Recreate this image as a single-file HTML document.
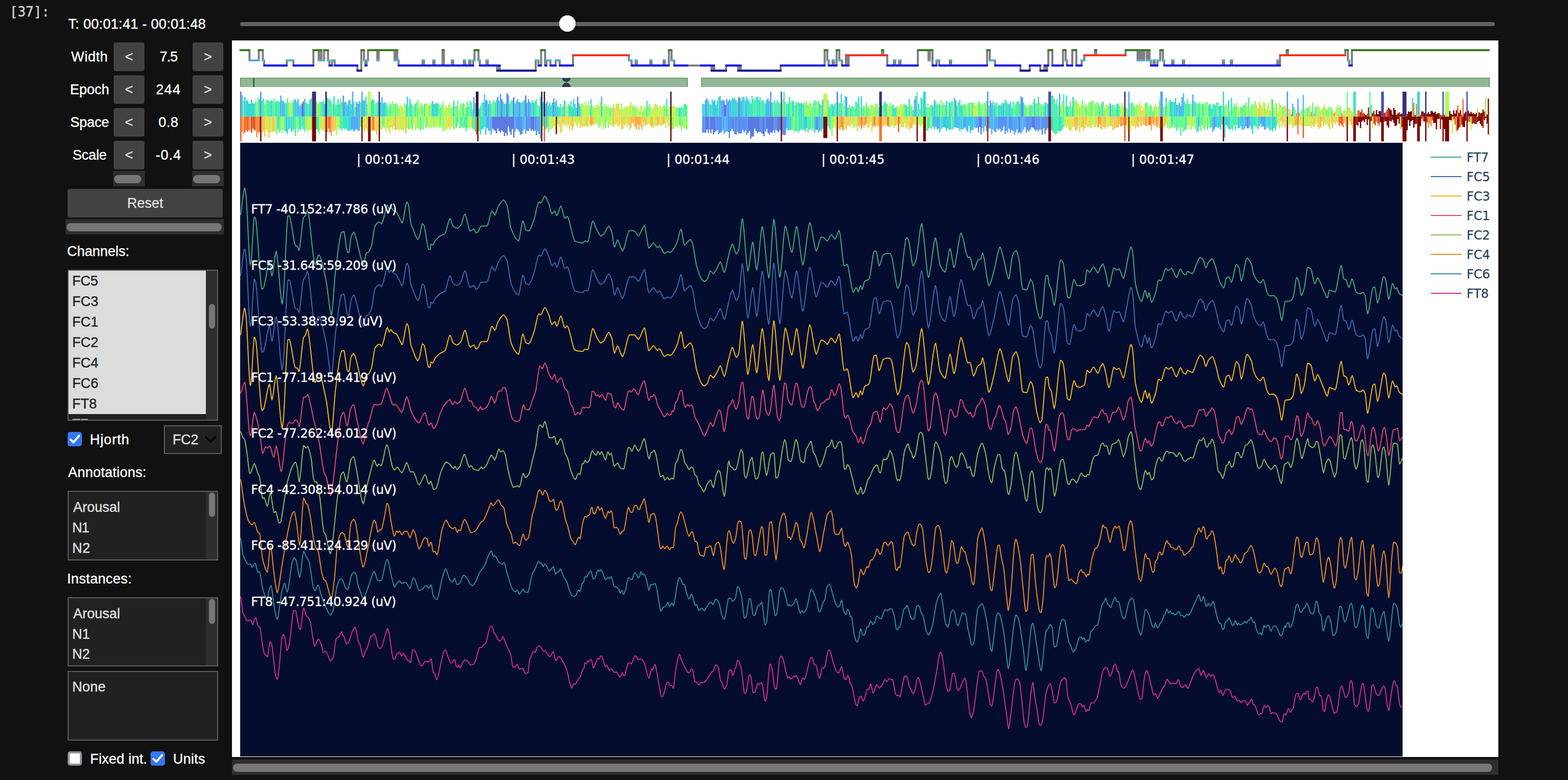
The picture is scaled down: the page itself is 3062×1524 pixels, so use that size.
<!DOCTYPE html>
<html lang="en"><head><meta charset="utf-8"><title>EEG viewer</title>
<style>
html,body{margin:0;padding:0;background:#111111;}
body{-webkit-text-stroke:0.4px currentColor;width:3062px;height:1524px;position:relative;overflow:hidden;font-family:"Liberation Sans",sans-serif;color:#fff;}
.a{position:absolute;}
.t{position:absolute;margin-top:0px;font-size:27px;line-height:26px;white-space:nowrap;color:#fff;}
.c{text-align:center;}
.btn{position:absolute;background:#424242;border-radius:4px;color:#e0e0e0;font-size:27px;line-height:26px;text-align:center;}
.trk{position:absolute;background:#2e2e2e;}
.thm{position:absolute;background:#767676;border-radius:8px;}
.lb{position:absolute;box-sizing:border-box;border:2px solid #5e5e5e;background:#212121;}
.li{position:absolute;margin-top:-0.4px;left:7px;font-size:27px;line-height:26px;color:#e0e0e0;white-space:nowrap;}
.cb{position:absolute;width:28px;height:28px;border-radius:5px;background:#3478f6;}
svg text.pt{font-family:"DejaVu Sans","Liberation Sans",sans-serif;font-size:24px;fill:#fff;stroke:#fff;stroke-width:0.35px;}
svg text.pl{font-family:"DejaVu Sans","Liberation Sans",sans-serif;font-size:24px;letter-spacing:-0.36px;fill:#fff;stroke:#fff;stroke-width:0.35px;}
svg text.lg{font-family:"DejaVu Sans","Liberation Sans",sans-serif;font-size:24px;fill:#2a3f5f;stroke:#2a3f5f;stroke-width:0.3px;}
</style></head><body>
<div class="t" id="prompt" style="font-size:26px;left:19px;top:9.7px;font-family:'DejaVu Sans Mono','Liberation Mono',monospace;color:#d4d4d4;letter-spacing:-0.1px">[37]:</div>
<div class="t" id="tlabel" style="left:133.3px;top:33.8px;letter-spacing:0.28px"><span id="tl">T: 00:01:41 - 00:01:48</span></div>

<!-- top slider -->
<div class="a" style="left:469px;top:43px;width:2450px;height:8px;border-radius:3px;background:#616161"></div>
<div class="a" style="left:1092px;top:30px;width:32px;height:32px;border-radius:16px;background:#fff;box-shadow:inset 0 0 0 2px #ececec"></div>

<!-- control rows -->
<div class="t c" style="left:132px;width:86px;top:97.8px"><span id="lw" style="letter-spacing:0.55px">Width</span></div>
<div class="btn" style="left:222px;top:83px;width:60px;height:56px"><span class="a" style="left:0;right:0;top:15px">&lt;</span></div>
<div class="t c" style="left:282px;width:94px;top:97.8px"><span id="v1" style="letter-spacing:-1.0px">7.5</span></div>
<div class="btn" style="left:376px;top:83px;width:60px;height:56px"><span class="a" style="left:0;right:0;top:15px">&gt;</span></div>

<div class="t c" style="left:132px;width:86px;top:161.8px"><span id="le">Epoch</span></div>
<div class="btn" style="left:222px;top:147px;width:60px;height:56px"><span class="a" style="left:0;right:0;top:15px">&lt;</span></div>
<div class="t c" style="left:282px;width:94px;top:161.8px"><span id="v2" style="letter-spacing:1.25px">244</span></div>
<div class="btn" style="left:376px;top:147px;width:60px;height:56px"><span class="a" style="left:0;right:0;top:15px">&gt;</span></div>

<div class="t c" style="left:132px;width:86px;top:225.8px"><span id="lsp" style="letter-spacing:-0.17px">Space</span></div>
<div class="btn" style="left:222px;top:211px;width:60px;height:56px"><span class="a" style="left:0;right:0;top:15px">&lt;</span></div>
<div class="t c" style="left:282px;width:94px;top:225.8px"><span id="v3" style="letter-spacing:0.55px">0.8</span></div>
<div class="btn" style="left:376px;top:211px;width:60px;height:56px"><span class="a" style="left:0;right:0;top:15px">&gt;</span></div>

<div class="t c" style="left:132px;width:86px;top:289.8px"><span id="lsc" style="letter-spacing:-0.23px">Scale</span></div>
<div class="btn" style="left:222px;top:275px;width:60px;height:56px"><span class="a" style="left:0;right:0;top:15px">&lt;</span></div>
<div class="t c" style="left:282px;width:94px;top:289.8px"><span id="v4" style="letter-spacing:0.9px">-0.4</span></div>
<div class="btn" style="left:376px;top:275px;width:60px;height:56px"><span class="a" style="left:0;right:0;top:15px">&gt;</span></div>

<div class="trk" style="left:221px;top:334px;width:62px;height:30px"></div>
<div class="thm" style="left:223px;top:342px;width:53px;height:16px"></div>
<div class="trk" style="left:375px;top:334px;width:62px;height:30px"></div>
<div class="thm" style="left:377px;top:342px;width:53px;height:16px"></div>

<div class="btn" style="left:132px;top:369px;width:303px;height:56px"><span class="a" style="left:0;right:0;top:15px" id="rst">Reset</span></div>
<div class="trk" style="left:128px;top:428px;width:309px;height:30px"></div>
<div class="thm" style="left:130px;top:436px;width:303px;height:16px"></div>

<div class="t" style="left:131px;top:477.5px"><span id="lch">Channels:</span></div>
<div class="lb" style="left:132px;top:527px;width:294px;height:295px;overflow:hidden">
  <div class="a" style="left:0;top:0;width:268px;height:280px;background:#dcdcdc"></div>
  <div class="a" style="left:268px;top:0;width:22px;height:291px;background:#2e2e2e"></div>
  <div class="thm" style="left:274px;top:64.7px;width:12px;height:48px;border-radius:6px"></div>
  <div class="li" style="top:7.2px;color:#212121"><span id="i5" style="letter-spacing:-0.3px">FC5</span></div>
  <div class="li" style="top:47.2px;color:#212121">FC3</div>
  <div class="li" style="top:87.2px;color:#212121">FC1</div>
  <div class="li" style="top:127.2px;color:#212121">FC2</div>
  <div class="li" style="top:167.2px;color:#212121">FC4</div>
  <div class="li" style="top:207.2px;color:#212121">FC6</div>
  <div class="li" style="top:247.2px;color:#212121"><span id="i8">FT8</span></div>
  <div class="li" style="top:287.2px">T7</div>
</div>

<div class="cb" style="left:132px;top:844px"><svg class="a" style="left:0;top:0" width="28" height="28" viewBox="0 0 28 28"><path d="M5.6 14.8 L11.4 20.2 L22.5 7.4" fill="none" stroke="#fff" stroke-width="3.9" stroke-linecap="round" stroke-linejoin="round"/></svg></div>
<div class="t" style="left:175.5px;top:846px"><span id="lhj" style="letter-spacing:0.92px">Hjorth</span></div>
<div class="lb" style="left:320px;top:831px;width:113px;height:56px"></div>
<div class="t" style="left:337px;top:846px;color:#e0e0e0"><span id="sel" style="letter-spacing:-0.3px">FC2</span></div>
<svg class="a" style="left:398px;top:848px" width="28" height="22" viewBox="0 0 28 22"><path d="M3.3 5 L13.3 15.2 L23.3 5" fill="none" stroke="#000" stroke-width="3.3" stroke-linecap="butt" stroke-linejoin="miter"/></svg>

<div class="t" style="left:133px;top:909.7px"><span id="lan" style="letter-spacing:0.25px">Annotations:</span></div>
<div class="lb" style="left:132px;top:959px;width:294px;height:136px;overflow:hidden">
  <div class="a" style="left:268px;top:0;width:22px;height:132px;background:#2e2e2e"></div>
  <div class="thm" style="left:274px;top:1.3px;width:12px;height:48px;border-radius:6px"></div>
  <div class="li" style="top:16.9px"><span id="ar1" style="padding-left:2px">Arousal</span></div>
  <div class="li" style="top:56.9px"><span id="n1" style="letter-spacing:-1.0px">N1</span></div>
  <div class="li" style="top:96.9px"><span id="n2" style="letter-spacing:0.4px">N2</span></div>
</div>

<div class="t" style="left:131px;top:1118px"><span id="lin" style="letter-spacing:0.34px">Instances:</span></div>
<div class="lb" style="left:132px;top:1167px;width:294px;height:135px;overflow:hidden">
  <div class="a" style="left:268px;top:0;width:22px;height:131px;background:#2e2e2e"></div>
  <div class="thm" style="left:274px;top:0.8px;width:12px;height:49px;border-radius:6px"></div>
  <div class="li" style="top:17.3px;padding-left:2px">Arousal</div>
  <div class="li" style="top:57.3px">N1</div>
  <div class="li" style="top:96.6px">N2</div>
</div>
<div class="lb" style="left:132px;top:1311px;width:294px;height:136px;overflow:hidden">
  <div class="li" style="top:16.8px"><span id="lnone" style="letter-spacing:0.2px">None</span></div>
</div>

<div class="a" style="left:132px;top:1468px;width:28px;height:28px;box-sizing:border-box;border:4px solid #8e8e9c;border-radius:5px;background:#fff"></div>
<div class="t" style="left:176px;top:1470.2px"><span id="lfx" style="letter-spacing:0.2px">Fixed int.</span></div>
<div class="cb" style="left:294px;top:1468px"><svg class="a" style="left:0;top:0" width="28" height="28" viewBox="0 0 28 28"><path d="M5.6 14.8 L11.4 20.2 L22.5 7.4" fill="none" stroke="#fff" stroke-width="3.9" stroke-linecap="round" stroke-linejoin="round"/></svg></div>
<div class="t" style="left:338px;top:1470.2px"><span id="lun" style="letter-spacing:0.25px">Units</span></div>

<!-- plot panel -->
<div class="a" style="left:453px;top:79px;width:2473px;height:1400px;background:#fff"></div>
<div class="trk" style="left:453px;top:1484px;width:2473px;height:30px"></div>
<div class="thm" style="left:455px;top:1492px;width:2459px;height:16px"></div>

<svg class="a" style="left:0;top:0" width="3062" height="1524" viewBox="0 0 3062 1524">
<!-- hypnogram -->
<path d="M469.0 98H487.2V118H505.4V98H513.2V118H515.8V128H560.0V118H573.0V128H612.0V98H622.4V118H625.0V98H627.6V118H632.8V98H640.6V118H643.2V128H648.4V118H653.6V128H697.8V138H705.6V98H710.8V118H713.4V128H716.0V118H718.6V98H736.8V118H739.4V98H770.6V118H773.2V98H775.8V118H778.4V128H825.2V118H827.8V128H846.0V118H848.6V128H864.2V98H866.8V128H882.4V118H885.0V128H905.8V118H908.4V128H916.2V118H918.8V128H924.0V118H926.6V98H934.4V118H937.0V128H950.0V118H952.6V128H970.8V138H973.4V128H976.0V138H1046.2V118H1051.4V128H1056.6V98H1064.4V128H1067.0V118H1074.8V128H1085.2V118H1093.0V128H1119.0V108H1228.2V118H1233.4V128H1241.2V118H1243.8V128H1269.8V118H1272.4V128H1295.8V118H1298.4V128H1306.2V98H1311.4V118H1316.6V128H1389.4V138H1392.0V128H1394.6V138H1418.0V128H1441.4V138H1444.0V128H1446.6V138H1524.6V128H1610.4V98H1615.6V118H1618.2V128H1626.0V118H1628.6V128H1633.8V98H1639.0V118H1644.2V128H1652.0V108H1654.6V128H1657.2V108H1722.2V98H1724.8V108H1732.6V128H1745.6V118H1748.2V128H1756.0V118H1758.6V128H1792.4V98H1813.2V118H1815.8V98H1821.0V128H1828.8V118H1834.0V128H1854.8V118H1857.4V128H1927.6V98H1932.8V118H1943.2V128H1992.6V138H2010.8V128H2031.6V138H2039.4V128H2042.0V138H2044.6V128H2047.2V98H2055.0V128H2075.8V98H2081.0V118H2083.6V128H2094.0V98H2101.8V128H2112.2V118H2117.4V108H2138.2V98H2140.8V108H2198.0V98H2221.4V118H2224.0V98H2226.6V118H2229.2V98H2231.8V118H2234.4V98H2239.6V118H2242.2V98H2244.8V118H2247.4V128H2252.6V118H2255.2V128H2260.4V118H2265.6V98H2270.8V118H2273.4V128H2289.0V118H2291.6V128H2309.8V118H2312.4V128H2387.8V118H2390.4V128H2403.4V118H2406.0V128H2494.4V118H2497.0V128H2499.6V108H2512.6V98H2515.2V108H2627.0V98H2632.2V118H2634.8V128H2640.0V98H2907.8" fill="none" stroke="#808080" stroke-width="4" stroke-linejoin="miter"/>
<path d="M469.3 98H486.9M505.7 98H512.9M612.3 98H622.1M625.3 98H627.3M633.1 98H640.3M705.9 98H710.5M718.9 98H736.5M739.7 98H770.3M773.5 98H775.5M864.5 98H866.5M926.9 98H934.1M1056.9 98H1064.1M1306.5 98H1311.1M1610.7 98H1615.3M1634.1 98H1638.7M1722.5 98H1724.5M1792.7 98H1812.9M1816.1 98H1820.7M1927.9 98H1932.5M2047.5 98H2054.7M2076.1 98H2080.7M2094.3 98H2101.5M2138.5 98H2140.5M2198.3 98H2221.1M2224.3 98H2226.3M2229.5 98H2231.5M2234.7 98H2239.3M2242.5 98H2244.5M2265.9 98H2270.5M2512.9 98H2514.9M2627.3 98H2631.9M2640.3 98H2907.5" fill="none" stroke="#3a7d1e" stroke-width="4" stroke-linecap="round"/>
<path d="M1119.3 108H1227.9M1652.3 108H1654.3M1657.5 108H1721.9M1725.1 108H1732.3M2117.7 108H2137.9M2141.1 108H2197.7M2499.9 108H2512.3M2515.5 108H2626.7" fill="none" stroke="#ee3322" stroke-width="4" stroke-linecap="round"/>
<path d="M487.5 118H505.1M513.5 118H515.5M560.3 118H572.7M622.7 118H624.7M627.9 118H632.5M640.9 118H642.9M648.7 118H653.3M711.1 118H713.1M716.3 118H718.3M737.1 118H739.1M770.9 118H772.9M776.1 118H778.1M825.5 118H827.5M846.3 118H848.3M882.7 118H884.7M906.1 118H908.1M916.5 118H918.5M924.3 118H926.3M934.7 118H936.7M950.3 118H952.3M1046.5 118H1051.1M1067.3 118H1074.5M1085.5 118H1092.7M1228.5 118H1233.1M1241.5 118H1243.5M1270.1 118H1272.1M1296.1 118H1298.1M1311.7 118H1316.3M1615.9 118H1617.9M1626.3 118H1628.3M1639.3 118H1643.9M1745.9 118H1747.9M1756.3 118H1758.3M1813.5 118H1815.5M1829.1 118H1833.7M1855.1 118H1857.1M1933.1 118H1942.9M2081.3 118H2083.3M2112.5 118H2117.1M2221.7 118H2223.7M2226.9 118H2228.9M2232.1 118H2234.1M2239.9 118H2241.9M2245.1 118H2247.1M2252.9 118H2254.9M2260.7 118H2265.3M2271.1 118H2273.1M2289.3 118H2291.3M2310.1 118H2312.1M2388.1 118H2390.1M2403.7 118H2405.7M2494.7 118H2496.7M2632.5 118H2634.5" fill="none" stroke="#55b0d8" stroke-width="4" stroke-linecap="round"/>
<path d="M516.1 128H559.7M573.3 128H611.7M643.5 128H648.1M653.9 128H697.5M713.7 128H715.7M778.7 128H824.9M828.1 128H845.7M848.9 128H863.9M867.1 128H882.1M885.3 128H905.5M908.7 128H915.9M919.1 128H923.7M937.3 128H949.7M952.9 128H970.5M973.7 128H975.7M1051.7 128H1056.3M1064.7 128H1066.7M1075.1 128H1084.9M1093.3 128H1118.7M1233.7 128H1240.9M1244.1 128H1269.5M1272.7 128H1295.5M1298.7 128H1305.9M1316.9 128H1342.3M1368.9 128H1389.1M1392.3 128H1394.3M1418.3 128H1441.1M1444.3 128H1446.3M1524.9 128H1610.1M1618.5 128H1625.7M1628.9 128H1633.5M1644.5 128H1651.7M1654.9 128H1656.9M1732.9 128H1745.3M1748.5 128H1755.7M1758.9 128H1792.1M1821.3 128H1828.5M1834.3 128H1854.5M1857.7 128H1927.3M1943.5 128H1992.3M2011.1 128H2031.3M2039.7 128H2041.7M2044.9 128H2046.9M2055.3 128H2075.5M2083.9 128H2093.7M2102.1 128H2111.9M2247.7 128H2252.3M2255.5 128H2260.1M2273.7 128H2288.7M2291.9 128H2309.5M2312.7 128H2387.5M2390.7 128H2403.1M2406.3 128H2494.1M2497.3 128H2499.3M2635.1 128H2639.7" fill="none" stroke="#0000f0" stroke-width="4" stroke-linecap="round"/>
<path d="M698.1 138H705.3M971.1 138H973.1M976.3 138H1045.9M1389.7 138H1391.7M1394.9 138H1417.7M1441.7 138H1443.7M1446.9 138H1524.3M1992.9 138H2010.5M2031.9 138H2039.1M2042.3 138H2044.3" fill="none" stroke="#00008b" stroke-width="4" stroke-linecap="round"/>
<!-- band -->
<rect x="469" y="152" width="874" height="18" fill="#93b796"/>
<rect x="1369.5" y="152" width="1539.5" height="18" fill="#93b796"/>
<path d="M469.5 170V152.5H1342.5V170M1370 170V152.5H2908.5V170" fill="none" stroke="#3a7a32" stroke-width="1"/>
<rect x="494.2" y="152" width="2.8" height="18" fill="#2f6d28"/>
<clipPath id="bc"><rect x="1090" y="153" width="32" height="17"/></clipPath>
<g clip-path="url(#bc)"><circle cx="1106" cy="152" r="8.2" fill="#1a3a57"/><circle cx="1106" cy="170" r="8.2" fill="#1a3a57"/><rect x="1105" y="152" width="2" height="18" fill="#7a3e1c"/></g>
<!-- bars -->
<path fill="#5b7be1" d="M469.0 227.7v-48.6h2.6v48.6zM588.6 227.7v-25.9h2.6v25.9zM591.2 227.7v-30.0h2.6v30.0zM960.4 227.7v23.7h2.6v-23.7zM963.0 227.7v25.9h2.6v-25.9zM965.6 227.7v28.1h2.6v-28.1zM968.2 227.7v33.0h2.6v-33.0zM970.8 227.7v23.4h2.6v-23.4zM973.4 227.7v28.4h2.6v-28.4zM976.0 227.7v31.2h2.6v-31.2zM978.6 227.7v-33.9h2.6v33.9zM978.6 227.7v27.2h2.6v-27.2zM981.2 227.7v29.9h2.6v-29.9zM983.8 227.7v38.4h2.6v-38.4zM986.4 227.7v31.8h2.6v-31.8zM989.0 227.7v-45.8h2.6v45.8zM989.0 227.7v37.1h2.6v-37.1zM991.6 227.7v19.3h2.6v-19.3zM994.2 227.7v30.0h2.6v-30.0zM996.8 227.7v35.7h2.6v-35.7zM999.4 227.7v24.3h2.6v-24.3zM1002.0 227.7v-37.4h2.6v37.4zM1002.0 227.7v41.4h2.6v-41.4zM1025.4 227.7v-41.2h2.6v41.2zM1028.0 227.7v27.5h2.6v-27.5zM1035.8 227.7v27.5h2.6v-27.5zM1038.4 227.7v25.0h2.6v-25.0zM1041.0 227.7v28.2h2.6v-28.2zM1126.8 227.7v-39.0h2.6v39.0zM1376.4 227.7v32.0h2.6v-32.0zM1379.0 227.7v25.5h2.6v-25.5zM1381.6 227.7v31.7h2.6v-31.7zM1386.8 227.7v32.7h2.6v-32.7zM1389.4 227.7v25.0h2.6v-25.0zM1392.0 227.7v34.7h2.6v-34.7zM1394.6 227.7v30.8h2.6v-30.8zM1412.8 227.7v-31.2h2.6v31.2zM1415.4 227.7v-23.2h2.6v23.2zM1431.0 227.7v29.1h2.6v-29.1zM1436.2 227.7v35.0h2.6v-35.0zM1441.4 227.7v-37.9h2.6v37.9zM1441.4 227.7v33.4h2.6v-33.4zM1459.6 227.7v32.4h2.6v-32.4zM1462.2 227.7v28.5h2.6v-28.5zM1464.8 227.7v43.5h2.6v-43.5zM1467.4 227.7v39.2h2.6v-39.2zM1470.0 227.7v38.7h2.6v-38.7zM1472.6 227.7v23.5h2.6v-23.5zM1475.2 227.7v28.2h2.6v-28.2zM1477.8 227.7v32.7h2.6v-32.7zM1480.4 227.7v29.7h2.6v-29.7zM1488.2 227.7v33.8h2.6v-33.8zM1490.8 227.7v38.6h2.6v-38.6zM1496.0 227.7v24.1h2.6v-24.1zM1498.6 227.7v32.4h2.6v-32.4zM1501.2 227.7v35.2h2.6v-35.2zM1503.8 227.7v31.1h2.6v-31.1zM1506.4 227.7v31.8h2.6v-31.8zM1509.0 227.7v27.4h2.6v-27.4zM1516.8 227.7v28.4h2.6v-28.4zM1519.4 227.7v30.7h2.6v-30.7zM1522.0 227.7v26.8h2.6v-26.8zM1594.8 227.7v26.0h2.6v-26.0zM1633.8 227.7v-48.6h2.6v48.6zM1912.0 227.7v20.6h2.6v-20.6zM1914.6 227.7v34.7h2.6v-34.7zM1990.0 227.7v30.6h2.6v-30.6zM1995.2 227.7v-37.2h2.6v37.2zM2005.6 227.7v26.2h2.6v-26.2zM2016.0 227.7v22.0h2.6v-22.0zM2018.6 227.7v25.0h2.6v-25.0zM2023.8 227.7v25.6h2.6v-25.6zM2034.2 227.7v35.3h2.6v-35.3zM2434.6 227.7v23.1h2.6v-23.1z"/>
<path fill="#e55c28" d="M469.0 227.7v48.6h2.6v-48.6zM476.8 227.7v31.2h2.6v-31.2zM482.0 227.7v29.5h2.6v-29.5zM492.4 227.7v23.4h2.6v-23.4zM505.4 227.7v31.0h2.6v-31.0zM929.2 227.7v35.0h2.6v-35.0zM1061.8 227.7v48.6h2.6v-48.6zM1732.6 227.7v18.3h2.6v-18.3zM1753.4 227.7v30.0h2.6v-30.0zM2195.4 227.7v48.6h2.6v-48.6zM2244.8 227.7v17.1h2.6v-17.1zM2543.8 227.7v42.0h2.6v-42.0zM2616.6 227.7v13.6h2.6v-13.6zM2619.2 227.7v17.6h2.6v-17.6zM2653.0 227.7v-11.6h2.6v11.6zM2692.0 227.7v17.9h2.6v-17.9zM2705.0 227.7v-9.3h2.6v9.3zM2777.8 227.7v9.2h2.6v-9.2zM2840.2 227.7v15.5h2.6v-15.5zM2866.2 227.7v9.5h2.6v-9.5zM2868.8 227.7v11.1h2.6v-11.1z"/>
<path fill="#37d7d6" d="M471.6 227.7v-41.6h2.6v41.6zM482.0 227.7v-31.5h2.6v31.5zM484.6 227.7v-25.8h2.6v25.8zM487.2 227.7v-25.1h2.6v25.1zM489.8 227.7v-33.5h2.6v33.5zM492.4 227.7v-26.2h2.6v26.2zM495.0 227.7v-25.1h2.6v25.1zM505.4 227.7v-34.3h2.6v34.3zM528.8 227.7v-32.0h2.6v32.0zM541.8 227.7v25.2h2.6v-25.2zM554.8 227.7v-26.8h2.6v26.8zM567.8 227.7v30.1h2.6v-30.1zM573.0 227.7v-33.1h2.6v33.1zM578.2 227.7v-28.2h2.6v28.2zM583.4 227.7v-21.9h2.6v21.9zM651.0 227.7v-39.8h2.6v39.8zM674.4 227.7v-28.7h2.6v28.7zM679.6 227.7v28.3h2.6v-28.3zM682.2 227.7v-32.4h2.6v32.4zM682.2 227.7v27.3h2.6v-27.3zM684.8 227.7v-24.2h2.6v24.2zM736.8 227.7v-29.1h2.6v29.1zM742.0 227.7v-27.7h2.6v27.7zM747.2 227.7v-26.1h2.6v26.1zM749.8 227.7v-27.7h2.6v27.7zM794.0 227.7v-39.0h2.6v39.0zM799.2 227.7v-34.2h2.6v34.2zM809.6 227.7v-24.9h2.6v24.9zM885.0 227.7v-31.5h2.6v31.5zM926.6 227.7v-26.4h2.6v26.4zM934.4 227.7v-15.5h2.6v15.5zM942.2 227.7v-27.4h2.6v27.4zM942.2 227.7v24.2h2.6v-24.2zM944.8 227.7v-42.6h2.6v42.6zM947.4 227.7v35.3h2.6v-35.3zM950.0 227.7v-31.5h2.6v31.5zM955.2 227.7v-31.8h2.6v31.8zM981.2 227.7v-28.7h2.6v28.7zM983.8 227.7v-24.6h2.6v24.6zM986.4 227.7v-25.5h2.6v25.5zM1004.6 227.7v-25.6h2.6v25.6zM1017.6 227.7v-27.5h2.6v27.5zM1035.8 227.7v-26.9h2.6v26.9zM1054.0 227.7v-38.4h2.6v38.4zM1054.0 227.7v43.3h2.6v-43.3zM1059.2 227.7v-28.0h2.6v28.0zM1067.0 227.7v21.8h2.6v-21.8zM1082.6 227.7v-28.0h2.6v28.0zM1085.2 227.7v-32.3h2.6v32.3zM1111.2 227.7v-21.3h2.6v21.3zM1119.0 227.7v-34.8h2.6v34.8zM1129.4 227.7v-26.3h2.6v26.3zM1152.8 227.7v-34.3h2.6v34.3zM1381.6 227.7v-32.3h2.6v32.3zM1386.8 227.7v-23.7h2.6v23.7zM1397.2 227.7v-22.4h2.6v22.4zM1399.8 227.7v-31.2h2.6v31.2zM1428.4 227.7v-35.6h2.6v35.6zM1431.0 227.7v-34.5h2.6v34.5zM1433.6 227.7v-36.4h2.6v36.4zM1459.6 227.7v-33.6h2.6v33.6zM1477.8 227.7v-38.6h2.6v38.6zM1493.4 227.7v-24.7h2.6v24.7zM1506.4 227.7v-27.2h2.6v27.2zM1540.2 227.7v26.7h2.6v-26.7zM1542.8 227.7v26.3h2.6v-26.3zM1548.0 227.7v-29.8h2.6v29.8zM1563.6 227.7v24.6h2.6v-24.6zM1568.8 227.7v25.0h2.6v-25.0zM1571.4 227.7v29.3h2.6v-29.3zM1589.6 227.7v31.7h2.6v-31.7zM1602.6 227.7v28.5h2.6v-28.5zM1605.2 227.7v23.5h2.6v-23.5zM1626.0 227.7v-21.5h2.6v21.5zM1641.6 227.7v-44.0h2.6v44.0zM1649.4 227.7v-40.1h2.6v40.1zM1675.4 227.7v-38.4h2.6v38.4zM1680.6 227.7v-40.1h2.6v40.1zM1774.2 227.7v-34.3h2.6v34.3zM1792.4 227.7v-25.2h2.6v25.2zM1797.6 227.7v-37.0h2.6v37.0zM1802.8 227.7v-48.6h2.6v48.6zM1805.4 227.7v-48.6h2.6v48.6zM1834.0 227.7v30.9h2.6v-30.9zM1839.2 227.7v22.0h2.6v-22.0zM1847.0 227.7v-30.7h2.6v30.7zM1847.0 227.7v27.8h2.6v-27.8zM1849.6 227.7v22.7h2.6v-22.7zM1852.2 227.7v-28.8h2.6v28.8zM1852.2 227.7v25.7h2.6v-25.7zM1854.8 227.7v25.7h2.6v-25.7zM1862.6 227.7v-37.0h2.6v37.0zM1873.0 227.7v28.4h2.6v-28.4zM1878.2 227.7v25.7h2.6v-25.7zM1899.0 227.7v26.9h2.6v-26.9zM1948.4 227.7v-21.4h2.6v21.4zM1953.6 227.7v-22.0h2.6v22.0zM1956.2 227.7v-27.5h2.6v27.5zM1964.0 227.7v-30.3h2.6v30.3zM1969.2 227.7v-24.0h2.6v24.0zM1971.8 227.7v-29.1h2.6v29.1zM1997.8 227.7v-26.8h2.6v26.8zM2039.4 227.7v-27.3h2.6v27.3zM2044.6 227.7v-24.7h2.6v24.7zM2052.4 227.7v27.0h2.6v-27.0zM2094.0 227.7v-38.4h2.6v38.4zM2276.0 227.7v-36.6h2.6v36.6zM2283.8 227.7v-32.6h2.6v32.6zM2286.4 227.7v-29.0h2.6v29.0zM2291.6 227.7v-27.6h2.6v27.6zM2294.2 227.7v-36.1h2.6v36.1zM2341.0 227.7v19.8h2.6v-19.8zM2372.2 227.7v-21.8h2.6v21.8zM2377.4 227.7v22.9h2.6v-22.9zM2380.0 227.7v-20.2h2.6v20.2zM2380.0 227.7v21.4h2.6v-21.4zM2382.6 227.7v-21.6h2.6v21.6zM2382.6 227.7v26.0h2.6v-26.0zM2387.8 227.7v-48.6h2.6v48.6zM2390.4 227.7v40.8h2.6v-40.8zM2393.0 227.7v16.5h2.6v-16.5zM2395.6 227.7v19.2h2.6v-19.2zM2398.2 227.7v-31.6h2.6v31.6zM2416.4 227.7v23.4h2.6v-23.4zM2419.0 227.7v22.6h2.6v-22.6zM2426.8 227.7v26.3h2.6v-26.3zM2442.4 227.7v24.8h2.6v-24.8zM2458.0 227.7v19.7h2.6v-19.7zM2471.0 227.7v24.2h2.6v-24.2zM2478.8 227.7v27.4h2.6v-27.4zM2484.0 227.7v-32.8h2.6v32.8zM2484.0 227.7v29.0h2.6v-29.0zM2486.6 227.7v22.9h2.6v-22.9zM2489.2 227.7v26.9h2.6v-26.9zM2767.4 227.7v-48.6h2.6v48.6zM2770.0 227.7v-48.6h2.6v48.6z"/>
<path fill="#f98e3c" d="M471.6 227.7v29.9h2.6v-29.9zM500.2 227.7v40.9h2.6v-40.9zM502.8 227.7v31.4h2.6v-31.4zM638.0 227.7v30.5h2.6v-30.5zM729.0 227.7v27.8h2.6v-27.8zM1152.8 227.7v17.9h2.6v-17.9zM1641.6 227.7v20.7h2.6v-20.7zM1644.2 227.7v26.2h2.6v-26.2zM1688.4 227.7v17.2h2.6v-17.2zM2143.4 227.7v21.2h2.6v-21.2zM2187.6 227.7v19.7h2.6v-19.7zM2192.8 227.7v17.0h2.6v-17.0zM2198.0 227.7v16.6h2.6v-16.6zM2237.0 227.7v18.0h2.6v-18.0zM2257.8 227.7v21.1h2.6v-21.1zM2520.4 227.7v-5.2h2.6v5.2zM2530.8 227.7v-6.8h2.6v6.8zM2536.0 227.7v-7.9h2.6v7.9zM2559.4 227.7v-9.5h2.6v9.5zM2564.6 227.7v-5.4h2.6v5.4zM2603.6 227.7v-6.8h2.6v6.8zM2619.2 227.7v-7.0h2.6v7.0zM2621.8 227.7v20.7h2.6v-20.7zM2764.8 227.7v-24.8h2.6v24.8zM2788.2 227.7v21.9h2.6v-21.9zM2790.8 227.7v12.8h2.6v-12.8zM2793.4 227.7v18.4h2.6v-18.4zM2842.8 227.7v29.2h2.6v-29.2z"/>
<path fill="#6bfa86" d="M474.2 227.7v-31.1h2.6v31.1zM502.8 227.7v-37.2h2.6v37.2zM515.8 227.7v-23.8h2.6v23.8zM518.4 227.7v-31.3h2.6v31.3zM534.0 227.7v-35.4h2.6v35.4zM539.2 227.7v34.9h2.6v-34.9zM562.6 227.7v-27.1h2.6v27.1zM580.8 227.7v30.0h2.6v-30.0zM648.4 227.7v-24.5h2.6v24.5zM703.0 227.7v19.9h2.6v-19.9zM716.0 227.7v-22.8h2.6v22.8zM731.6 227.7v-24.9h2.6v24.9zM755.0 227.7v-22.6h2.6v22.6zM757.6 227.7v-15.2h2.6v15.2zM762.8 227.7v-23.6h2.6v23.6zM796.6 227.7v-20.4h2.6v20.4zM801.8 227.7v22.4h2.6v-22.4zM804.4 227.7v-22.0h2.6v22.0zM804.4 227.7v26.0h2.6v-26.0zM812.2 227.7v-27.6h2.6v27.6zM814.8 227.7v-32.8h2.6v32.8zM814.8 227.7v23.6h2.6v-23.6zM825.2 227.7v25.4h2.6v-25.4zM830.4 227.7v22.8h2.6v-22.8zM833.0 227.7v20.4h2.6v-20.4zM840.8 227.7v-26.0h2.6v26.0zM856.4 227.7v-22.4h2.6v22.4zM859.0 227.7v-18.9h2.6v18.9zM859.0 227.7v19.5h2.6v-19.5zM861.6 227.7v-23.9h2.6v23.9zM882.4 227.7v-18.2h2.6v18.2zM885.0 227.7v25.9h2.6v-25.9zM890.2 227.7v-20.5h2.6v20.5zM892.8 227.7v-31.3h2.6v31.3zM903.2 227.7v22.2h2.6v-22.2zM916.2 227.7v-31.6h2.6v31.6zM939.6 227.7v-28.3h2.6v28.3zM960.4 227.7v-26.7h2.6v26.7zM963.0 227.7v-32.1h2.6v32.1zM1048.8 227.7v-22.7h2.6v22.7zM1069.6 227.7v31.1h2.6v-31.1zM1095.6 227.7v-18.9h2.6v18.9zM1181.4 227.7v22.7h2.6v-22.7zM1189.2 227.7v-18.0h2.6v18.0zM1191.8 227.7v-16.1h2.6v16.1zM1254.2 227.7v-10.9h2.6v10.9zM1267.2 227.7v-24.3h2.6v24.3zM1295.8 227.7v-22.9h2.6v22.9zM1319.2 227.7v-16.5h2.6v16.5zM1332.2 227.7v-18.3h2.6v18.3zM1332.2 227.7v19.7h2.6v-19.7zM1340.0 227.7v-21.8h2.6v21.8zM1340.0 227.7v25.0h2.6v-25.0zM1509.0 227.7v-28.1h2.6v28.1zM1532.4 227.7v-28.8h2.6v28.8zM1542.8 227.7v-28.1h2.6v28.1zM1550.6 227.7v-22.8h2.6v22.8zM1550.6 227.7v30.4h2.6v-30.4zM1555.8 227.7v-26.8h2.6v26.8zM1555.8 227.7v28.4h2.6v-28.4zM1584.4 227.7v-18.3h2.6v18.3zM1584.4 227.7v28.2h2.6v-28.2zM1587.0 227.7v-27.3h2.6v27.3zM1592.2 227.7v-30.4h2.6v30.4zM1615.6 227.7v18.0h2.6v-18.0zM1620.8 227.7v26.8h2.6v-26.8zM1631.2 227.7v-27.1h2.6v27.1zM1644.2 227.7v-25.9h2.6v25.9zM1657.2 227.7v-23.4h2.6v23.4zM1665.0 227.7v-19.3h2.6v19.3zM1667.6 227.7v-16.1h2.6v16.1zM1683.2 227.7v-17.6h2.6v17.6zM1691.0 227.7v-27.5h2.6v27.5zM1693.6 227.7v-18.9h2.6v18.9zM1696.2 227.7v-15.7h2.6v15.7zM1706.6 227.7v-18.9h2.6v18.9zM1714.4 227.7v-18.0h2.6v18.0zM1740.4 227.7v-20.6h2.6v20.6zM1763.8 227.7v-25.0h2.6v25.0zM1771.6 227.7v-20.0h2.6v20.0zM1789.8 227.7v-48.6h2.6v48.6zM1795.0 227.7v-15.1h2.6v15.1zM1815.8 227.7v-22.6h2.6v22.6zM1818.4 227.7v24.8h2.6v-24.8zM1831.4 227.7v-25.8h2.6v25.8zM1841.8 227.7v-28.2h2.6v28.2zM1857.4 227.7v24.5h2.6v-24.5zM1880.8 227.7v-25.4h2.6v25.4zM1883.4 227.7v-23.6h2.6v23.6zM1886.0 227.7v-20.6h2.6v20.6zM1899.0 227.7v-26.9h2.6v26.9zM1909.4 227.7v-30.7h2.6v30.7zM1914.6 227.7v-21.8h2.6v21.8zM1922.4 227.7v-27.1h2.6v27.1zM1925.0 227.7v-31.0h2.6v31.0zM1945.8 227.7v-27.0h2.6v27.0zM1979.6 227.7v-22.1h2.6v22.1zM2000.4 227.7v-23.2h2.6v23.2zM2003.0 227.7v-19.6h2.6v19.6zM2008.2 227.7v-21.5h2.6v21.5zM2023.8 227.7v-25.5h2.6v25.5zM2065.4 227.7v-21.1h2.6v21.1zM2075.8 227.7v20.9h2.6v-20.9zM2086.2 227.7v-19.4h2.6v19.4zM2091.4 227.7v-17.8h2.6v17.8zM2096.6 227.7v-29.7h2.6v29.7zM2112.2 227.7v-32.9h2.6v32.9zM2127.8 227.7v-27.3h2.6v27.3zM2130.4 227.7v-30.8h2.6v30.8zM2138.2 227.7v-25.7h2.6v25.7zM2143.4 227.7v-26.5h2.6v26.5zM2164.2 227.7v-21.1h2.6v21.1zM2169.4 227.7v-22.1h2.6v22.1zM2174.6 227.7v-23.3h2.6v23.3zM2177.2 227.7v-17.9h2.6v17.9zM2185.0 227.7v-22.0h2.6v22.0zM2200.6 227.7v-15.3h2.6v15.3zM2211.0 227.7v-26.6h2.6v26.6zM2247.4 227.7v-21.1h2.6v21.1zM2250.0 227.7v-11.2h2.6v11.2zM2252.6 227.7v-19.6h2.6v19.6zM2263.0 227.7v-31.7h2.6v31.7zM2270.8 227.7v-19.7h2.6v19.7zM2291.6 227.7v22.7h2.6v-22.7zM2294.2 227.7v20.7h2.6v-20.7zM2299.4 227.7v24.1h2.6v-24.1zM2302.0 227.7v20.1h2.6v-20.1zM2307.2 227.7v21.5h2.6v-21.5zM2309.8 227.7v29.0h2.6v-29.0zM2312.4 227.7v27.6h2.6v-27.6zM2322.8 227.7v-24.2h2.6v24.2zM2335.8 227.7v-25.6h2.6v25.6zM2338.4 227.7v-24.9h2.6v24.9zM2343.6 227.7v28.3h2.6v-28.3zM2346.2 227.7v16.4h2.6v-16.4zM2348.8 227.7v23.6h2.6v-23.6zM2354.0 227.7v-28.1h2.6v28.1zM2377.4 227.7v-28.0h2.6v28.0zM2385.2 227.7v-20.7h2.6v20.7zM2390.4 227.7v-20.8h2.6v20.8zM2406.0 227.7v-17.9h2.6v17.9zM2408.6 227.7v-26.3h2.6v26.3zM2424.2 227.7v-18.9h2.6v18.9zM2426.8 227.7v-23.2h2.6v23.2zM2429.4 227.7v-22.2h2.6v22.2zM2432.0 227.7v-27.6h2.6v27.6zM2442.4 227.7v-21.9h2.6v21.9zM2468.4 227.7v-26.4h2.6v26.4zM2478.8 227.7v-13.0h2.6v13.0zM2504.8 227.7v-18.4h2.6v18.4zM2525.6 227.7v-18.4h2.6v18.4zM2554.2 227.7v-17.8h2.6v17.8zM2562.0 227.7v-27.5h2.6v27.5zM2569.8 227.7v-18.3h2.6v18.3zM2582.8 227.7v-18.2h2.6v18.2zM2593.2 227.7v-18.7h2.6v18.7zM2598.4 227.7v-18.6h2.6v18.6zM2616.6 227.7v-19.9h2.6v19.9zM2629.6 227.7v-48.6h2.6v48.6zM2673.8 227.7v-48.6h2.6v48.6z"/>
<path fill="#fdaa47" d="M474.2 227.7v34.3h2.6v-34.3zM487.2 227.7v26.9h2.6v-26.9zM645.8 227.7v37.6h2.6v-37.6zM770.6 227.7v26.1h2.6v-26.1zM1155.4 227.7v16.1h2.6v-16.1zM1238.6 227.7v19.9h2.6v-19.9zM1241.2 227.7v24.9h2.6v-24.9zM1243.8 227.7v15.2h2.6v-15.2zM1246.4 227.7v26.2h2.6v-26.2zM1249.0 227.7v16.7h2.6v-16.7zM1282.8 227.7v18.1h2.6v-18.1zM1639.0 227.7v27.0h2.6v-27.0zM1675.4 227.7v19.2h2.6v-19.2zM1683.2 227.7v18.3h2.6v-18.3zM1691.0 227.7v13.7h2.6v-13.7zM1704.0 227.7v20.3h2.6v-20.3zM1735.2 227.7v20.8h2.6v-20.8zM1748.2 227.7v17.9h2.6v-17.9zM1756.0 227.7v15.1h2.6v-15.1zM2101.8 227.7v25.9h2.6v-25.9zM2146.0 227.7v15.1h2.6v-15.1zM2148.6 227.7v23.7h2.6v-23.7zM2190.2 227.7v18.2h2.6v-18.2zM2247.4 227.7v27.2h2.6v-27.2zM2250.0 227.7v14.0h2.6v-14.0zM2252.6 227.7v18.6h2.6v-18.6zM2273.4 227.7v18.6h2.6v-18.6zM2528.2 227.7v17.2h2.6v-17.2zM2530.8 227.7v17.3h2.6v-17.3zM2577.6 227.7v21.2h2.6v-21.2zM2624.4 227.7v11.4h2.6v-11.4z"/>
<path fill="#44c1eb" d="M476.8 227.7v-38.5h2.6v38.5zM549.6 227.7v-31.5h2.6v31.5zM557.4 227.7v29.9h2.6v-29.9zM562.6 227.7v24.5h2.6v-24.5zM575.6 227.7v-33.9h2.6v33.9zM586.0 227.7v-22.0h2.6v22.0zM593.8 227.7v-34.7h2.6v34.7zM604.2 227.7v-33.1h2.6v33.1zM638.0 227.7v-36.5h2.6v36.5zM677.0 227.7v-22.3h2.6v22.3zM679.6 227.7v-31.1h2.6v31.1zM697.8 227.7v-25.0h2.6v25.0zM700.4 227.7v-30.1h2.6v30.1zM700.4 227.7v27.8h2.6v-27.8zM708.2 227.7v-31.9h2.6v31.9zM710.8 227.7v-31.6h2.6v31.6zM744.6 227.7v-38.4h2.6v38.4zM843.4 227.7v-30.6h2.6v30.6zM851.2 227.7v-26.3h2.6v26.3zM955.2 227.7v28.6h2.6v-28.6zM1009.8 227.7v-33.7h2.6v33.7zM1015.0 227.7v-27.8h2.6v27.8zM1020.2 227.7v28.7h2.6v-28.7zM1022.8 227.7v24.6h2.6v-24.6zM1028.0 227.7v-26.6h2.6v26.6zM1041.0 227.7v-26.7h2.6v26.7zM1064.4 227.7v-25.1h2.6v25.1zM1077.4 227.7v-27.5h2.6v27.5zM1087.8 227.7v-20.7h2.6v20.7zM1100.8 227.7v-31.9h2.6v31.9zM1173.6 227.7v-39.2h2.6v39.2zM1371.2 227.7v-25.2h2.6v25.2zM1392.0 227.7v-29.9h2.6v29.9zM1405.0 227.7v-39.8h2.6v39.8zM1415.4 227.7v30.2h2.6v-30.2zM1425.8 227.7v-30.8h2.6v30.8zM1436.2 227.7v-31.8h2.6v31.8zM1444.0 227.7v-36.3h2.6v36.3zM1446.6 227.7v-30.7h2.6v30.7zM1449.2 227.7v-38.5h2.6v38.5zM1454.4 227.7v-30.9h2.6v30.9zM1457.0 227.7v-39.4h2.6v39.4zM1496.0 227.7v-32.9h2.6v32.9zM1498.6 227.7v-35.4h2.6v35.4zM1501.2 227.7v-29.7h2.6v29.7zM1537.6 227.7v27.5h2.6v-27.5zM1563.6 227.7v-26.8h2.6v26.8zM1574.0 227.7v22.6h2.6v-22.6zM1597.4 227.7v31.5h2.6v-31.5zM1600.0 227.7v27.6h2.6v-27.6zM1605.2 227.7v-33.1h2.6v33.1zM1784.6 227.7v-33.4h2.6v33.4zM1821.0 227.7v19.9h2.6v-19.9zM1823.6 227.7v-32.9h2.6v32.9zM1823.6 227.7v24.5h2.6v-24.5zM1826.2 227.7v20.1h2.6v-20.1zM1841.8 227.7v20.5h2.6v-20.5zM1844.4 227.7v22.6h2.6v-22.6zM1862.6 227.7v20.6h2.6v-20.6zM1865.2 227.7v21.4h2.6v-21.4zM1870.4 227.7v22.7h2.6v-22.7zM1875.6 227.7v24.6h2.6v-24.6zM1886.0 227.7v27.4h2.6v-27.4zM1888.6 227.7v29.7h2.6v-29.7zM1891.2 227.7v18.4h2.6v-18.4zM1893.8 227.7v32.4h2.6v-32.4zM1896.4 227.7v26.4h2.6v-26.4zM1901.6 227.7v20.9h2.6v-20.9zM1919.8 227.7v30.1h2.6v-30.1zM1932.8 227.7v23.9h2.6v-23.9zM1935.4 227.7v-26.4h2.6v26.4zM1935.4 227.7v35.1h2.6v-35.1zM1938.0 227.7v25.3h2.6v-25.3zM1940.6 227.7v-21.5h2.6v21.5zM1958.8 227.7v-26.0h2.6v26.0zM1966.6 227.7v31.6h2.6v-31.6zM1995.2 227.7v29.8h2.6v-29.8zM2018.6 227.7v-35.3h2.6v35.3zM2151.2 227.7v-28.2h2.6v28.2zM2302.0 227.7v-27.8h2.6v27.8zM2304.6 227.7v-21.0h2.6v21.0zM2309.8 227.7v-45.3h2.6v45.3zM2338.4 227.7v28.6h2.6v-28.6zM2367.0 227.7v30.2h2.6v-30.2zM2374.8 227.7v19.7h2.6v-19.7zM2398.2 227.7v24.3h2.6v-24.3zM2421.6 227.7v18.7h2.6v-18.7zM2429.4 227.7v23.3h2.6v-23.3zM2439.8 227.7v18.4h2.6v-18.4zM2476.2 227.7v21.9h2.6v-21.9zM2543.8 227.7v-42.0h2.6v42.0z"/>
<path fill="#3ce6be" d="M479.4 227.7v-31.1h2.6v31.1zM513.2 227.7v-34.7h2.6v34.7zM526.2 227.7v-29.9h2.6v29.9zM536.6 227.7v-28.2h2.6v28.2zM539.2 227.7v-31.4h2.6v31.4zM557.4 227.7v-25.9h2.6v25.9zM560.0 227.7v34.2h2.6v-34.2zM565.2 227.7v23.6h2.6v-23.6zM570.4 227.7v28.2h2.6v-28.2zM583.4 227.7v24.5h2.6v-24.5zM586.0 227.7v26.4h2.6v-26.4zM591.2 227.7v25.0h2.6v-25.0zM596.4 227.7v-27.3h2.6v27.3zM606.8 227.7v-36.2h2.6v36.2zM617.2 227.7v24.6h2.6v-24.6zM619.8 227.7v30.1h2.6v-30.1zM627.6 227.7v-28.8h2.6v28.8zM630.2 227.7v-31.0h2.6v31.0zM643.2 227.7v-32.6h2.6v32.6zM658.8 227.7v-34.4h2.6v34.4zM661.4 227.7v-24.2h2.6v24.2zM669.2 227.7v22.5h2.6v-22.5zM671.8 227.7v25.2h2.6v-25.2zM674.4 227.7v23.7h2.6v-23.7zM677.0 227.7v26.9h2.6v-26.9zM692.6 227.7v-18.6h2.6v18.6zM713.4 227.7v-39.2h2.6v39.2zM723.8 227.7v-31.2h2.6v31.2zM726.4 227.7v-34.3h2.6v34.3zM752.4 227.7v-26.7h2.6v26.7zM801.8 227.7v-25.2h2.6v25.2zM827.8 227.7v-24.9h2.6v24.9zM846.0 227.7v-24.3h2.6v24.3zM848.6 227.7v-25.7h2.6v25.7zM853.8 227.7v-25.9h2.6v25.9zM890.2 227.7v21.9h2.6v-21.9zM900.6 227.7v20.1h2.6v-20.1zM903.2 227.7v-26.2h2.6v26.2zM918.8 227.7v-28.2h2.6v28.2zM926.6 227.7v29.8h2.6v-29.8zM937.0 227.7v-21.2h2.6v21.2zM937.0 227.7v35.4h2.6v-35.4zM939.6 227.7v25.2h2.6v-25.2zM944.8 227.7v20.8h2.6v-20.8zM965.6 227.7v-27.8h2.6v27.8zM968.2 227.7v-32.9h2.6v32.9zM973.4 227.7v-30.6h2.6v30.6zM994.2 227.7v-25.7h2.6v25.7zM999.4 227.7v-31.6h2.6v31.6zM1020.2 227.7v-29.7h2.6v29.7zM1038.4 227.7v-31.4h2.6v31.4zM1043.6 227.7v-30.8h2.6v30.8zM1064.4 227.7v25.1h2.6v-25.1zM1069.6 227.7v-22.1h2.6v22.1zM1072.2 227.7v-27.3h2.6v27.3zM1074.8 227.7v-22.2h2.6v22.2zM1090.4 227.7v-17.8h2.6v17.8zM1093.0 227.7v-25.0h2.6v25.0zM1098.2 227.7v-19.8h2.6v19.8zM1113.8 227.7v-29.9h2.6v29.9zM1116.4 227.7v-17.9h2.6v17.9zM1121.6 227.7v-25.5h2.6v25.5zM1124.2 227.7v-17.4h2.6v17.4zM1132.0 227.7v-20.7h2.6v20.7zM1262.0 227.7v-30.7h2.6v30.7zM1324.4 227.7v-17.9h2.6v17.9zM1327.0 227.7v-16.8h2.6v16.8zM1337.4 227.7v-25.2h2.6v25.2zM1373.8 227.7v-24.2h2.6v24.2zM1384.2 227.7v-26.1h2.6v26.1zM1389.4 227.7v-33.7h2.6v33.7zM1402.4 227.7v-38.7h2.6v38.7zM1438.8 227.7v-28.3h2.6v28.3zM1451.8 227.7v-38.7h2.6v38.7zM1462.2 227.7v-30.2h2.6v30.2zM1464.8 227.7v-25.7h2.6v25.7zM1467.4 227.7v-40.5h2.6v40.5zM1472.6 227.7v-31.9h2.6v31.9zM1480.4 227.7v-32.1h2.6v32.1zM1483.0 227.7v-38.3h2.6v38.3zM1488.2 227.7v-32.3h2.6v32.3zM1514.2 227.7v-26.4h2.6v26.4zM1519.4 227.7v-27.9h2.6v27.9zM1529.8 227.7v-47.8h2.6v47.8zM1537.6 227.7v-25.0h2.6v25.0zM1540.2 227.7v-37.9h2.6v37.9zM1553.2 227.7v-29.0h2.6v29.0zM1553.2 227.7v28.3h2.6v-28.3zM1558.4 227.7v-27.7h2.6v27.7zM1561.0 227.7v-25.3h2.6v25.3zM1561.0 227.7v27.3h2.6v-27.3zM1600.0 227.7v-24.7h2.6v24.7zM1618.2 227.7v23.9h2.6v-23.9zM1623.4 227.7v-25.5h2.6v25.5zM1628.6 227.7v-23.9h2.6v23.9zM1659.8 227.7v-16.8h2.6v16.8zM1670.2 227.7v-29.9h2.6v29.9zM1727.4 227.7v-29.1h2.6v29.1zM1730.0 227.7v-24.5h2.6v24.5zM1743.0 227.7v-23.8h2.6v23.8zM1745.6 227.7v-16.3h2.6v16.3zM1748.2 227.7v-17.6h2.6v17.6zM1769.0 227.7v-21.7h2.6v21.7zM1810.6 227.7v28.1h2.6v-28.1zM1813.2 227.7v22.2h2.6v-22.2zM1818.4 227.7v-22.4h2.6v22.4zM1821.0 227.7v-19.9h2.6v19.9zM1828.8 227.7v-23.3h2.6v23.3zM1834.0 227.7v-23.8h2.6v23.8zM1836.6 227.7v24.6h2.6v-24.6zM1854.8 227.7v-26.8h2.6v26.8zM1860.0 227.7v24.6h2.6v-24.6zM1867.8 227.7v-20.9h2.6v20.9zM1873.0 227.7v-32.4h2.6v32.4zM1875.6 227.7v-22.1h2.6v22.1zM1878.2 227.7v-22.2h2.6v22.2zM1891.2 227.7v-26.7h2.6v26.7zM1938.0 227.7v-29.8h2.6v29.8zM1943.2 227.7v-27.0h2.6v27.0zM1951.0 227.7v-22.4h2.6v22.4zM1966.6 227.7v-24.6h2.6v24.6zM1974.4 227.7v-16.8h2.6v16.8zM1990.0 227.7v-25.3h2.6v25.3zM2010.8 227.7v-22.8h2.6v22.8zM2026.4 227.7v-38.8h2.6v38.8zM2055.0 227.7v30.2h2.6v-30.2zM2057.6 227.7v-34.3h2.6v34.3zM2065.4 227.7v28.4h2.6v-28.4zM2068.0 227.7v29.6h2.6v-29.6zM2070.6 227.7v28.6h2.6v-28.6zM2081.0 227.7v-41.5h2.6v41.5zM2083.6 227.7v-20.8h2.6v20.8zM2146.0 227.7v-20.2h2.6v20.2zM2179.8 227.7v-24.2h2.6v24.2zM2182.4 227.7v-26.1h2.6v26.1zM2286.4 227.7v21.4h2.6v-21.4zM2289.0 227.7v-28.7h2.6v28.7zM2299.4 227.7v-24.0h2.6v24.0zM2315.0 227.7v25.2h2.6v-25.2zM2320.2 227.7v-24.6h2.6v24.6zM2333.2 227.7v-27.9h2.6v27.9zM2341.0 227.7v-26.7h2.6v26.7zM2359.2 227.7v-22.3h2.6v22.3zM2361.8 227.7v-24.7h2.6v24.7zM2364.4 227.7v-15.2h2.6v15.2zM2369.6 227.7v-24.3h2.6v24.3zM2385.2 227.7v15.9h2.6v-15.9zM2400.8 227.7v25.8h2.6v-25.8zM2403.4 227.7v-36.7h2.6v36.7zM2408.6 227.7v17.0h2.6v-17.0zM2445.0 227.7v33.6h2.6v-33.6zM2447.6 227.7v17.2h2.6v-17.2zM2450.2 227.7v19.4h2.6v-19.4zM2455.4 227.7v24.9h2.6v-24.9zM2473.6 227.7v19.4h2.6v-19.4zM2642.6 227.7v-48.6h2.6v48.6zM2645.2 227.7v-48.6h2.6v48.6zM2676.4 227.7v-22.7h2.6v22.7zM2757.0 227.7v-36.3h2.6v36.3z"/>
<path fill="#f37330" d="M479.4 227.7v26.8h2.6v-26.8zM484.6 227.7v26.9h2.6v-26.9zM497.6 227.7v27.8h2.6v-27.8zM640.6 227.7v23.9h2.6v-23.9zM643.2 227.7v31.3h2.6v-31.3zM726.4 227.7v26.4h2.6v-26.4zM1680.6 227.7v23.8h2.6v-23.8zM1706.6 227.7v17.9h2.6v-17.9zM1717.0 227.7v48.6h2.6v-48.6zM1719.6 227.7v48.6h2.6v-48.6zM2242.2 227.7v16.1h2.6v-16.1zM2533.4 227.7v35.0h2.6v-35.0zM2614.0 227.7v18.3h2.6v-18.3zM2650.4 227.7v-12.4h2.6v12.4zM2686.8 227.7v9.9h2.6v-9.9zM2759.6 227.7v-26.6h2.6v26.6zM2845.4 227.7v-21.7h2.6v21.7zM2850.6 227.7v20.4h2.6v-20.4zM2855.8 227.7v-34.2h2.6v34.2z"/>
<path fill="#d54923" d="M489.8 227.7v31.7h2.6v-31.7zM495.0 227.7v26.2h2.6v-26.2zM2658.2 227.7v-13.9h2.6v13.9zM2660.8 227.7v-6.9h2.6v6.9zM2668.6 227.7v-5.1h2.6v5.1zM2681.6 227.7v13.8h2.6v-13.8zM2684.2 227.7v17.1h2.6v-17.1zM2689.4 227.7v13.3h2.6v-13.3zM2707.6 227.7v-13.2h2.6v13.2zM2772.6 227.7v-3.2h2.6v3.2zM2775.2 227.7v4.4h2.6v-4.4zM2785.6 227.7v11.6h2.6v-11.6zM2796.0 227.7v7.6h2.6v-7.6zM2811.6 227.7v-3.8h2.6v3.8zM2814.2 227.7v-3.1h2.6v3.1zM2837.6 227.7v5.9h2.6v-5.9zM2853.2 227.7v-3.3h2.6v3.3z"/>
<path fill="#4cf2a4" d="M497.6 227.7v-29.2h2.6v29.2zM510.6 227.7v-31.5h2.6v31.5zM521.0 227.7v-32.8h2.6v32.8zM523.6 227.7v-31.2h2.6v31.2zM531.4 227.7v-30.5h2.6v30.5zM541.8 227.7v-29.7h2.6v29.7zM544.4 227.7v-29.2h2.6v29.2zM544.4 227.7v30.8h2.6v-30.8zM554.8 227.7v28.0h2.6v-28.0zM560.0 227.7v-35.2h2.6v35.2zM570.4 227.7v-27.2h2.6v27.2zM573.0 227.7v24.9h2.6v-24.9zM575.6 227.7v38.2h2.6v-38.2zM588.6 227.7v19.4h2.6v-19.4zM593.8 227.7v29.2h2.6v-29.2zM599.0 227.7v-24.4h2.6v24.4zM601.6 227.7v-24.4h2.6v24.4zM625.0 227.7v-28.7h2.6v28.7zM640.6 227.7v-34.6h2.6v34.6zM645.8 227.7v-30.3h2.6v30.3zM653.6 227.7v-22.3h2.6v22.3zM656.2 227.7v-23.6h2.6v23.6zM664.0 227.7v-34.7h2.6v34.7zM664.0 227.7v23.2h2.6v-23.2zM666.6 227.7v-28.0h2.6v28.0zM666.6 227.7v28.0h2.6v-28.0zM690.0 227.7v-29.1h2.6v29.1zM703.0 227.7v-27.8h2.6v27.8zM729.0 227.7v-31.9h2.6v31.9zM734.2 227.7v-26.6h2.6v26.6zM747.2 227.7v19.6h2.6v-19.6zM760.2 227.7v-26.2h2.6v26.2zM770.6 227.7v-25.3h2.6v25.3zM791.4 227.7v-24.4h2.6v24.4zM796.6 227.7v24.7h2.6v-24.7zM820.0 227.7v27.0h2.6v-27.0zM822.6 227.7v-23.1h2.6v23.1zM892.8 227.7v12.1h2.6v-12.1zM898.0 227.7v23.4h2.6v-23.4zM905.8 227.7v21.2h2.6v-21.2zM908.4 227.7v-17.0h2.6v17.0zM908.4 227.7v28.8h2.6v-28.8zM911.0 227.7v-29.4h2.6v29.4zM911.0 227.7v22.9h2.6v-22.9zM913.6 227.7v-19.6h2.6v19.6zM921.4 227.7v-14.6h2.6v14.6zM921.4 227.7v23.5h2.6v-23.5zM924.0 227.7v24.5h2.6v-24.5zM934.4 227.7v28.5h2.6v-28.5zM957.8 227.7v-24.4h2.6v24.4zM996.8 227.7v-31.5h2.6v31.5zM1046.2 227.7v-34.1h2.6v34.1zM1051.4 227.7v-20.1h2.6v20.1zM1059.2 227.7v18.5h2.6v-18.5zM1108.6 227.7v-24.1h2.6v24.1zM1301.0 227.7v-34.7h2.6v34.7zM1327.0 227.7v19.1h2.6v-19.1zM1329.6 227.7v-18.5h2.6v18.5zM1334.8 227.7v-24.4h2.6v24.4zM1470.0 227.7v-34.5h2.6v34.5zM1475.2 227.7v-38.2h2.6v38.2zM1485.6 227.7v-29.4h2.6v29.4zM1490.8 227.7v-29.1h2.6v29.1zM1511.6 227.7v-32.7h2.6v32.7zM1516.8 227.7v-31.8h2.6v31.8zM1522.0 227.7v-26.2h2.6v26.2zM1535.0 227.7v-25.3h2.6v25.3zM1545.4 227.7v-31.9h2.6v31.9zM1545.4 227.7v25.7h2.6v-25.7zM1558.4 227.7v31.5h2.6v-31.5zM1566.2 227.7v-24.5h2.6v24.5zM1566.2 227.7v27.8h2.6v-27.8zM1568.8 227.7v-26.9h2.6v26.9zM1576.6 227.7v31.4h2.6v-31.4zM1579.2 227.7v26.0h2.6v-26.0zM1581.8 227.7v24.1h2.6v-24.1zM1587.0 227.7v23.4h2.6v-23.4zM1589.6 227.7v-32.0h2.6v32.0zM1597.4 227.7v-30.9h2.6v30.9zM1602.6 227.7v-22.9h2.6v22.9zM1615.6 227.7v-33.0h2.6v33.0zM1618.2 227.7v-19.1h2.6v19.1zM1620.8 227.7v-23.2h2.6v23.2zM1636.4 227.7v-26.9h2.6v26.9zM1639.0 227.7v-25.9h2.6v25.9zM1654.6 227.7v-17.8h2.6v17.8zM1662.4 227.7v-21.0h2.6v21.0zM1672.8 227.7v-26.8h2.6v26.8zM1685.8 227.7v-21.7h2.6v21.7zM1724.8 227.7v-27.0h2.6v27.0zM1766.4 227.7v-23.5h2.6v23.5zM1779.4 227.7v-20.4h2.6v20.4zM1782.0 227.7v-12.7h2.6v12.7zM1800.2 227.7v-34.5h2.6v34.5zM1808.0 227.7v-18.4h2.6v18.4zM1813.2 227.7v-17.9h2.6v17.9zM1826.2 227.7v-29.2h2.6v29.2zM1839.2 227.7v-21.9h2.6v21.9zM1844.4 227.7v-22.4h2.6v22.4zM1857.4 227.7v-30.5h2.6v30.5zM1870.4 227.7v-28.4h2.6v28.4zM1896.4 227.7v-27.8h2.6v27.8zM1912.0 227.7v-27.1h2.6v27.1zM1930.2 227.7v-21.6h2.6v21.6zM1961.4 227.7v-33.3h2.6v33.3zM1977.0 227.7v-29.6h2.6v29.6zM1982.2 227.7v-25.7h2.6v25.7zM1984.8 227.7v-30.1h2.6v30.1zM1987.4 227.7v-30.4h2.6v30.4zM2013.4 227.7v-22.4h2.6v22.4zM2021.2 227.7v-26.3h2.6v26.3zM2031.6 227.7v-23.1h2.6v23.1zM2036.8 227.7v-21.1h2.6v21.1zM2042.0 227.7v-27.7h2.6v27.7zM2052.4 227.7v-41.1h2.6v41.1zM2055.0 227.7v-40.5h2.6v40.5zM2057.6 227.7v33.6h2.6v-33.6zM2060.2 227.7v-24.5h2.6v24.5zM2060.2 227.7v34.9h2.6v-34.9zM2062.8 227.7v-34.3h2.6v34.3zM2062.8 227.7v33.3h2.6v-33.3zM2073.2 227.7v25.8h2.6v-25.8zM2075.8 227.7v-43.1h2.6v43.1zM2088.8 227.7v-30.5h2.6v30.5zM2120.0 227.7v-18.4h2.6v18.4zM2172.0 227.7v-22.5h2.6v22.5zM2208.4 227.7v-26.6h2.6v26.6zM2213.6 227.7v-21.1h2.6v21.1zM2237.0 227.7v-27.6h2.6v27.6zM2244.8 227.7v-23.3h2.6v23.3zM2289.0 227.7v16.6h2.6v-16.6zM2296.8 227.7v28.4h2.6v-28.4zM2304.6 227.7v37.1h2.6v-37.1zM2312.4 227.7v-29.5h2.6v29.5zM2315.0 227.7v-25.3h2.6v25.3zM2317.6 227.7v-33.9h2.6v33.9zM2330.6 227.7v-30.4h2.6v30.4zM2335.8 227.7v31.6h2.6v-31.6zM2346.2 227.7v-26.2h2.6v26.2zM2348.8 227.7v-24.0h2.6v24.0zM2356.6 227.7v25.8h2.6v-25.8zM2361.8 227.7v22.0h2.6v-22.0zM2364.4 227.7v21.5h2.6v-21.5zM2367.0 227.7v-25.1h2.6v25.1zM2374.8 227.7v-27.7h2.6v27.7zM2403.4 227.7v23.8h2.6v-23.8zM2406.0 227.7v26.7h2.6v-26.7zM2411.2 227.7v-20.3h2.6v20.3zM2411.2 227.7v26.6h2.6v-26.6zM2413.8 227.7v16.6h2.6v-16.6zM2421.6 227.7v-18.7h2.6v18.7zM2437.2 227.7v-37.3h2.6v37.3zM2452.8 227.7v21.7h2.6v-21.7zM2481.4 227.7v25.7h2.6v-25.7zM2491.8 227.7v18.9h2.6v-18.9zM2551.6 227.7v-17.3h2.6v17.3zM2567.2 227.7v-18.8h2.6v18.8z"/>
<path fill="#8dfc6c" d="M500.2 227.7v-29.0h2.6v29.0zM547.0 227.7v27.1h2.6v-27.1zM552.2 227.7v26.2h2.6v-26.2zM578.2 227.7v22.3h2.6v-22.3zM596.4 227.7v24.8h2.6v-24.8zM606.8 227.7v25.7h2.6v-25.7zM617.2 227.7v-28.7h2.6v28.7zM619.8 227.7v-25.0h2.6v25.0zM622.4 227.7v-28.4h2.6v28.4zM622.4 227.7v34.5h2.6v-34.5zM661.4 227.7v26.3h2.6v-26.3zM744.6 227.7v24.7h2.6v-24.7zM749.8 227.7v22.1h2.6v-22.1zM765.4 227.7v-29.5h2.6v29.5zM768.0 227.7v-24.8h2.6v24.8zM773.2 227.7v-25.9h2.6v25.9zM775.8 227.7v-22.0h2.6v22.0zM778.4 227.7v-16.6h2.6v16.6zM807.0 227.7v-21.4h2.6v21.4zM817.4 227.7v-16.6h2.6v16.6zM817.4 227.7v24.6h2.6v-24.6zM825.2 227.7v-19.9h2.6v19.9zM835.6 227.7v-24.0h2.6v24.0zM838.2 227.7v-23.9h2.6v23.9zM846.0 227.7v23.2h2.6v-23.2zM856.4 227.7v22.6h2.6v-22.6zM864.2 227.7v-29.5h2.6v29.5zM864.2 227.7v28.5h2.6v-28.5zM874.6 227.7v-23.0h2.6v23.0zM879.8 227.7v-17.9h2.6v17.9zM887.6 227.7v-20.7h2.6v20.7zM887.6 227.7v21.9h2.6v-21.9zM895.4 227.7v-10.7h2.6v10.7zM898.0 227.7v-25.8h2.6v25.8zM900.6 227.7v-23.1h2.6v23.1zM1087.8 227.7v15.1h2.6v-15.1zM1103.4 227.7v-29.2h2.6v29.2zM1134.6 227.7v-24.8h2.6v24.8zM1150.2 227.7v-17.1h2.6v17.1zM1155.4 227.7v-21.4h2.6v21.4zM1163.2 227.7v13.3h2.6v-13.3zM1168.4 227.7v21.7h2.6v-21.7zM1171.0 227.7v-27.6h2.6v27.6zM1171.0 227.7v20.5h2.6v-20.5zM1176.2 227.7v-19.6h2.6v19.6zM1181.4 227.7v-21.4h2.6v21.4zM1184.0 227.7v-20.7h2.6v20.7zM1186.6 227.7v22.4h2.6v-22.4zM1197.0 227.7v-23.4h2.6v23.4zM1212.6 227.7v-26.3h2.6v26.3zM1233.4 227.7v-22.3h2.6v22.3zM1236.0 227.7v-18.7h2.6v18.7zM1238.6 227.7v-22.0h2.6v22.0zM1241.2 227.7v-16.0h2.6v16.0zM1256.8 227.7v-20.9h2.6v20.9zM1264.6 227.7v-21.5h2.6v21.5zM1298.4 227.7v-20.2h2.6v20.2zM1301.0 227.7v11.3h2.6v-11.3zM1311.4 227.7v24.8h2.6v-24.8zM1314.0 227.7v24.0h2.6v-24.0zM1321.8 227.7v-19.1h2.6v19.1zM1324.4 227.7v17.3h2.6v-17.3zM1329.6 227.7v28.1h2.6v-28.1zM1527.2 227.7v-34.0h2.6v34.0zM1548.0 227.7v27.3h2.6v-27.3zM1571.4 227.7v-27.5h2.6v27.5zM1574.0 227.7v-30.6h2.6v30.6zM1576.6 227.7v-22.4h2.6v22.4zM1579.2 227.7v-25.6h2.6v25.6zM1581.8 227.7v-27.2h2.6v27.2zM1594.8 227.7v-29.0h2.6v29.0zM1623.4 227.7v38.3h2.6v-38.3zM1646.8 227.7v-20.2h2.6v20.2zM1665.0 227.7v21.6h2.6v-21.6zM1688.4 227.7v-19.3h2.6v19.3zM1698.8 227.7v-22.9h2.6v22.9zM1709.2 227.7v-26.0h2.6v26.0zM1711.8 227.7v-24.6h2.6v24.6zM1722.2 227.7v-21.5h2.6v21.5zM1735.2 227.7v-20.4h2.6v20.4zM1737.8 227.7v-26.9h2.6v26.9zM1750.8 227.7v-19.8h2.6v19.8zM1776.8 227.7v-23.2h2.6v23.2zM1808.0 227.7v27.0h2.6v-27.0zM1810.6 227.7v-25.8h2.6v25.8zM1815.8 227.7v21.6h2.6v-21.6zM1836.6 227.7v-32.5h2.6v32.5zM1860.0 227.7v-28.4h2.6v28.4zM1888.6 227.7v-25.5h2.6v25.5zM1893.8 227.7v-26.8h2.6v26.8zM1919.8 227.7v-25.8h2.6v25.8zM2005.6 227.7v-19.4h2.6v19.4zM2016.0 227.7v-28.8h2.6v28.8zM2029.0 227.7v-27.0h2.6v27.0zM2034.2 227.7v-24.9h2.6v24.9zM2073.2 227.7v-30.7h2.6v30.7zM2107.0 227.7v-20.1h2.6v20.1zM2117.4 227.7v-25.5h2.6v25.5zM2125.2 227.7v-27.9h2.6v27.9zM2133.0 227.7v-30.8h2.6v30.8zM2140.8 227.7v-28.9h2.6v28.9zM2148.6 227.7v-23.8h2.6v23.8zM2153.8 227.7v-29.5h2.6v29.5zM2156.4 227.7v-17.0h2.6v17.0zM2192.8 227.7v-19.8h2.6v19.8zM2198.0 227.7v-16.8h2.6v16.8zM2205.8 227.7v-26.0h2.6v26.0zM2218.8 227.7v-23.9h2.6v23.9zM2239.6 227.7v-25.9h2.6v25.9zM2273.4 227.7v-20.0h2.6v20.0zM2278.6 227.7v-23.7h2.6v23.7zM2278.6 227.7v22.3h2.6v-22.3zM2281.2 227.7v-29.4h2.6v29.4zM2283.8 227.7v23.3h2.6v-23.3zM2317.6 227.7v18.3h2.6v-18.3zM2325.4 227.7v-24.7h2.6v24.7zM2330.6 227.7v17.5h2.6v-17.5zM2333.2 227.7v24.9h2.6v-24.9zM2343.6 227.7v-24.5h2.6v24.5zM2351.4 227.7v-25.9h2.6v25.9zM2351.4 227.7v26.8h2.6v-26.8zM2356.6 227.7v-28.7h2.6v28.7zM2359.2 227.7v20.4h2.6v-20.4zM2393.0 227.7v-24.0h2.6v24.0zM2400.8 227.7v-10.8h2.6v10.8zM2413.8 227.7v-26.7h2.6v26.7zM2445.0 227.7v-24.4h2.6v24.4zM2450.2 227.7v-30.4h2.6v30.4zM2452.8 227.7v-21.8h2.6v21.8zM2486.6 227.7v-17.1h2.6v17.1zM2491.8 227.7v-25.3h2.6v25.3zM2502.2 227.7v-19.2h2.6v19.2zM2528.2 227.7v-13.6h2.6v13.6zM2546.4 227.7v-12.2h2.6v12.2zM2588.0 227.7v-13.9h2.6v13.9zM2590.6 227.7v-13.9h2.6v13.9zM2601.0 227.7v-11.6h2.6v11.6zM2614.0 227.7v-17.3h2.6v17.3zM2900.0 227.7v-37.5h2.6v37.5z"/>
<path fill="#5893f4" d="M508.0 227.7v-48.6h2.6v48.6zM669.2 227.7v-41.0h2.6v41.0zM695.2 227.7v-28.8h2.6v28.8zM947.4 227.7v-32.4h2.6v32.4zM970.8 227.7v-38.8h2.6v38.8zM1007.2 227.7v23.8h2.6v-23.8zM1009.8 227.7v25.6h2.6v-25.6zM1012.4 227.7v-27.9h2.6v27.9zM1012.4 227.7v29.3h2.6v-29.3zM1015.0 227.7v35.9h2.6v-35.9zM1017.6 227.7v34.5h2.6v-34.5zM1030.6 227.7v-34.0h2.6v34.0zM1030.6 227.7v28.5h2.6v-28.5zM1033.2 227.7v23.0h2.6v-23.0zM1043.6 227.7v27.3h2.6v-27.3zM1046.2 227.7v36.3h2.6v-36.3zM1080.0 227.7v-35.5h2.6v35.5zM1371.2 227.7v31.7h2.6v-31.7zM1373.8 227.7v31.0h2.6v-31.0zM1384.2 227.7v25.4h2.6v-25.4zM1397.2 227.7v28.3h2.6v-28.3zM1399.8 227.7v26.0h2.6v-26.0zM1402.4 227.7v34.2h2.6v-34.2zM1405.0 227.7v32.1h2.6v-32.1zM1407.6 227.7v30.6h2.6v-30.6zM1420.6 227.7v-29.9h2.6v29.9zM1420.6 227.7v30.4h2.6v-30.4zM1423.2 227.7v42.2h2.6v-42.2zM1425.8 227.7v28.1h2.6v-28.1zM1428.4 227.7v23.8h2.6v-23.8zM1433.6 227.7v34.2h2.6v-34.2zM1438.8 227.7v29.1h2.6v-29.1zM1444.0 227.7v33.0h2.6v-33.0zM1446.6 227.7v32.5h2.6v-32.5zM1449.2 227.7v26.4h2.6v-26.4zM1451.8 227.7v31.1h2.6v-31.1zM1454.4 227.7v27.4h2.6v-27.4zM1457.0 227.7v35.7h2.6v-35.7zM1483.0 227.7v29.8h2.6v-29.8zM1485.6 227.7v32.3h2.6v-32.3zM1493.4 227.7v29.2h2.6v-29.2zM1503.8 227.7v-48.6h2.6v48.6zM1511.6 227.7v32.3h2.6v-32.3zM1514.2 227.7v26.1h2.6v-26.1zM1527.2 227.7v35.0h2.6v-35.0zM1529.8 227.7v36.5h2.6v-36.5zM1532.4 227.7v35.6h2.6v-35.6zM1592.2 227.7v25.8h2.6v-25.8zM1865.2 227.7v-31.6h2.6v31.6zM1909.4 227.7v30.7h2.6v-30.7zM1927.6 227.7v-48.6h2.6v48.6zM1930.2 227.7v23.4h2.6v-23.4zM1932.8 227.7v-31.5h2.6v31.5zM1948.4 227.7v26.3h2.6v-26.3zM1951.0 227.7v23.8h2.6v-23.8zM1953.6 227.7v30.0h2.6v-30.0zM1956.2 227.7v26.7h2.6v-26.7zM1958.8 227.7v19.0h2.6v-19.0zM1961.4 227.7v34.1h2.6v-34.1zM1964.0 227.7v28.1h2.6v-28.1zM1969.2 227.7v23.7h2.6v-23.7zM1971.8 227.7v31.2h2.6v-31.2zM1974.4 227.7v26.2h2.6v-26.2zM1987.4 227.7v32.2h2.6v-32.2zM2003.0 227.7v31.3h2.6v-31.3zM2008.2 227.7v29.3h2.6v-29.3zM2010.8 227.7v25.6h2.6v-25.6zM2013.4 227.7v21.4h2.6v-21.4zM2021.2 227.7v28.7h2.6v-28.7zM2026.4 227.7v29.3h2.6v-29.3zM2029.0 227.7v25.4h2.6v-25.4zM2036.8 227.7v22.6h2.6v-22.6zM2039.4 227.7v34.6h2.6v-34.6zM2042.0 227.7v26.9h2.6v-26.9zM2044.6 227.7v23.0h2.6v-23.0zM2369.6 227.7v25.5h2.6v-25.5zM2437.2 227.7v22.7h2.6v-22.7zM2512.6 227.7v-48.6h2.6v48.6z"/>
<path fill="#7a0402" d="M508.0 227.7v48.6h2.6v-48.6zM609.4 227.7v48.6h2.6v-48.6zM612.0 227.7v48.6h2.6v-48.6zM614.6 227.7v48.6h2.6v-48.6zM635.4 227.7v48.6h2.6v-48.6zM705.6 227.7v48.6h2.6v-48.6zM718.6 227.7v48.6h2.6v-48.6zM721.2 227.7v48.6h2.6v-48.6zM739.4 227.7v48.6h2.6v-48.6zM931.8 227.7v48.6h2.6v-48.6zM1056.6 227.7v48.6h2.6v-48.6zM1085.2 227.7v34.0h2.6v-34.0zM1308.8 227.7v48.6h2.6v-48.6zM1524.6 227.7v48.6h2.6v-48.6zM1607.8 227.7v42.0h2.6v-42.0zM1610.4 227.7v42.0h2.6v-42.0zM1613.0 227.7v42.0h2.6v-42.0zM1633.8 227.7v48.6h2.6v-48.6zM1789.8 227.7v48.6h2.6v-48.6zM1802.8 227.7v48.6h2.6v-48.6zM1805.4 227.7v48.6h2.6v-48.6zM2047.2 227.7v48.6h2.6v-48.6zM2049.8 227.7v48.6h2.6v-48.6zM2203.2 227.7v48.6h2.6v-48.6zM2265.6 227.7v48.6h2.6v-48.6zM2268.2 227.7v48.6h2.6v-48.6zM2387.8 227.7v48.6h2.6v-48.6zM2512.6 227.7v48.6h2.6v-48.6zM2629.6 227.7v48.6h2.6v-48.6zM2642.6 227.7v48.6h2.6v-48.6zM2645.2 227.7v48.6h2.6v-48.6zM2653.0 227.7v10.5h2.6v-10.5zM2655.6 227.7v22.5h2.6v-22.5zM2658.2 227.7v9.8h2.6v-9.8zM2660.8 227.7v7.6h2.6v-7.6zM2663.4 227.7v11.0h2.6v-11.0zM2666.0 227.7v-2.8h2.6v2.8zM2666.0 227.7v5.0h2.6v-5.0zM2668.6 227.7v16.9h2.6v-16.9zM2671.2 227.7v5.5h2.6v-5.5zM2673.8 227.7v48.6h2.6v-48.6zM2679.0 227.7v-6.4h2.6v6.4zM2686.8 227.7v-12.6h2.6v12.6zM2689.4 227.7v-4.4h2.6v4.4zM2692.0 227.7v-10.5h2.6v10.5zM2694.6 227.7v-10.7h2.6v10.7zM2694.6 227.7v11.2h2.6v-11.2zM2697.2 227.7v48.6h2.6v-48.6zM2699.8 227.7v48.6h2.6v-48.6zM2705.0 227.7v9.1h2.6v-9.1zM2707.6 227.7v17.6h2.6v-17.6zM2710.2 227.7v21.8h2.6v-21.8zM2712.8 227.7v-14.9h2.6v14.9zM2715.4 227.7v-11.9h2.6v11.9zM2718.0 227.7v-3.7h2.6v3.7zM2718.0 227.7v6.4h2.6v-6.4zM2720.6 227.7v-16.9h2.6v16.9zM2720.6 227.7v12.0h2.6v-12.0zM2723.2 227.7v-13.0h2.6v13.0zM2723.2 227.7v18.6h2.6v-18.6zM2725.8 227.7v-3.6h2.6v3.6zM2725.8 227.7v17.6h2.6v-17.6zM2728.4 227.7v4.9h2.6v-4.9zM2731.0 227.7v13.8h2.6v-13.8zM2733.6 227.7v-4.6h2.6v4.6zM2736.2 227.7v-6.0h2.6v6.0zM2738.8 227.7v48.6h2.6v-48.6zM2741.4 227.7v48.6h2.6v-48.6zM2744.0 227.7v48.6h2.6v-48.6zM2746.6 227.7v26.9h2.6v-26.9zM2749.2 227.7v-10.0h2.6v10.0zM2749.2 227.7v6.8h2.6v-6.8zM2751.8 227.7v-9.3h2.6v9.3zM2751.8 227.7v18.2h2.6v-18.2zM2754.4 227.7v-10.4h2.6v10.4zM2754.4 227.7v9.3h2.6v-9.3zM2757.0 227.7v7.1h2.6v-7.1zM2759.6 227.7v21.8h2.6v-21.8zM2762.2 227.7v14.9h2.6v-14.9zM2767.4 227.7v48.6h2.6v-48.6zM2770.0 227.7v48.6h2.6v-48.6zM2772.6 227.7v18.6h2.6v-18.6zM2775.2 227.7v-10.2h2.6v10.2zM2780.4 227.7v-7.0h2.6v7.0zM2783.0 227.7v48.6h2.6v-48.6zM2785.6 227.7v-5.4h2.6v5.4zM2788.2 227.7v-8.4h2.6v8.4zM2790.8 227.7v-4.6h2.6v4.6zM2793.4 227.7v-10.9h2.6v10.9zM2796.0 227.7v-10.1h2.6v10.1zM2798.6 227.7v-7.5h2.6v7.5zM2798.6 227.7v12.7h2.6v-12.7zM2801.2 227.7v-9.8h2.6v9.8zM2801.2 227.7v12.4h2.6v-12.4zM2803.8 227.7v-4.4h2.6v4.4zM2803.8 227.7v25.0h2.6v-25.0zM2806.4 227.7v-6.3h2.6v6.3zM2806.4 227.7v4.9h2.6v-4.9zM2809.0 227.7v4.4h2.6v-4.4zM2814.2 227.7v6.0h2.6v-6.0zM2816.8 227.7v48.6h2.6v-48.6zM2819.4 227.7v24.6h2.6v-24.6zM2822.0 227.7v48.6h2.6v-48.6zM2824.6 227.7v48.6h2.6v-48.6zM2827.2 227.7v48.6h2.6v-48.6zM2829.8 227.7v-10.9h2.6v10.9zM2829.8 227.7v6.6h2.6v-6.6zM2832.4 227.7v-5.2h2.6v5.2zM2832.4 227.7v7.6h2.6v-7.6zM2835.0 227.7v-3.7h2.6v3.7zM2837.6 227.7v-12.3h2.6v12.3zM2840.2 227.7v-5.6h2.6v5.6zM2842.8 227.7v-12.4h2.6v12.4zM2845.4 227.7v26.4h2.6v-26.4zM2848.0 227.7v-7.5h2.6v7.5zM2855.8 227.7v20.0h2.6v-20.0zM2858.4 227.7v-5.9h2.6v5.9zM2858.4 227.7v20.8h2.6v-20.8zM2861.0 227.7v-9.2h2.6v9.2zM2863.6 227.7v48.6h2.6v-48.6zM2866.2 227.7v-11.1h2.6v11.1zM2868.8 227.7v-5.9h2.6v5.9zM2871.4 227.7v-9.2h2.6v9.2zM2874.0 227.7v-5.9h2.6v5.9zM2876.6 227.7v-6.7h2.6v6.7zM2879.2 227.7v-4.6h2.6v4.6zM2879.2 227.7v14.2h2.6v-14.2zM2881.8 227.7v-7.5h2.6v7.5zM2884.4 227.7v10.2h2.6v-10.2zM2887.0 227.7v-8.3h2.6v8.3zM2887.0 227.7v8.5h2.6v-8.5zM2889.6 227.7v14.2h2.6v-14.2zM2892.2 227.7v-7.0h2.6v7.0zM2892.2 227.7v18.3h2.6v-18.3zM2894.8 227.7v-13.8h2.6v13.8zM2897.4 227.7v6.7h2.6v-6.7zM2902.6 227.7v-3.9h2.6v3.9zM2902.6 227.7v13.8h2.6v-13.8z"/>
<path fill="#f8c04e" d="M510.6 227.7v31.5h2.6v-31.5zM513.2 227.7v29.1h2.6v-29.1zM515.8 227.7v39.8h2.6v-39.8zM531.4 227.7v29.6h2.6v-29.6zM534.0 227.7v29.4h2.6v-29.4zM632.8 227.7v30.1h2.6v-30.1zM648.4 227.7v28.3h2.6v-28.3zM653.6 227.7v26.2h2.6v-26.2zM734.2 227.7v35.7h2.6v-35.7zM791.4 227.7v33.7h2.6v-33.7zM1116.4 227.7v26.8h2.6v-26.8zM1145.0 227.7v19.2h2.6v-19.2zM1158.0 227.7v16.4h2.6v-16.4zM1197.0 227.7v20.9h2.6v-20.9zM1217.8 227.7v17.9h2.6v-17.9zM1230.8 227.7v22.3h2.6v-22.3zM1233.4 227.7v13.5h2.6v-13.5zM1236.0 227.7v12.7h2.6v-12.7zM1251.6 227.7v25.1h2.6v-25.1zM1256.8 227.7v11.6h2.6v-11.6zM1259.4 227.7v17.7h2.6v-17.7zM1269.8 227.7v19.4h2.6v-19.4zM1272.4 227.7v19.3h2.6v-19.3zM1285.4 227.7v15.7h2.6v-15.7zM1293.2 227.7v15.7h2.6v-15.7zM1295.8 227.7v14.0h2.6v-14.0zM1636.4 227.7v22.7h2.6v-22.7zM1646.8 227.7v27.3h2.6v-27.3zM1657.2 227.7v19.5h2.6v-19.5zM1678.0 227.7v17.5h2.6v-17.5zM1685.8 227.7v22.7h2.6v-22.7zM1711.8 227.7v18.5h2.6v-18.5zM1714.4 227.7v19.6h2.6v-19.6zM1722.2 227.7v18.7h2.6v-18.7zM1730.0 227.7v17.4h2.6v-17.4zM1776.8 227.7v22.6h2.6v-22.6zM1779.4 227.7v23.4h2.6v-23.4zM1782.0 227.7v15.6h2.6v-15.6zM2096.6 227.7v19.6h2.6v-19.6zM2099.2 227.7v28.0h2.6v-28.0zM2112.2 227.7v20.6h2.6v-20.6zM2114.8 227.7v27.6h2.6v-27.6zM2120.0 227.7v17.9h2.6v-17.9zM2153.8 227.7v19.7h2.6v-19.7zM2156.4 227.7v23.9h2.6v-23.9zM2174.6 227.7v24.1h2.6v-24.1zM2179.8 227.7v21.4h2.6v-21.4zM2182.4 227.7v21.7h2.6v-21.7zM2185.0 227.7v15.3h2.6v-15.3zM2218.8 227.7v18.8h2.6v-18.8zM2221.4 227.7v21.6h2.6v-21.6zM2226.6 227.7v19.6h2.6v-19.6zM2231.8 227.7v14.8h2.6v-14.8zM2234.4 227.7v16.0h2.6v-16.0zM2255.2 227.7v13.7h2.6v-13.7zM2260.4 227.7v18.9h2.6v-18.9zM2263.0 227.7v23.4h2.6v-23.4zM2458.0 227.7v-27.6h2.6v27.6zM2499.6 227.7v9.4h2.6v-9.4zM2504.8 227.7v12.9h2.6v-12.9zM2564.6 227.7v20.8h2.6v-20.8zM2580.2 227.7v9.2h2.6v-9.2zM2601.0 227.7v21.3h2.6v-21.3zM2606.2 227.7v-9.7h2.6v9.7zM2627.0 227.7v20.7h2.6v-20.7zM2637.4 227.7v16.6h2.6v-16.6zM2640.0 227.7v22.0h2.6v-22.0zM2647.8 227.7v-5.7h2.6v5.7z"/>
<path fill="#c6f24f" d="M518.4 227.7v25.4h2.6v-25.4zM536.6 227.7v30.0h2.6v-30.0zM565.2 227.7v-26.1h2.6v26.1zM625.0 227.7v23.4h2.6v-23.4zM627.6 227.7v27.4h2.6v-27.4zM656.2 227.7v36.9h2.6v-36.9zM708.2 227.7v24.9h2.6v-24.9zM713.4 227.7v22.7h2.6v-22.7zM736.8 227.7v28.7h2.6v-28.7zM752.4 227.7v30.0h2.6v-30.0zM760.2 227.7v33.7h2.6v-33.7zM762.8 227.7v20.3h2.6v-20.3zM765.4 227.7v24.5h2.6v-24.5zM778.4 227.7v28.1h2.6v-28.1zM781.0 227.7v-22.5h2.6v22.5zM781.0 227.7v25.1h2.6v-25.1zM783.6 227.7v25.4h2.6v-25.4zM786.2 227.7v-16.7h2.6v16.7zM786.2 227.7v30.3h2.6v-30.3zM807.0 227.7v14.9h2.6v-14.9zM812.2 227.7v23.0h2.6v-23.0zM827.8 227.7v12.4h2.6v-12.4zM833.0 227.7v-25.9h2.6v25.9zM835.6 227.7v21.4h2.6v-21.4zM851.2 227.7v21.9h2.6v-21.9zM866.8 227.7v-14.6h2.6v14.6zM869.4 227.7v-22.8h2.6v22.8zM872.0 227.7v24.7h2.6v-24.7zM877.2 227.7v-26.5h2.6v26.5zM895.4 227.7v22.5h2.6v-22.5zM913.6 227.7v21.7h2.6v-21.7zM1074.8 227.7v24.8h2.6v-24.8zM1080.0 227.7v18.7h2.6v-18.7zM1111.2 227.7v26.5h2.6v-26.5zM1121.6 227.7v11.3h2.6v-11.3zM1126.8 227.7v20.6h2.6v-20.6zM1129.4 227.7v13.1h2.6v-13.1zM1139.8 227.7v-20.6h2.6v20.6zM1145.0 227.7v-22.8h2.6v22.8zM1165.8 227.7v-23.3h2.6v23.3zM1168.4 227.7v-19.6h2.6v19.6zM1173.6 227.7v10.5h2.6v-10.5zM1184.0 227.7v10.7h2.6v-10.7zM1204.8 227.7v-25.5h2.6v25.5zM1223.0 227.7v-19.9h2.6v19.9zM1249.0 227.7v-21.2h2.6v21.2zM1259.4 227.7v-16.4h2.6v16.4zM1262.0 227.7v16.3h2.6v-16.3zM1264.6 227.7v14.5h2.6v-14.5zM1272.4 227.7v-14.9h2.6v14.9zM1275.0 227.7v-16.9h2.6v16.9zM1275.0 227.7v23.2h2.6v-23.2zM1285.4 227.7v-15.1h2.6v15.1zM1293.2 227.7v-19.9h2.6v19.9zM1306.2 227.7v-19.7h2.6v19.7zM1306.2 227.7v18.6h2.6v-18.6zM1311.4 227.7v-20.5h2.6v20.5zM1321.8 227.7v21.9h2.6v-21.9zM1607.8 227.7v-45.0h2.6v45.0zM1610.4 227.7v-45.0h2.6v45.0zM1613.0 227.7v-45.0h2.6v45.0zM1628.6 227.7v18.4h2.6v-18.4zM1667.6 227.7v21.5h2.6v-21.5zM1704.0 227.7v-23.2h2.6v23.2zM1732.6 227.7v-26.3h2.6v26.3zM1737.8 227.7v20.1h2.6v-20.1zM1740.4 227.7v18.4h2.6v-18.4zM1753.4 227.7v-15.4h2.6v15.4zM1758.6 227.7v-25.2h2.6v25.2zM1761.2 227.7v-21.1h2.6v21.1zM1784.6 227.7v16.9h2.6v-16.9zM1787.2 227.7v16.2h2.6v-16.2zM2081.0 227.7v21.9h2.6v-21.9zM2088.8 227.7v28.7h2.6v-28.7zM2114.8 227.7v-21.1h2.6v21.1zM2133.0 227.7v15.6h2.6v-15.6zM2161.6 227.7v21.2h2.6v-21.2zM2187.6 227.7v-18.9h2.6v18.9zM2205.8 227.7v29.9h2.6v-29.9zM2224.0 227.7v-28.4h2.6v28.4zM2234.4 227.7v-25.6h2.6v25.6zM2255.2 227.7v-23.7h2.6v23.7zM2257.8 227.7v-19.2h2.6v19.2zM2281.2 227.7v24.7h2.6v-24.7zM2325.4 227.7v25.4h2.6v-25.4zM2328.0 227.7v19.5h2.6v-19.5zM2419.0 227.7v-16.8h2.6v16.8zM2463.2 227.7v-20.0h2.6v20.0zM2465.8 227.7v-28.9h2.6v28.9zM2497.0 227.7v-27.1h2.6v27.1zM2497.0 227.7v23.9h2.6v-23.9zM2499.6 227.7v-23.2h2.6v23.2zM2515.2 227.7v-14.8h2.6v14.8zM2515.2 227.7v15.8h2.6v-15.8zM2517.8 227.7v-14.8h2.6v14.8zM2517.8 227.7v16.9h2.6v-16.9zM2536.0 227.7v15.7h2.6v-15.7zM2538.6 227.7v17.3h2.6v-17.3zM2541.2 227.7v18.7h2.6v-18.7zM2549.0 227.7v18.7h2.6v-18.7zM2551.6 227.7v19.4h2.6v-19.4zM2559.4 227.7v22.0h2.6v-22.0zM2569.8 227.7v14.0h2.6v-14.0zM2580.2 227.7v-15.4h2.6v15.4zM2595.8 227.7v25.2h2.6v-25.2zM2603.6 227.7v11.6h2.6v-11.6zM2621.8 227.7v-10.8h2.6v10.8zM2624.4 227.7v-13.2h2.6v13.2zM2640.0 227.7v-7.6h2.6v7.6zM2679.0 227.7v24.1h2.6v-24.1zM2733.6 227.7v25.2h2.6v-25.2zM2835.0 227.7v34.6h2.6v-34.6zM2871.4 227.7v25.6h2.6v-25.6z"/>
<path fill="#dce64d" d="M521.0 227.7v30.1h2.6v-30.1zM599.0 227.7v29.1h2.6v-29.1zM601.6 227.7v26.1h2.6v-26.1zM742.0 227.7v25.3h2.6v-25.3zM755.0 227.7v22.5h2.6v-22.5zM757.6 227.7v26.5h2.6v-26.5zM775.8 227.7v24.8h2.6v-24.8zM783.6 227.7v-20.5h2.6v20.5zM788.8 227.7v24.5h2.6v-24.5zM809.6 227.7v27.1h2.6v-27.1zM838.2 227.7v24.0h2.6v-24.0zM869.4 227.7v25.8h2.6v-25.8zM877.2 227.7v25.5h2.6v-25.5zM879.8 227.7v20.0h2.6v-20.0zM916.2 227.7v25.7h2.6v-25.7zM1090.4 227.7v20.4h2.6v-20.4zM1093.0 227.7v31.5h2.6v-31.5zM1103.4 227.7v19.4h2.6v-19.4zM1106.0 227.7v17.4h2.6v-17.4zM1119.0 227.7v20.4h2.6v-20.4zM1137.2 227.7v19.2h2.6v-19.2zM1139.8 227.7v19.7h2.6v-19.7zM1142.4 227.7v18.9h2.6v-18.9zM1147.6 227.7v20.6h2.6v-20.6zM1150.2 227.7v14.2h2.6v-14.2zM1160.6 227.7v14.0h2.6v-14.0zM1194.4 227.7v18.4h2.6v-18.4zM1199.6 227.7v-16.8h2.6v16.8zM1199.6 227.7v15.8h2.6v-15.8zM1202.2 227.7v14.6h2.6v-14.6zM1207.4 227.7v19.1h2.6v-19.1zM1210.0 227.7v-14.1h2.6v14.1zM1210.0 227.7v15.0h2.6v-15.0zM1217.8 227.7v-18.4h2.6v18.4zM1223.0 227.7v19.2h2.6v-19.2zM1228.2 227.7v-21.9h2.6v21.9zM1230.8 227.7v-28.5h2.6v28.5zM1243.8 227.7v-18.5h2.6v18.5zM1267.2 227.7v15.4h2.6v-15.4zM1277.6 227.7v16.5h2.6v-16.5zM1280.2 227.7v17.3h2.6v-17.3zM1288.0 227.7v-22.2h2.6v22.2zM1288.0 227.7v18.4h2.6v-18.4zM1298.4 227.7v21.4h2.6v-21.4zM1314.0 227.7v-21.4h2.6v21.4zM1649.4 227.7v22.9h2.6v-22.9zM1662.4 227.7v14.6h2.6v-14.6zM1670.2 227.7v18.8h2.6v-18.8zM1696.2 227.7v20.8h2.6v-20.8zM1698.8 227.7v11.8h2.6v-11.8zM1701.4 227.7v30.8h2.6v-30.8zM1743.0 227.7v18.4h2.6v-18.4zM1758.6 227.7v20.0h2.6v-20.0zM1761.2 227.7v20.8h2.6v-20.8zM1763.8 227.7v21.2h2.6v-21.2zM1766.4 227.7v13.1h2.6v-13.1zM1771.6 227.7v18.8h2.6v-18.8zM1901.6 227.7v-26.4h2.6v26.4zM1904.2 227.7v-23.1h2.6v23.1zM2083.6 227.7v18.9h2.6v-18.9zM2091.4 227.7v26.2h2.6v-26.2zM2094.0 227.7v20.9h2.6v-20.9zM2104.4 227.7v17.7h2.6v-17.7zM2122.6 227.7v20.5h2.6v-20.5zM2125.2 227.7v19.9h2.6v-19.9zM2140.8 227.7v18.0h2.6v-18.0zM2151.2 227.7v25.3h2.6v-25.3zM2200.6 227.7v25.9h2.6v-25.9zM2208.4 227.7v18.3h2.6v-18.3zM2211.0 227.7v19.6h2.6v-19.6zM2224.0 227.7v11.9h2.6v-11.9zM2229.2 227.7v-12.5h2.6v12.5zM2231.8 227.7v-17.8h2.6v17.8zM2260.4 227.7v-20.5h2.6v20.5zM2270.8 227.7v24.9h2.6v-24.9zM2276.0 227.7v13.3h2.6v-13.3zM2455.4 227.7v-16.3h2.6v16.3zM2471.0 227.7v-15.2h2.6v15.2zM2473.6 227.7v-21.4h2.6v21.4zM2494.4 227.7v13.3h2.6v-13.3zM2507.4 227.7v21.8h2.6v-21.8zM2510.0 227.7v-18.5h2.6v18.5zM2510.0 227.7v19.7h2.6v-19.7zM2523.0 227.7v22.2h2.6v-22.2zM2525.6 227.7v19.9h2.6v-19.9zM2562.0 227.7v18.5h2.6v-18.5zM2567.2 227.7v16.1h2.6v-16.1zM2585.4 227.7v-23.3h2.6v23.3zM2590.6 227.7v15.2h2.6v-15.2zM2608.8 227.7v-18.4h2.6v18.4zM2627.0 227.7v-11.0h2.6v11.0zM2632.2 227.7v-18.5h2.6v18.5zM2634.8 227.7v-17.0h2.6v17.0zM2884.4 227.7v-16.4h2.6v16.4z"/>
<path fill="#edd450" d="M523.6 227.7v41.6h2.6v-41.6zM526.2 227.7v32.5h2.6v-32.5zM630.2 227.7v26.3h2.6v-26.3zM651.0 227.7v29.5h2.6v-29.5zM710.8 227.7v30.9h2.6v-30.9zM716.0 227.7v29.1h2.6v-29.1zM723.8 227.7v28.9h2.6v-28.9zM731.6 227.7v28.2h2.6v-28.2zM768.0 227.7v19.1h2.6v-19.1zM773.2 227.7v25.8h2.6v-25.8zM874.6 227.7v21.3h2.6v-21.3zM1077.4 227.7v22.8h2.6v-22.8zM1095.6 227.7v31.7h2.6v-31.7zM1098.2 227.7v14.0h2.6v-14.0zM1100.8 227.7v15.9h2.6v-15.9zM1108.6 227.7v17.1h2.6v-17.1zM1113.8 227.7v18.7h2.6v-18.7zM1132.0 227.7v22.7h2.6v-22.7zM1134.6 227.7v19.4h2.6v-19.4zM1194.4 227.7v-18.7h2.6v18.7zM1202.2 227.7v-24.9h2.6v24.9zM1204.8 227.7v18.6h2.6v-18.6zM1207.4 227.7v-25.6h2.6v25.6zM1212.6 227.7v25.5h2.6v-25.5zM1215.2 227.7v23.7h2.6v-23.7zM1225.6 227.7v16.7h2.6v-16.7zM1228.2 227.7v26.0h2.6v-26.0zM1254.2 227.7v20.9h2.6v-20.9zM1277.6 227.7v-25.0h2.6v25.0zM1290.6 227.7v19.1h2.6v-19.1zM1652.0 227.7v25.6h2.6v-25.6zM1654.6 227.7v17.3h2.6v-17.3zM1659.8 227.7v19.1h2.6v-19.1zM1672.8 227.7v28.6h2.6v-28.6zM1693.6 227.7v23.3h2.6v-23.3zM1709.2 227.7v19.8h2.6v-19.8zM1724.8 227.7v18.5h2.6v-18.5zM1727.4 227.7v17.2h2.6v-17.2zM1745.6 227.7v21.4h2.6v-21.4zM1750.8 227.7v14.2h2.6v-14.2zM1769.0 227.7v23.0h2.6v-23.0zM1774.2 227.7v26.7h2.6v-26.7zM2086.2 227.7v26.2h2.6v-26.2zM2107.0 227.7v31.0h2.6v-31.0zM2117.4 227.7v22.3h2.6v-22.3zM2127.8 227.7v23.6h2.6v-23.6zM2138.2 227.7v20.6h2.6v-20.6zM2159.0 227.7v19.9h2.6v-19.9zM2166.8 227.7v19.4h2.6v-19.4zM2169.4 227.7v18.5h2.6v-18.5zM2172.0 227.7v27.2h2.6v-27.2zM2177.2 227.7v22.2h2.6v-22.2zM2213.6 227.7v18.8h2.6v-18.8zM2216.2 227.7v23.6h2.6v-23.6zM2226.6 227.7v-21.8h2.6v21.8zM2229.2 227.7v17.7h2.6v-17.7zM2239.6 227.7v19.1h2.6v-19.1zM2460.6 227.7v-24.0h2.6v24.0zM2476.2 227.7v-26.7h2.6v26.7zM2502.2 227.7v19.8h2.6v-19.8zM2507.4 227.7v-21.7h2.6v21.7zM2556.8 227.7v18.7h2.6v-18.7zM2572.4 227.7v21.0h2.6v-21.0zM2575.0 227.7v-17.5h2.6v17.5zM2575.0 227.7v24.1h2.6v-24.1zM2582.8 227.7v20.6h2.6v-20.6zM2585.4 227.7v13.1h2.6v-13.1zM2593.2 227.7v20.8h2.6v-20.8zM2598.4 227.7v12.5h2.6v-12.5zM2606.2 227.7v15.5h2.6v-15.5zM2608.8 227.7v10.3h2.6v-10.3zM2611.4 227.7v11.7h2.6v-11.7zM2632.2 227.7v15.2h2.6v-15.2zM2634.8 227.7v8.5h2.6v-8.5zM2637.4 227.7v-11.8h2.6v11.8z"/>
<path fill="#affc53" d="M528.8 227.7v29.9h2.6v-29.9zM549.6 227.7v32.9h2.6v-32.9zM567.8 227.7v-30.1h2.6v30.1zM604.2 227.7v25.0h2.6v-25.0zM658.8 227.7v20.2h2.6v-20.2zM718.6 227.7v-48.6h2.6v48.6zM721.2 227.7v-48.6h2.6v48.6zM788.8 227.7v-26.8h2.6v26.8zM794.0 227.7v22.6h2.6v-22.6zM799.2 227.7v24.8h2.6v-24.8zM820.0 227.7v-28.2h2.6v28.2zM822.6 227.7v24.7h2.6v-24.7zM830.4 227.7v-25.6h2.6v25.6zM840.8 227.7v22.2h2.6v-22.2zM843.4 227.7v17.4h2.6v-17.4zM848.6 227.7v21.0h2.6v-21.0zM853.8 227.7v19.7h2.6v-19.7zM861.6 227.7v21.2h2.6v-21.2zM866.8 227.7v27.3h2.6v-27.3zM872.0 227.7v-17.6h2.6v17.6zM882.4 227.7v19.0h2.6v-19.0zM905.8 227.7v-24.7h2.6v24.7zM918.8 227.7v21.1h2.6v-21.1zM1072.2 227.7v25.0h2.6v-25.0zM1082.6 227.7v24.2h2.6v-24.2zM1106.0 227.7v-20.9h2.6v20.9zM1124.2 227.7v16.0h2.6v-16.0zM1137.2 227.7v-26.9h2.6v26.9zM1142.4 227.7v-29.1h2.6v29.1zM1147.6 227.7v-29.5h2.6v29.5zM1158.0 227.7v-17.4h2.6v17.4zM1160.6 227.7v-17.7h2.6v17.7zM1163.2 227.7v-22.7h2.6v22.7zM1165.8 227.7v15.0h2.6v-15.0zM1176.2 227.7v25.0h2.6v-25.0zM1178.8 227.7v-25.8h2.6v25.8zM1178.8 227.7v20.1h2.6v-20.1zM1186.6 227.7v-21.2h2.6v21.2zM1189.2 227.7v16.0h2.6v-16.0zM1191.8 227.7v15.7h2.6v-15.7zM1215.2 227.7v-14.2h2.6v14.2zM1220.4 227.7v-18.3h2.6v18.3zM1220.4 227.7v14.3h2.6v-14.3zM1225.6 227.7v-19.7h2.6v19.7zM1246.4 227.7v-10.9h2.6v10.9zM1251.6 227.7v-21.4h2.6v21.4zM1269.8 227.7v-18.2h2.6v18.2zM1280.2 227.7v-23.1h2.6v23.1zM1282.8 227.7v-22.0h2.6v22.0zM1290.6 227.7v-18.0h2.6v18.0zM1303.6 227.7v-14.7h2.6v14.7zM1303.6 227.7v20.9h2.6v-20.9zM1316.6 227.7v-20.3h2.6v20.3zM1316.6 227.7v18.1h2.6v-18.1zM1319.2 227.7v20.9h2.6v-20.9zM1334.8 227.7v22.7h2.6v-22.7zM1337.4 227.7v24.0h2.6v-24.0zM1626.0 227.7v22.1h2.6v-22.1zM1631.2 227.7v24.0h2.6v-24.0zM1678.0 227.7v-19.4h2.6v19.4zM1701.4 227.7v-23.3h2.6v23.3zM1756.0 227.7v-23.1h2.6v23.1zM1792.4 227.7v15.1h2.6v-15.1zM1795.0 227.7v18.2h2.6v-18.2zM1797.6 227.7v19.0h2.6v-19.0zM1800.2 227.7v16.6h2.6v-16.6zM1849.6 227.7v-20.7h2.6v20.7zM1906.8 227.7v-24.3h2.6v24.3zM1917.2 227.7v-26.1h2.6v26.1zM2070.6 227.7v-21.5h2.6v21.5zM2078.4 227.7v-19.9h2.6v19.9zM2078.4 227.7v18.9h2.6v-18.9zM2099.2 227.7v-33.4h2.6v33.4zM2101.8 227.7v-30.0h2.6v30.0zM2104.4 227.7v-26.0h2.6v26.0zM2109.6 227.7v-21.4h2.6v21.4zM2109.6 227.7v22.1h2.6v-22.1zM2122.6 227.7v-23.2h2.6v23.2zM2130.4 227.7v21.0h2.6v-21.0zM2135.6 227.7v-21.1h2.6v21.1zM2135.6 227.7v20.8h2.6v-20.8zM2159.0 227.7v-23.3h2.6v23.3zM2161.6 227.7v-22.5h2.6v22.5zM2164.2 227.7v18.6h2.6v-18.6zM2190.2 227.7v-26.6h2.6v26.6zM2216.2 227.7v-21.2h2.6v21.2zM2221.4 227.7v-21.6h2.6v21.6zM2242.2 227.7v-21.5h2.6v21.5zM2320.2 227.7v17.3h2.6v-17.3zM2322.8 227.7v25.8h2.6v-25.8zM2354.0 227.7v20.1h2.6v-20.1zM2395.6 227.7v-22.4h2.6v22.4zM2416.4 227.7v-19.7h2.6v19.7zM2434.6 227.7v-20.5h2.6v20.5zM2439.8 227.7v-16.8h2.6v16.8zM2447.6 227.7v-23.5h2.6v23.5zM2481.4 227.7v-34.7h2.6v34.7zM2489.2 227.7v-27.0h2.6v27.0zM2494.4 227.7v-10.8h2.6v10.8zM2520.4 227.7v12.4h2.6v-12.4zM2538.6 227.7v-11.5h2.6v11.5zM2541.2 227.7v-14.4h2.6v14.4zM2546.4 227.7v18.6h2.6v-18.6zM2549.0 227.7v-16.3h2.6v16.3zM2554.2 227.7v18.2h2.6v-18.2zM2556.8 227.7v-22.1h2.6v22.1zM2572.4 227.7v-21.6h2.6v21.6zM2577.6 227.7v-12.0h2.6v12.0zM2588.0 227.7v15.6h2.6v-15.6zM2595.8 227.7v-16.6h2.6v16.6zM2611.4 227.7v-23.2h2.6v23.2zM2822.0 227.7v-48.6h2.6v48.6zM2824.6 227.7v-48.6h2.6v48.6zM2827.2 227.7v-48.6h2.6v48.6z"/>
<path fill="#52aafb" d="M547.0 227.7v-41.0h2.6v41.0zM552.2 227.7v-30.3h2.6v30.3zM580.8 227.7v-33.5h2.6v33.5zM632.8 227.7v-25.1h2.6v25.1zM671.8 227.7v-28.3h2.6v28.3zM684.8 227.7v26.0h2.6v-26.0zM687.4 227.7v-48.6h2.6v48.6zM687.4 227.7v25.5h2.6v-25.5zM690.0 227.7v29.6h2.6v-29.6zM692.6 227.7v25.8h2.6v-25.8zM695.2 227.7v24.9h2.6v-24.9zM697.8 227.7v28.0h2.6v-28.0zM705.6 227.7v-48.6h2.6v48.6zM924.0 227.7v-38.2h2.6v38.2zM950.0 227.7v22.6h2.6v-22.6zM952.6 227.7v-24.4h2.6v24.4zM952.6 227.7v27.5h2.6v-27.5zM957.8 227.7v35.6h2.6v-35.6zM976.0 227.7v-44.5h2.6v44.5zM991.6 227.7v-41.6h2.6v41.6zM1004.6 227.7v30.1h2.6v-30.1zM1007.2 227.7v-30.2h2.6v30.2zM1022.8 227.7v-32.0h2.6v32.0zM1025.4 227.7v34.2h2.6v-34.2zM1033.2 227.7v-28.4h2.6v28.4zM1048.8 227.7v28.5h2.6v-28.5zM1051.4 227.7v34.3h2.6v-34.3zM1067.0 227.7v-29.8h2.6v29.8zM1376.4 227.7v-32.0h2.6v32.0zM1379.0 227.7v-35.6h2.6v35.6zM1394.6 227.7v-32.5h2.6v32.5zM1407.6 227.7v-30.9h2.6v30.9zM1410.2 227.7v-32.5h2.6v32.5zM1410.2 227.7v26.5h2.6v-26.5zM1412.8 227.7v33.3h2.6v-33.3zM1418.0 227.7v-34.8h2.6v34.8zM1418.0 227.7v29.0h2.6v-29.0zM1423.2 227.7v-32.6h2.6v32.6zM1535.0 227.7v23.4h2.6v-23.4zM1652.0 227.7v-38.4h2.6v38.4zM1787.2 227.7v-40.0h2.6v40.0zM1828.8 227.7v25.0h2.6v-25.0zM1831.4 227.7v23.6h2.6v-23.6zM1867.8 227.7v22.2h2.6v-22.2zM1880.8 227.7v23.9h2.6v-23.9zM1883.4 227.7v21.9h2.6v-21.9zM1904.2 227.7v23.2h2.6v-23.2zM1906.8 227.7v21.8h2.6v-21.8zM1917.2 227.7v22.8h2.6v-22.8zM1922.4 227.7v19.1h2.6v-19.1zM1925.0 227.7v28.7h2.6v-28.7zM1940.6 227.7v29.1h2.6v-29.1zM1943.2 227.7v30.7h2.6v-30.7zM1945.8 227.7v23.8h2.6v-23.8zM1977.0 227.7v28.1h2.6v-28.1zM1979.6 227.7v35.5h2.6v-35.5zM1982.2 227.7v30.8h2.6v-30.8zM1984.8 227.7v24.7h2.6v-24.7zM1992.6 227.7v-39.8h2.6v39.8zM1992.6 227.7v33.5h2.6v-33.5zM1997.8 227.7v25.3h2.6v-25.3zM2000.4 227.7v20.9h2.6v-20.9zM2031.6 227.7v25.9h2.6v-25.9zM2068.0 227.7v-44.7h2.6v44.7zM2166.8 227.7v-25.8h2.6v25.8zM2203.2 227.7v-48.6h2.6v48.6zM2265.6 227.7v-48.6h2.6v48.6zM2268.2 227.7v-48.6h2.6v48.6zM2296.8 227.7v-22.9h2.6v22.9zM2307.2 227.7v-37.7h2.6v37.7zM2328.0 227.7v-43.2h2.6v43.2zM2372.2 227.7v20.5h2.6v-20.5zM2424.2 227.7v24.7h2.6v-24.7zM2432.0 227.7v19.3h2.6v-19.3zM2460.6 227.7v15.1h2.6v-15.1zM2463.2 227.7v20.6h2.6v-20.6zM2465.8 227.7v19.3h2.6v-19.3zM2468.4 227.7v25.9h2.6v-25.9zM2523.0 227.7v-25.5h2.6v25.5zM2533.4 227.7v-35.0h2.6v35.0z"/>
<path fill="#3a307c" d="M609.4 227.7v-48.6h2.6v48.6zM612.0 227.7v-48.6h2.6v48.6zM614.6 227.7v-48.6h2.6v48.6zM739.4 227.7v-48.6h2.6v48.6zM1717.0 227.7v-48.6h2.6v48.6zM1719.6 227.7v-48.6h2.6v48.6zM2195.4 227.7v-48.6h2.6v48.6zM2738.8 227.7v-48.6h2.6v48.6zM2741.4 227.7v-48.6h2.6v48.6zM2744.0 227.7v-48.6h2.6v48.6zM2783.0 227.7v-48.6h2.6v48.6z"/>
<path fill="#30123b" d="M635.4 227.7v-48.6h2.6v48.6zM929.2 227.7v-48.6h2.6v48.6zM931.8 227.7v-48.6h2.6v48.6zM1056.6 227.7v-48.6h2.6v48.6zM1061.8 227.7v-48.6h2.6v48.6zM1308.8 227.7v-48.6h2.6v48.6z"/>
<path fill="#424db6" d="M1524.6 227.7v-48.6h2.6v48.6zM2047.2 227.7v-48.6h2.6v48.6zM2049.8 227.7v-48.6h2.6v48.6zM2697.2 227.7v-48.6h2.6v48.6zM2699.8 227.7v-48.6h2.6v48.6zM2816.8 227.7v-48.6h2.6v48.6zM2863.6 227.7v-48.6h2.6v48.6z"/>
<path fill="#b81e02" d="M1927.6 227.7v48.6h2.6v-48.6zM2647.8 227.7v16.2h2.6v-16.2zM2655.6 227.7v-8.8h2.6v8.8zM2663.4 227.7v-6.0h2.6v6.0zM2671.2 227.7v-17.8h2.6v17.8zM2676.4 227.7v8.8h2.6v-8.8zM2681.6 227.7v-11.1h2.6v11.1zM2684.2 227.7v-4.3h2.6v4.3zM2702.4 227.7v-7.2h2.6v7.2zM2710.2 227.7v-17.1h2.6v17.1zM2736.2 227.7v21.0h2.6v-21.0zM2811.6 227.7v24.2h2.6v-24.2zM2819.4 227.7v-3.1h2.6v3.1zM2848.0 227.7v21.7h2.6v-21.7zM2853.2 227.7v15.7h2.6v-15.7zM2874.0 227.7v14.2h2.6v-14.2zM2881.8 227.7v14.9h2.6v-14.9zM2894.8 227.7v22.4h2.6v-22.4zM2897.4 227.7v-9.6h2.6v9.6z"/>
<path fill="#9a1001" d="M2650.4 227.7v17.8h2.6v-17.8zM2702.4 227.7v9.6h2.6v-9.6zM2712.8 227.7v8.2h2.6v-8.2zM2715.4 227.7v9.8h2.6v-9.8zM2728.4 227.7v-5.6h2.6v5.6zM2731.0 227.7v-8.3h2.6v8.3zM2746.6 227.7v-4.8h2.6v4.8zM2762.2 227.7v-3.0h2.6v3.0zM2764.8 227.7v14.0h2.6v-14.0zM2777.8 227.7v-9.6h2.6v9.6zM2780.4 227.7v9.6h2.6v-9.6zM2809.0 227.7v-6.6h2.6v6.6zM2850.6 227.7v-12.5h2.6v12.5zM2861.0 227.7v8.2h2.6v-8.2zM2876.6 227.7v12.6h2.6v-12.6zM2889.6 227.7v-6.5h2.6v6.5zM2900.0 227.7v3.2h2.6v-3.2zM2905.2 227.7v-35.0h2.6v35.0zM2905.2 227.7v35.0h2.6v-35.0z"/>
<!-- signal plot -->
<rect x="469" y="279" width="2270" height="1199" fill="#040d2f"/>
<clipPath id="pc"><rect x="469" y="279" width="2270" height="1199"/></clipPath>
<g clip-path="url(#pc)">
<path d="M470.1 419.3C472.6 402.0 475.1 370.9 477.6 367.5C478.5 368.3 479.4 374.5 480.3 380.3C482.8 402.9 485.3 487.3 487.8 511.3C488.1 514.0 488.5 517.2 488.9 517.6C489.4 517.0 489.9 513.1 490.4 509.8C492.5 492.9 494.6 429.4 496.7 423.7C497.4 423.9 498.2 425.5 499.0 427.1C503.2 443.6 507.3 555.6 511.5 564.7C512.3 564.7 513.0 564.3 513.8 564.0C518.0 558.8 522.1 515.5 526.3 512.0C527.9 513.8 529.4 537.2 531.0 539.0C533.7 535.8 536.5 494.2 539.3 491.0C543.2 497.8 547.1 586.8 551.0 593.6C551.8 592.4 552.7 582.8 553.6 574.9C556.5 543.2 559.3 434.4 562.2 422.4C563.1 421.8 564.0 421.2 564.8 421.2C568.9 425.1 572.9 474.1 577.0 480.1C578.3 480.9 579.6 480.8 580.9 481.7C581.9 482.8 583.0 488.7 584.0 489.2C586.9 484.9 589.7 434.1 592.6 425.5C593.9 423.2 595.2 422.9 596.5 420.8C597.8 418.4 599.1 410.7 600.4 409.9C605.3 417.0 610.3 509.7 615.2 516.8C617.6 515.5 619.9 499.3 622.2 498.1C623.0 498.2 623.8 499.4 624.6 500.4C628.7 508.4 632.9 530.5 637.1 550.3C640.4 568.1 643.8 611.1 647.2 615.4C649.8 609.8 652.4 554.1 655.0 531.2C658.9 500.2 662.8 461.6 666.7 454.4C668.3 453.4 669.8 452.6 671.4 452.5C673.7 455.2 676.1 488.7 678.4 492.6C679.3 493.2 680.3 493.6 681.2 493.7C682.6 491.7 684.0 469.3 685.4 463.7C687.1 458.8 688.9 454.3 690.6 453.6C696.9 457.8 703.3 511.8 709.6 516.0C711.7 514.5 713.8 495.2 715.9 493.7C716.6 493.7 717.4 493.7 718.2 493.7C720.5 492.9 722.9 487.4 725.2 481.7C727.6 474.1 729.9 448.0 732.2 441.9C734.6 437.9 736.9 434.6 739.3 434.1C740.3 434.1 741.3 434.3 742.4 434.6C743.3 435.0 744.2 437.5 745.2 437.7C746.3 437.1 747.5 432.0 748.6 428.6C751.2 420.6 753.8 402.7 756.4 400.9C757.7 401.5 759.0 409.3 760.3 409.9C761.4 409.6 762.4 405.6 763.4 405.2C765.0 405.7 766.6 410.2 768.1 411.5C769.9 412.6 771.8 412.7 773.6 413.8C776.2 416.2 778.8 423.7 781.4 428.6C782.7 431.1 784.0 435.5 785.3 436.0C788.4 433.2 791.5 397.4 794.6 394.6C795.7 395.1 796.7 398.2 797.8 401.3C799.3 407.7 800.9 429.2 802.4 436.4C803.5 440.3 804.5 442.4 805.6 445.0C808.9 453.3 812.3 466.1 815.7 467.6C816.7 467.3 817.8 465.0 818.8 463.0C820.9 457.7 823.0 438.6 825.1 436.9C826.1 437.2 827.1 439.2 828.2 441.1C831.2 448.9 834.2 484.5 837.2 487.6C838.1 487.6 839.0 487.4 839.9 487.1C840.4 486.3 840.9 477.7 841.4 477.0C842.5 477.2 843.5 479.2 844.6 479.3C846.2 478.8 847.9 473.1 849.5 470.9C852.8 466.8 856.0 463.4 859.3 461.1C862.5 459.1 865.8 458.9 869.0 456.4C872.3 452.3 875.5 428.8 878.8 426.8C880.7 427.8 882.7 439.1 884.6 441.6C887.2 444.0 889.8 446.0 892.4 446.3C895.0 445.8 897.6 442.8 900.2 439.7C902.8 435.5 905.4 419.6 908.0 418.2C911.3 420.4 914.5 449.1 917.8 451.4C920.4 451.1 923.0 447.7 925.6 447.5C926.9 448.0 928.2 454.7 929.5 455.3C930.8 455.1 932.1 454.2 933.4 453.3C935.3 451.3 937.3 442.4 939.2 441.6C943.1 441.6 947.0 441.6 950.9 441.6C954.2 439.7 957.4 414.3 960.7 412.4C962.6 412.9 964.6 419.6 966.5 420.2C968.5 419.1 970.4 408.4 972.4 404.6C976.0 398.5 979.7 391.8 983.3 390.9C985.5 391.6 987.7 395.9 989.9 400.7C992.5 408.4 995.1 435.8 997.7 445.5C1000.3 453.4 1002.9 458.8 1005.5 463.1C1007.9 466.3 1010.2 470.3 1012.5 470.9C1015.4 468.3 1018.3 434.5 1021.1 431.9C1023.1 433.0 1025.0 447.3 1027.0 449.4C1028.9 450.5 1030.9 451.2 1032.8 451.4C1036.1 449.9 1039.3 438.4 1042.6 429.9C1045.8 420.5 1049.1 397.1 1052.3 394.8C1053.6 394.9 1054.9 396.6 1056.2 396.8C1058.8 395.8 1061.4 384.0 1064.0 383.1C1066.6 384.1 1069.2 392.5 1071.8 398.7C1073.8 403.8 1075.7 416.2 1077.7 417.4C1079.6 417.1 1081.6 412.7 1083.5 412.4C1084.8 413.0 1086.1 420.7 1087.4 421.3C1090.0 420.1 1092.6 403.9 1095.2 402.6C1097.8 404.2 1100.4 424.4 1103.0 426.0C1104.6 425.8 1106.1 423.1 1107.7 422.9C1112.6 426.1 1117.6 465.4 1122.5 470.9C1125.1 472.3 1127.7 473.0 1130.3 473.6C1132.9 474.1 1135.5 474.7 1138.1 474.8C1139.4 474.5 1140.7 471.1 1142.0 470.9C1144.0 470.9 1145.9 472.0 1147.9 472.0C1151.1 469.3 1154.4 434.5 1157.6 431.9C1160.2 433.0 1162.8 444.5 1165.4 449.4C1168.0 453.9 1170.6 460.3 1173.2 461.1C1175.2 460.8 1177.1 458.9 1179.1 457.2C1182.3 453.8 1185.6 442.6 1188.8 441.6C1190.8 442.4 1192.7 447.9 1194.7 453.3C1196.5 459.4 1198.2 480.6 1200.0 482.6C1202.0 481.6 1203.9 469.8 1205.9 468.9C1209.1 470.3 1212.4 488.9 1215.6 490.4C1220.2 487.7 1224.7 452.9 1229.3 450.2C1232.5 450.3 1235.8 450.7 1239.0 451.4C1241.6 452.5 1244.2 460.5 1246.8 461.1C1250.7 459.8 1254.6 442.2 1258.5 440.8C1261.4 443.7 1264.2 481.6 1267.1 484.5C1270.1 483.9 1273.1 475.4 1276.1 474.8C1278.7 475.4 1281.3 483.1 1283.9 483.7C1285.2 483.5 1286.5 480.8 1287.8 480.6C1291.0 481.6 1294.3 494.4 1297.5 495.4C1299.5 495.2 1301.4 491.8 1303.4 491.5C1305.3 491.6 1307.3 493.0 1309.2 493.1C1311.8 492.5 1314.4 487.6 1317.0 483.7C1319.0 480.4 1320.9 475.8 1322.9 470.9C1325.2 464.4 1327.5 449.0 1329.9 447.5C1332.1 449.5 1334.3 476.6 1336.5 478.7C1340.4 478.0 1344.3 468.8 1348.2 468.1C1349.5 468.6 1350.8 471.8 1352.1 474.8C1354.7 482.7 1357.3 507.0 1359.9 517.7C1363.2 529.2 1366.4 539.8 1369.7 545.0C1371.6 547.3 1373.6 549.7 1375.5 550.0C1377.5 549.7 1379.4 547.3 1381.4 545.0C1383.3 541.9 1385.3 530.4 1387.2 529.4C1389.2 529.7 1391.1 534.1 1393.1 534.4C1395.0 533.9 1397.0 529.6 1398.9 526.6C1401.5 522.4 1404.1 512.8 1406.7 511.8C1409.3 513.2 1411.9 530.7 1414.5 532.1C1417.1 530.1 1419.7 511.4 1422.3 502.1C1424.9 493.0 1427.5 478.4 1430.1 476.7C1432.7 478.0 1435.3 494.9 1437.9 496.2C1439.5 495.7 1441.0 492.3 1442.6 488.4C1444.9 479.3 1447.3 431.3 1449.6 427.2C1453.3 434.0 1456.9 522.5 1460.5 529.4C1463.7 525.6 1466.8 476.6 1469.9 472.8C1472.5 476.4 1475.1 523.8 1477.7 527.4C1481.3 521.8 1485.0 448.4 1488.6 442.8C1492.9 449.5 1497.2 536.3 1501.5 543.0C1504.7 535.3 1508.0 435.6 1511.2 428.0C1515.1 435.5 1519.0 534.2 1522.9 541.8C1526.4 535.2 1530.0 448.3 1533.5 441.6C1537.8 445.0 1542.0 489.7 1546.3 493.1C1549.5 489.7 1552.6 445.8 1555.7 442.4C1559.7 447.4 1563.8 512.6 1567.8 517.7C1572.3 512.1 1576.9 440.5 1581.4 435.0C1585.6 438.7 1589.8 486.7 1593.9 490.4C1597.2 488.5 1600.4 464.9 1603.7 463.1C1605.6 463.2 1607.6 464.1 1609.5 465.0C1611.5 466.2 1613.4 470.5 1615.4 470.9C1618.0 470.0 1620.6 459.2 1623.2 458.4C1625.8 458.9 1628.4 466.4 1631.0 467.0C1633.6 465.8 1636.2 451.3 1638.8 450.2C1642.0 454.8 1645.3 515.0 1648.5 519.6C1650.5 519.4 1652.4 516.7 1654.4 516.5C1658.3 520.1 1662.2 567.5 1666.1 571.1C1668.0 570.5 1670.0 562.4 1671.9 561.7C1673.2 562.3 1674.5 569.7 1675.8 570.3C1677.4 569.5 1678.9 558.7 1680.5 557.8C1681.5 558.4 1682.6 565.1 1683.6 565.6C1685.2 564.6 1686.7 552.4 1688.3 550.0C1691.3 547.2 1694.3 547.7 1697.3 545.0C1700.5 538.8 1703.8 496.4 1707.0 491.5C1708.3 490.9 1709.6 490.4 1710.9 490.4C1712.9 492.3 1714.8 517.7 1716.8 519.6C1719.4 518.2 1722.0 501.0 1724.6 498.2C1727.2 496.5 1729.8 495.2 1732.4 495.0C1734.3 495.1 1736.3 495.2 1738.2 495.4C1739.5 496.1 1740.8 500.4 1742.1 504.0C1745.8 516.5 1749.4 559.3 1753.0 563.3C1754.6 562.6 1756.2 557.4 1757.7 552.8C1761.9 536.3 1766.0 470.1 1770.2 464.2C1771.5 464.5 1772.8 466.7 1774.1 468.9C1777.1 476.7 1780.1 516.2 1783.1 519.6C1785.0 518.8 1787.0 513.2 1788.9 507.9C1792.6 494.7 1796.2 441.7 1799.8 436.9C1804.3 443.9 1808.7 535.2 1813.1 542.2C1817.7 537.1 1822.2 470.2 1826.8 465.0C1829.7 468.5 1832.7 508.7 1835.7 517.7C1839.0 524.5 1842.2 530.4 1845.5 531.3C1848.7 528.3 1852.0 488.7 1855.2 485.7C1857.8 488.1 1860.4 520.3 1863.0 522.7C1867.6 518.2 1872.1 459.8 1876.7 455.3C1881.2 458.5 1885.8 500.0 1890.3 503.2C1891.6 503.2 1892.9 502.1 1894.2 502.1C1896.6 503.7 1898.9 525.7 1901.2 527.4C1904.1 526.2 1907.0 512.0 1909.8 508.7C1911.8 507.0 1913.7 507.1 1915.7 505.2C1916.7 503.5 1917.8 495.0 1918.8 494.3C1923.0 498.5 1927.1 554.3 1931.3 558.6C1934.5 556.7 1937.8 540.2 1941.0 529.4C1944.9 515.6 1948.8 485.7 1952.7 482.6C1955.2 484.1 1957.6 497.5 1960.0 506.0C1963.3 517.8 1966.5 542.4 1969.8 545.0C1972.4 541.8 1975.0 505.6 1977.6 498.2C1979.8 493.9 1982.0 490.2 1984.2 489.6C1985.9 490.5 1987.6 497.6 1989.3 504.0C1991.9 516.4 1994.5 559.4 1997.1 564.5C1999.7 565.6 2002.3 566.3 2004.9 566.4C2007.5 565.1 2010.1 547.5 2012.7 546.1C2014.0 546.6 2015.3 549.7 2016.6 552.8C2019.2 561.2 2021.8 589.5 2024.4 601.5C2026.6 610.4 2028.8 621.5 2031.0 623.0C2032.0 622.7 2033.1 621.0 2034.1 619.1C2037.0 609.2 2039.8 545.4 2042.7 539.1C2043.7 538.7 2044.8 538.4 2045.8 538.3C2046.8 539.6 2047.9 552.9 2048.9 556.7C2050.2 560.3 2051.5 561.0 2052.8 564.5C2054.8 571.1 2056.7 594.7 2058.7 596.8C2062.8 590.9 2067.0 513.8 2071.2 507.9C2072.8 508.3 2074.5 510.8 2076.2 513.8C2079.1 522.5 2081.9 573.7 2084.8 580.1C2086.1 581.1 2087.4 581.9 2088.7 582.0C2091.6 579.6 2094.4 548.5 2097.3 546.1C2099.0 546.8 2100.7 555.2 2102.4 556.7C2104.3 557.7 2106.3 558.5 2108.2 558.6C2111.5 558.3 2114.7 556.7 2118.0 553.9C2119.6 550.9 2121.3 529.2 2123.0 527.4C2124.6 527.7 2126.1 531.8 2127.7 532.1C2130.3 531.4 2132.9 522.3 2135.5 521.6C2138.4 522.3 2141.2 532.5 2144.1 533.3C2145.8 532.5 2147.5 524.5 2149.2 521.6C2150.7 519.2 2152.3 516.1 2153.8 515.7C2155.5 516.7 2157.2 525.4 2158.9 531.3C2161.1 539.6 2163.3 558.6 2165.5 560.6C2168.8 558.1 2172.0 526.0 2175.3 523.5C2177.0 523.8 2178.7 527.2 2180.4 527.4C2182.0 527.3 2183.7 525.6 2185.4 525.5C2188.3 526.7 2191.1 542.6 2194.0 543.8C2196.0 542.2 2197.9 527.8 2199.9 519.6C2202.7 507.5 2205.6 485.0 2208.4 482.6C2209.5 483.1 2210.5 486.7 2211.6 490.4C2213.5 500.6 2215.5 542.7 2217.4 554.7C2221.3 572.4 2225.2 586.7 2229.1 589.0C2231.5 587.6 2233.8 568.6 2236.1 567.2C2237.7 568.2 2239.3 581.0 2240.8 582.0C2241.9 581.4 2242.9 572.9 2243.9 572.3C2245.5 573.5 2247.1 589.4 2248.6 590.6C2251.5 589.2 2254.3 579.0 2257.2 570.3C2258.9 564.4 2260.6 548.5 2262.3 546.9C2264.0 547.0 2265.6 548.7 2267.3 548.9C2270.5 547.2 2273.6 526.3 2276.7 524.7C2278.4 524.9 2280.1 528.0 2281.8 528.2C2283.7 527.9 2285.7 524.6 2287.6 524.3C2290.9 525.5 2294.1 541.0 2297.4 542.2C2300.0 541.1 2302.6 526.6 2305.2 525.5C2307.1 526.1 2309.1 533.5 2311.0 535.2C2312.6 536.2 2314.1 537.0 2315.7 537.2C2316.7 536.7 2317.8 531.0 2318.8 530.5C2322.1 530.8 2325.3 534.2 2328.6 534.4C2331.2 533.2 2333.8 522.1 2336.4 516.5C2338.7 511.6 2341.0 503.7 2343.4 502.8C2345.6 503.2 2347.8 505.8 2350.0 508.7C2351.6 511.5 2353.1 522.5 2354.7 523.5C2356.4 522.8 2358.1 515.0 2359.8 512.6C2362.4 509.5 2365.0 506.4 2367.6 506.0C2369.5 506.9 2371.5 514.3 2373.4 519.6C2376.0 527.5 2378.6 542.2 2381.2 548.9C2384.1 554.9 2386.9 561.6 2389.8 562.5C2391.5 561.2 2393.2 545.3 2394.9 543.0C2396.6 541.9 2398.2 541.2 2399.9 541.1C2401.5 541.8 2403.1 550.9 2404.6 551.6C2407.9 549.3 2411.1 519.2 2414.4 516.9C2416.1 517.3 2417.7 519.7 2419.4 522.7C2421.0 526.9 2422.6 547.1 2424.1 548.9C2427.8 545.9 2431.4 507.0 2435.0 504.0C2437.9 504.8 2440.8 509.8 2443.6 515.7C2444.9 519.2 2446.2 528.9 2447.5 533.3C2449.5 538.8 2451.4 543.3 2453.4 546.1C2456.0 549.2 2458.6 552.3 2461.2 552.8C2463.1 552.3 2465.1 546.6 2467.0 546.1C2469.4 547.7 2471.7 564.6 2474.0 570.3C2475.6 573.6 2477.2 577.6 2478.7 578.1C2481.3 578.1 2483.9 577.4 2486.5 577.3C2488.5 577.6 2490.4 579.7 2492.4 582.0C2494.3 585.3 2496.3 593.8 2498.2 601.5C2499.8 608.2 2501.3 624.1 2502.9 625.7C2505.2 623.3 2507.6 591.9 2509.9 589.0C2513.2 588.3 2516.4 588.6 2519.7 587.9C2521.6 587.0 2523.6 583.9 2525.5 580.1C2527.7 573.7 2529.9 544.4 2532.2 541.8C2533.6 542.4 2535.0 546.7 2536.4 550.8C2538.0 556.4 2539.6 575.6 2541.1 577.3C2543.1 576.3 2545.0 569.0 2547.0 562.5C2549.2 553.6 2551.4 525.0 2553.6 522.3C2555.7 522.5 2557.8 523.8 2559.8 525.5C2562.4 529.2 2565.0 552.8 2567.6 554.7C2569.5 553.9 2571.3 543.8 2573.1 543.0C2575.4 543.9 2577.8 551.8 2580.1 556.7C2582.1 560.9 2584.0 566.0 2586.0 570.3C2587.9 574.5 2589.9 581.2 2591.8 582.0C2593.4 581.0 2594.9 567.5 2596.5 566.4C2598.2 566.5 2599.9 567.7 2601.6 568.4C2603.5 569.1 2605.5 570.2 2607.4 570.3C2611.3 566.9 2615.2 522.3 2619.1 518.8C2620.8 520.6 2622.5 542.2 2624.2 545.0C2625.8 546.0 2627.3 545.9 2628.9 546.9C2630.6 548.9 2632.3 560.7 2633.9 561.7C2636.2 560.6 2638.4 546.1 2640.6 545.0C2643.2 546.7 2645.8 567.9 2648.4 571.1C2651.0 572.8 2653.6 574.0 2656.2 574.2C2658.1 574.0 2660.1 571.3 2662.0 571.1C2663.3 571.6 2664.6 574.7 2665.9 578.1C2667.5 584.0 2669.0 610.9 2670.6 613.2C2674.2 609.8 2677.9 566.9 2681.5 561.7C2682.6 561.2 2683.6 560.6 2684.6 560.6C2686.5 562.6 2688.3 589.7 2690.1 591.8C2694.1 588.3 2698.2 543.7 2702.2 540.3C2703.4 540.6 2704.5 542.7 2705.7 545.0C2707.8 551.1 2709.9 582.5 2712.0 585.1C2714.4 583.1 2716.9 556.0 2719.4 553.9C2721.1 554.6 2722.7 563.8 2724.4 564.5C2725.5 564.3 2726.5 562.6 2727.6 562.5C2729.1 563.2 2730.7 571.4 2732.2 573.4C2734.2 575.3 2736.1 576.0 2738.1 577.3" fill="none" stroke="#3fa67c" stroke-width="2" stroke-linejoin="round" stroke-linecap="round"/>
<path d="M470.1 538.2C472.6 520.9 475.1 489.8 477.6 486.4C478.5 487.3 479.4 493.6 480.3 499.4C482.8 522.3 485.3 606.9 487.8 631.2C488.1 633.9 488.5 637.2 488.9 637.6C489.4 637.1 489.9 633.4 490.4 630.2C492.5 613.9 494.6 551.3 496.7 545.7C497.4 545.9 498.2 547.6 499.0 549.3C503.2 566.2 507.3 678.6 511.5 687.9C512.3 687.8 513.0 687.6 513.8 687.3C518.0 682.6 522.1 640.2 526.3 636.9C527.9 638.9 529.4 664.8 531.0 666.8C533.7 663.6 536.5 621.8 539.3 618.6C543.2 625.5 547.1 715.3 551.0 722.2C551.8 720.9 552.7 710.9 553.6 702.8C556.5 670.4 559.3 561.3 562.2 548.3C563.1 547.3 564.0 546.5 564.8 546.4C568.9 550.2 572.9 598.2 577.0 603.1C578.3 603.5 579.6 603.4 580.9 603.9C581.9 604.7 583.0 610.3 584.0 610.8C586.9 606.5 589.7 555.1 592.6 546.1C593.9 543.6 595.2 543.1 596.5 540.9C597.8 538.2 599.1 530.2 600.4 529.5C605.3 536.6 610.3 629.6 615.2 636.7C617.6 635.5 619.9 619.4 622.2 618.2C623.0 618.3 623.8 619.5 624.6 620.6C628.7 628.7 632.9 650.9 637.1 670.8C640.4 688.7 643.8 731.9 647.2 736.2C649.8 730.6 652.4 675.1 655.0 652.4C658.9 621.6 662.8 583.1 666.7 576.2C668.3 575.3 669.8 574.6 671.4 574.5C673.7 577.2 676.1 610.9 678.4 615.0C679.3 615.6 680.3 616.1 681.2 616.2C682.6 614.2 684.0 591.9 685.4 586.5C687.1 581.6 688.9 577.3 690.6 576.6C696.9 580.7 703.3 634.1 709.6 638.2C711.7 636.7 713.8 617.4 715.9 615.9C716.6 615.9 717.4 615.9 718.2 615.9C720.5 615.1 722.9 609.6 725.2 603.9C727.6 596.4 729.9 570.3 732.2 564.2C734.6 560.2 736.9 556.9 739.3 556.4C740.3 556.5 741.3 556.6 742.4 556.9C743.3 557.3 744.2 559.8 745.2 560.0C746.3 559.4 747.5 554.3 748.6 551.0C751.2 543.0 753.8 525.1 756.4 523.3C757.7 523.9 759.0 531.8 760.3 532.4C761.4 532.0 762.4 528.0 763.4 527.7C765.0 528.1 766.6 532.7 768.1 534.0C769.9 535.1 771.8 535.2 773.6 536.3C776.2 538.7 778.8 546.3 781.4 551.2C782.7 553.6 784.0 558.1 785.3 558.5C788.4 555.6 791.5 517.1 794.6 514.2C795.7 514.6 796.7 517.7 797.8 520.8C799.3 527.2 800.9 548.7 802.4 555.9C803.5 559.7 804.5 561.8 805.6 564.4C808.9 572.6 812.3 585.4 815.7 586.9C816.7 586.5 817.8 584.0 818.8 581.8C820.9 576.2 823.0 556.6 825.1 554.8C826.1 555.0 827.1 556.5 828.2 557.9C831.2 564.5 834.2 598.4 837.2 601.3C838.1 601.3 839.0 601.1 839.9 600.7C840.4 599.9 840.9 591.2 841.4 590.5C842.5 590.7 843.5 592.6 844.6 592.7C846.2 592.2 847.9 586.4 849.5 584.0C852.8 579.9 856.0 576.4 859.3 573.9C862.5 571.7 865.8 571.4 869.0 568.8C872.3 564.4 875.5 540.7 878.8 538.7C880.7 539.7 882.7 550.8 884.6 553.3C887.2 555.5 889.8 557.3 892.4 557.6C895.0 557.1 897.6 553.9 900.2 550.6C902.8 546.3 905.4 530.3 908.0 528.8C911.3 531.0 914.5 559.5 917.8 561.7C920.4 561.4 923.0 557.9 925.6 557.6C926.9 558.1 928.2 564.8 929.5 565.3C930.8 565.2 932.1 564.2 933.4 563.2C935.3 561.2 937.3 552.3 939.2 551.4C943.1 551.2 947.0 551.2 950.9 551.0C954.2 548.9 957.4 523.5 960.7 521.5C962.6 522.0 964.6 528.7 966.5 529.2C968.5 528.1 970.4 517.3 972.4 513.4C976.0 507.2 979.7 500.4 983.3 499.5C985.5 500.1 987.7 504.1 989.9 508.6C992.5 516.0 995.1 543.2 997.7 552.7C1000.3 560.3 1002.9 565.5 1005.5 569.4C1007.9 572.5 1010.2 576.1 1012.5 576.6C1015.4 573.9 1018.3 539.8 1021.1 537.1C1023.1 538.3 1025.0 552.4 1027.0 554.4C1028.9 555.3 1030.9 555.9 1032.8 556.0C1036.1 554.6 1039.3 542.8 1042.6 534.1C1045.8 524.5 1049.1 500.9 1052.3 498.5C1053.6 498.6 1054.9 500.2 1056.2 500.3C1058.8 499.3 1061.4 487.2 1064.0 486.2C1066.6 487.2 1069.2 495.1 1071.8 501.0C1073.8 505.9 1075.7 517.8 1077.7 519.0C1079.6 518.6 1081.6 513.7 1083.5 513.3C1084.8 513.8 1086.1 521.2 1087.4 521.8C1090.0 520.5 1092.6 503.5 1095.2 502.2C1097.8 503.7 1100.4 523.3 1103.0 524.8C1104.6 524.6 1106.1 521.6 1107.7 521.4C1112.6 524.5 1117.6 563.4 1122.5 568.4C1125.1 569.6 1127.7 570.2 1130.3 570.6C1132.9 570.9 1135.5 571.2 1138.1 571.3C1139.4 571.0 1140.7 567.4 1142.0 567.2C1144.0 567.2 1145.9 568.0 1147.9 568.1C1151.1 565.3 1154.4 529.9 1157.6 527.2C1160.2 528.3 1162.8 539.6 1165.4 544.4C1168.0 548.9 1170.6 555.1 1173.2 555.8C1175.2 555.6 1177.1 553.4 1179.1 551.6C1182.3 548.0 1185.6 536.5 1188.8 535.4C1190.8 536.2 1192.7 541.6 1194.7 546.9C1196.5 553.0 1198.2 574.2 1200.0 576.2C1202.0 575.2 1203.9 563.0 1205.9 562.1C1209.1 563.5 1212.4 581.9 1215.6 583.3C1220.2 580.5 1224.7 543.9 1229.3 540.9C1232.5 540.8 1235.8 540.7 1239.0 540.7C1241.6 541.3 1244.2 548.9 1246.8 549.5C1250.7 548.0 1254.6 528.7 1258.5 527.2C1261.4 530.2 1264.2 568.9 1267.1 571.9C1270.1 571.3 1273.1 562.9 1276.1 562.3C1278.7 562.9 1281.3 571.1 1283.9 571.7C1285.2 571.5 1286.5 568.9 1287.8 568.7C1291.0 569.7 1294.3 583.1 1297.5 584.1C1299.5 583.9 1301.4 580.6 1303.4 580.4C1305.3 580.5 1307.3 582.1 1309.2 582.2C1311.8 581.6 1314.4 576.8 1317.0 572.9C1319.0 569.6 1320.9 565.0 1322.9 559.9C1325.2 553.4 1327.5 537.8 1329.9 536.2C1332.1 538.4 1334.3 566.2 1336.5 568.3C1340.4 567.6 1344.3 558.4 1348.2 557.7C1349.5 558.2 1350.8 561.5 1352.1 564.6C1354.7 572.8 1357.3 597.7 1359.9 608.7C1363.2 620.7 1366.4 631.6 1369.7 637.0C1371.6 639.4 1373.6 642.0 1375.5 642.3C1377.5 642.0 1379.4 639.6 1381.4 637.2C1383.3 634.0 1385.3 622.2 1387.2 621.2C1389.2 621.5 1391.1 626.1 1393.1 626.4C1395.0 625.9 1397.0 621.4 1398.9 618.4C1401.5 614.1 1404.1 604.2 1406.7 603.2C1409.3 604.6 1411.9 622.7 1414.5 624.1C1417.1 622.0 1419.7 602.8 1422.3 593.1C1424.9 583.8 1427.5 568.7 1430.1 567.0C1432.7 568.3 1435.3 585.8 1437.9 587.1C1439.5 586.6 1441.0 583.1 1442.6 579.1C1444.9 569.7 1447.3 519.9 1449.6 515.7C1453.3 522.7 1456.9 614.0 1460.5 621.0C1463.7 617.1 1466.8 566.0 1469.9 562.0C1472.5 565.8 1475.1 614.6 1477.7 618.4C1481.3 612.5 1485.0 535.9 1488.6 530.0C1492.9 537.0 1497.2 626.8 1501.5 633.7C1504.7 625.7 1508.0 521.9 1511.2 513.9C1515.1 521.8 1519.0 624.8 1522.9 632.7C1526.4 625.7 1530.0 535.3 1533.5 528.4C1537.8 532.0 1542.0 578.7 1546.3 582.3C1549.5 578.8 1552.6 533.0 1555.7 529.5C1559.7 534.7 1563.8 603.1 1567.8 608.3C1572.3 602.6 1576.9 527.8 1581.4 522.1C1585.6 526.0 1589.8 576.6 1593.9 580.5C1597.2 578.6 1600.4 554.2 1603.7 552.3C1605.6 552.5 1607.6 553.5 1609.5 554.6C1611.5 555.9 1613.4 560.5 1615.4 560.9C1618.0 560.1 1620.6 549.0 1623.2 548.1C1625.8 548.8 1628.4 556.8 1631.0 557.5C1633.6 556.3 1636.2 541.3 1638.8 540.1C1642.0 545.0 1645.3 608.2 1648.5 613.1C1650.5 612.8 1652.4 610.0 1654.4 609.7C1658.3 613.6 1662.2 663.4 1666.1 667.2C1668.0 666.5 1670.0 658.0 1671.9 657.3C1673.2 657.9 1674.5 665.8 1675.8 666.4C1677.4 665.5 1678.9 654.1 1680.5 653.2C1681.5 653.8 1682.6 660.9 1683.6 661.4C1685.2 660.3 1686.7 647.5 1688.3 645.0C1691.3 642.0 1694.3 642.5 1697.3 639.6C1700.5 633.0 1703.8 588.2 1707.0 583.1C1708.3 582.5 1709.6 582.1 1710.9 582.0C1712.9 584.1 1714.8 611.0 1716.8 613.1C1719.4 611.6 1722.0 593.6 1724.6 590.6C1727.2 589.0 1729.8 587.8 1732.4 587.6C1734.3 587.6 1736.3 587.8 1738.2 588.2C1739.5 589.0 1740.8 593.5 1742.1 597.4C1745.8 610.7 1749.4 656.3 1753.0 660.5C1754.6 659.8 1756.2 654.5 1757.7 649.6C1761.9 632.4 1766.0 562.5 1770.2 556.3C1771.5 556.7 1772.8 559.0 1774.1 561.5C1777.1 569.9 1780.1 612.1 1783.1 615.8C1785.0 615.0 1787.0 609.1 1788.9 603.6C1792.6 589.8 1796.2 533.6 1799.8 528.6C1804.3 536.1 1808.7 633.0 1813.1 640.5C1817.7 635.0 1822.2 563.4 1826.8 557.9C1829.7 561.7 1832.7 604.4 1835.7 613.9C1839.0 621.1 1842.2 627.4 1845.5 628.3C1848.7 625.1 1852.0 582.7 1855.2 579.4C1857.8 582.0 1860.4 616.2 1863.0 618.9C1867.6 614.0 1872.1 551.3 1876.7 546.4C1881.2 549.8 1885.8 594.1 1890.3 597.5C1891.6 597.4 1892.9 596.2 1894.2 596.2C1896.6 598.0 1898.9 621.4 1901.2 623.2C1904.1 621.8 1907.0 606.6 1909.8 602.9C1911.8 601.1 1913.7 601.2 1915.7 599.1C1916.7 597.3 1917.8 588.1 1918.8 587.3C1923.0 591.9 1927.1 651.6 1931.3 656.1C1934.5 653.9 1937.8 634.8 1941.0 622.3C1944.9 606.5 1948.8 572.6 1952.7 569.0C1955.2 570.7 1957.6 585.0 1960.0 594.0C1963.3 606.7 1966.5 633.1 1969.8 635.9C1972.4 632.5 1975.0 593.4 1977.6 585.2C1979.8 580.6 1982.0 576.5 1984.2 575.8C1985.9 576.9 1987.6 584.4 1989.3 591.3C1991.9 604.7 1994.5 651.1 1997.1 656.5C1999.7 657.6 2002.3 658.3 2004.9 658.4C2007.5 656.9 2010.1 637.7 2012.7 636.2C2014.0 636.7 2015.3 640.0 2016.6 643.3C2019.2 652.4 2021.8 682.8 2024.4 695.8C2026.6 705.3 2028.8 717.2 2031.0 718.8C2032.0 718.5 2033.1 716.6 2034.1 714.5C2037.0 703.7 2039.8 634.7 2042.7 627.7C2043.7 627.2 2044.8 626.9 2045.8 626.8C2046.8 628.1 2047.9 642.5 2048.9 646.5C2050.2 650.5 2051.5 651.1 2052.8 654.9C2054.8 661.9 2056.7 687.4 2058.7 689.7C2062.8 683.3 2067.0 599.5 2071.2 593.0C2072.8 593.5 2074.5 596.1 2076.2 599.2C2079.1 608.6 2081.9 664.1 2084.8 670.9C2086.1 671.9 2087.4 672.7 2088.7 672.9C2091.6 670.3 2094.4 636.3 2097.3 633.7C2099.0 634.5 2100.7 643.5 2102.4 645.0C2104.3 646.1 2106.3 646.8 2108.2 647.0C2111.5 646.6 2114.7 644.8 2118.0 641.6C2119.6 638.2 2121.3 614.6 2123.0 612.7C2124.6 613.0 2126.1 617.3 2127.7 617.6C2130.3 616.9 2132.9 606.7 2135.5 606.0C2138.4 606.8 2141.2 617.6 2144.1 618.4C2145.8 617.6 2147.5 608.8 2149.2 605.6C2150.7 602.9 2152.3 599.5 2153.8 599.1C2155.5 600.2 2157.2 609.5 2158.9 615.9C2161.1 624.9 2163.3 645.5 2165.5 647.6C2168.8 644.9 2172.0 609.8 2175.3 607.1C2177.0 607.3 2178.7 610.9 2180.4 611.2C2182.0 611.1 2183.7 609.1 2185.4 609.0C2188.3 610.3 2191.1 627.4 2194.0 628.7C2196.0 627.0 2197.9 611.2 2199.9 602.3C2202.7 589.0 2205.6 564.4 2208.4 561.7C2209.5 562.2 2210.5 566.1 2211.6 570.2C2213.5 581.4 2215.5 627.3 2217.4 640.4C2221.3 659.8 2225.2 675.5 2229.1 678.0C2231.5 676.4 2233.8 655.8 2236.1 654.2C2237.7 655.3 2239.3 669.3 2240.8 670.4C2241.9 669.7 2242.9 660.5 2243.9 659.8C2245.5 661.1 2247.1 678.5 2248.6 679.8C2251.5 678.4 2254.3 667.3 2257.2 657.8C2258.9 651.3 2260.6 633.9 2262.3 632.2C2264.0 632.4 2265.6 634.3 2267.3 634.4C2270.5 632.6 2273.6 609.8 2276.7 608.0C2278.4 608.3 2280.1 611.6 2281.8 611.9C2283.7 611.6 2285.7 607.9 2287.6 607.7C2290.9 609.0 2294.1 626.0 2297.4 627.4C2300.0 626.1 2302.6 610.3 2305.2 609.0C2307.1 609.8 2309.1 617.9 2311.0 619.8C2312.6 620.8 2314.1 621.8 2315.7 621.9C2316.7 621.4 2317.8 615.2 2318.8 614.7C2322.1 615.0 2325.3 618.7 2328.6 619.0C2331.2 617.7 2333.8 605.5 2336.4 599.4C2338.7 594.1 2341.0 585.4 2343.4 584.5C2345.6 584.9 2347.8 587.6 2350.0 590.7C2351.6 593.7 2353.1 605.7 2354.7 606.8C2356.4 606.0 2358.1 597.4 2359.8 594.7C2362.4 591.2 2365.0 587.7 2367.6 587.2C2369.5 588.2 2371.5 596.2 2373.4 602.0C2376.0 610.6 2378.6 626.7 2381.2 633.9C2384.1 640.5 2386.9 647.7 2389.8 648.7C2391.5 647.3 2393.2 629.7 2394.9 627.1C2396.6 625.9 2398.2 625.0 2399.9 624.9C2401.5 625.6 2403.1 635.6 2404.6 636.3C2407.9 633.8 2411.1 600.5 2414.4 597.9C2416.1 598.3 2417.7 601.0 2419.4 604.2C2421.0 608.8 2422.6 631.0 2424.1 632.9C2427.8 629.6 2431.4 586.6 2435.0 583.2C2437.9 584.1 2440.8 589.5 2443.6 596.0C2444.9 599.8 2446.2 610.5 2447.5 615.3C2449.5 621.4 2451.4 626.3 2453.4 629.4C2456.0 632.7 2458.6 636.1 2461.2 636.6C2463.1 636.1 2465.1 629.6 2467.0 629.2C2469.4 630.9 2471.7 649.5 2474.0 655.7C2475.6 659.3 2477.2 663.7 2478.7 664.3C2481.3 664.2 2483.9 663.4 2486.5 663.3C2488.5 663.7 2490.4 665.9 2492.4 668.4C2494.3 672.0 2496.3 681.4 2498.2 689.9C2499.8 697.3 2501.3 714.8 2502.9 716.6C2505.2 713.9 2507.6 679.2 2509.9 675.9C2513.2 675.1 2516.4 675.3 2519.7 674.5C2521.6 673.5 2523.6 670.1 2525.5 665.8C2527.7 658.7 2529.9 626.2 2532.2 623.4C2533.6 624.0 2535.0 628.7 2536.4 633.2C2538.0 639.4 2539.6 660.6 2541.1 662.5C2543.1 661.4 2545.0 653.3 2547.0 646.0C2549.2 636.1 2551.4 604.4 2553.6 601.4C2555.7 601.6 2557.8 603.0 2559.8 604.8C2562.4 608.9 2565.0 635.0 2567.6 637.2C2569.5 636.3 2571.3 625.0 2573.1 624.1C2575.4 625.1 2577.8 633.8 2580.1 639.2C2582.1 643.9 2584.0 649.6 2586.0 654.3C2587.9 658.9 2589.9 666.4 2591.8 667.3C2593.4 666.1 2594.9 651.0 2596.5 649.9C2598.2 650.0 2599.9 651.3 2601.6 652.0C2603.5 652.8 2605.5 654.0 2607.4 654.1C2611.3 650.3 2615.2 600.6 2619.1 596.7C2620.8 598.7 2622.5 622.7 2624.2 625.7C2625.8 626.9 2627.3 626.7 2628.9 627.8C2630.6 630.0 2632.3 643.2 2633.9 644.3C2636.2 643.0 2638.4 626.7 2640.6 625.5C2643.2 627.4 2645.8 650.9 2648.4 654.5C2651.0 656.3 2653.6 657.6 2656.2 657.8C2658.1 657.6 2660.1 654.5 2662.0 654.3C2663.3 654.8 2664.6 658.3 2665.9 662.1C2667.5 668.6 2669.0 698.6 2670.6 701.2C2674.2 697.3 2677.9 649.4 2681.5 643.6C2682.6 642.9 2683.6 642.3 2684.6 642.2C2686.5 644.5 2688.3 674.7 2690.1 677.0C2694.1 673.1 2698.2 623.1 2702.2 619.3C2703.4 619.6 2704.5 622.0 2705.7 624.6C2707.8 631.5 2709.9 666.6 2712.0 669.6C2714.4 667.3 2716.9 637.2 2719.4 634.9C2721.1 635.7 2722.7 646.0 2724.4 646.8C2725.5 646.6 2726.5 644.8 2727.6 644.6C2729.1 645.5 2730.7 654.6 2732.2 657.0C2734.2 659.1 2736.1 659.9 2738.1 661.4" fill="none" stroke="#3b67ad" stroke-width="2" stroke-linejoin="round" stroke-linecap="round"/>
<path d="M470.1 653.8C472.6 636.6 475.1 605.5 477.6 602.1C478.5 602.9 479.4 609.3 480.3 615.1C482.8 638.0 485.3 722.7 487.8 747.0C488.1 749.7 488.5 752.9 488.9 753.3C489.4 752.8 489.9 748.7 490.4 745.4C492.5 728.2 494.6 664.4 496.7 658.6C497.4 658.8 498.2 660.6 499.0 662.3C503.2 679.5 507.3 792.3 511.5 801.6C512.3 801.5 513.0 801.3 513.8 801.0C518.0 796.3 522.1 753.8 526.3 750.4C527.9 752.4 529.4 779.2 531.0 781.3C533.7 778.2 536.5 737.6 539.3 734.4C543.2 741.3 547.1 829.8 551.0 836.6C551.8 835.3 552.7 825.6 553.6 817.7C556.5 785.8 559.3 676.7 562.2 664.4C563.1 663.7 564.0 663.1 564.8 663.0C568.9 666.7 572.9 714.4 577.0 718.8C578.3 719.0 579.6 719.0 580.9 719.3C581.9 719.9 583.0 725.5 584.0 726.0C586.9 721.6 589.7 669.7 592.6 660.2C593.9 657.5 595.2 657.0 596.5 654.6C597.8 651.8 599.1 643.6 600.4 642.8C605.3 649.8 610.3 740.5 615.2 747.5C617.6 746.2 619.9 730.1 622.2 728.9C623.0 729.1 623.8 730.3 624.6 731.3C628.7 739.5 632.9 761.7 637.1 781.8C640.4 799.7 643.8 843.1 647.2 847.5C649.8 841.8 652.4 786.1 655.0 763.2C658.9 732.2 662.8 693.7 666.7 686.4C668.3 685.4 669.8 684.6 671.4 684.5C673.7 687.2 676.1 720.0 678.4 724.4C679.3 725.2 680.3 725.9 681.2 726.0C682.6 724.2 684.0 702.7 685.4 698.1C687.1 694.2 688.9 691.0 690.6 690.5C696.9 694.7 703.3 749.7 709.6 754.0C711.7 752.5 713.8 733.3 715.9 731.8C716.6 731.8 717.4 731.9 718.2 731.9C720.5 731.1 722.9 725.7 725.2 720.1C727.6 712.6 729.9 686.4 732.2 680.4C734.6 676.5 736.9 673.3 739.3 672.8C740.3 672.9 741.3 673.1 742.4 673.4C743.3 673.9 744.2 676.5 745.2 676.7C746.3 676.1 747.5 671.0 748.6 667.7C751.2 659.7 753.8 641.9 756.4 640.1C757.7 640.7 759.0 648.3 760.3 648.9C761.4 648.6 762.4 644.3 763.4 644.0C765.0 644.4 766.6 648.9 768.1 650.0C769.9 650.9 771.8 651.0 773.6 651.9C776.2 654.1 778.8 661.5 781.4 666.3C782.7 668.7 784.0 672.9 785.3 673.4C788.4 670.7 791.5 635.1 794.6 632.4C795.7 632.8 796.7 635.9 797.8 638.9C799.3 645.3 800.9 666.9 802.4 674.0C803.5 677.8 804.5 679.9 805.6 682.5C808.9 690.7 812.3 703.3 815.7 704.8C816.7 704.4 817.8 701.7 818.8 699.4C820.9 693.6 823.0 673.5 825.1 671.7C826.1 671.9 827.1 673.3 828.2 674.7C831.2 681.0 834.2 715.0 837.2 717.9C838.1 717.8 839.0 717.7 839.9 717.3C840.4 716.4 840.9 707.7 841.4 707.0C842.5 707.2 843.5 709.1 844.6 709.3C846.2 708.7 847.9 702.9 849.5 700.5C852.8 696.3 856.0 692.8 859.3 690.3C862.5 688.2 865.8 687.9 869.0 685.2C872.3 680.9 875.5 657.0 878.8 655.0C880.7 655.9 882.7 667.2 884.6 669.7C887.2 671.9 889.8 673.8 892.4 674.1C895.0 673.6 897.6 670.4 900.2 667.1C902.8 662.8 905.4 646.6 908.0 645.1C911.3 647.3 914.5 676.0 917.8 678.3C920.4 678.0 923.0 674.4 925.6 674.1C926.9 674.6 928.2 681.3 929.5 681.8C930.8 681.7 932.1 680.7 933.4 679.7C935.3 677.7 937.3 668.7 939.2 667.8C943.1 667.5 947.0 667.6 950.9 667.4C954.2 665.2 957.4 639.6 960.7 637.6C962.6 638.1 964.6 644.7 966.5 645.3C968.5 644.2 970.4 633.2 972.4 629.3C976.0 623.1 979.7 616.1 983.3 615.2C985.5 615.8 987.7 619.8 989.9 624.2C992.5 631.6 995.1 659.1 997.7 668.5C1000.3 676.1 1002.9 681.3 1005.5 685.3C1007.9 688.3 1010.2 691.8 1012.5 692.3C1015.4 689.6 1018.3 655.0 1021.1 652.4C1023.1 653.5 1025.0 667.8 1027.0 669.8C1028.9 670.7 1030.9 671.3 1032.8 671.4C1036.1 669.9 1039.3 658.0 1042.6 649.2C1045.8 639.4 1049.1 615.5 1052.3 613.1C1053.6 613.2 1054.9 614.8 1056.2 614.9C1058.8 613.9 1061.4 601.6 1064.0 600.6C1066.6 601.6 1069.2 609.6 1071.8 615.7C1073.8 620.7 1075.7 632.8 1077.7 634.1C1079.6 633.7 1081.6 628.8 1083.5 628.4C1084.8 629.0 1086.1 636.5 1087.4 637.1C1090.0 635.8 1092.6 618.8 1095.2 617.4C1097.8 619.0 1100.4 638.9 1103.0 640.4C1104.6 640.2 1106.1 637.1 1107.7 636.8C1112.6 640.0 1117.6 679.1 1122.5 684.0C1125.1 685.1 1127.7 685.7 1130.3 686.1C1132.9 686.3 1135.5 686.5 1138.1 686.5C1139.4 686.3 1140.7 682.6 1142.0 682.3C1144.0 682.4 1145.9 683.0 1147.9 683.1C1151.1 680.3 1154.4 644.4 1157.6 641.7C1160.2 642.8 1162.8 654.1 1165.4 658.9C1168.0 663.3 1170.6 669.5 1173.2 670.2C1175.2 669.9 1177.1 667.7 1179.1 665.9C1182.3 662.1 1185.6 650.5 1188.8 649.4C1190.8 650.1 1192.7 655.5 1194.7 660.8C1196.5 666.9 1198.2 688.1 1200.0 690.1C1202.0 689.1 1203.9 676.8 1205.9 675.8C1209.1 677.2 1212.4 695.5 1215.6 696.9C1220.2 694.1 1224.7 657.4 1229.3 654.4C1232.5 654.3 1235.8 654.2 1239.0 654.2C1241.6 654.8 1244.2 662.4 1246.8 663.0C1250.7 661.5 1254.6 642.3 1258.5 640.8C1261.4 643.8 1264.2 682.3 1267.1 685.2C1270.1 684.6 1273.1 676.1 1276.1 675.4C1278.7 676.0 1281.3 684.0 1283.9 684.6C1285.2 684.4 1286.5 681.7 1287.8 681.5C1291.0 682.5 1294.3 695.6 1297.5 696.6C1299.5 696.4 1301.4 693.0 1303.4 692.7C1305.3 692.9 1307.3 694.3 1309.2 694.4C1311.8 693.8 1314.4 688.9 1317.0 685.0C1319.0 681.6 1320.9 677.0 1322.9 671.9C1325.2 665.4 1327.5 649.8 1329.9 648.2C1332.1 650.3 1334.3 678.0 1336.5 680.2C1340.4 679.5 1344.3 670.6 1348.2 669.9C1349.5 670.3 1350.8 673.7 1352.1 676.8C1354.7 685.0 1357.3 709.7 1359.9 720.7C1363.2 732.6 1366.4 743.5 1369.7 748.8C1371.6 751.3 1373.6 753.9 1375.5 754.2C1377.5 753.9 1379.4 751.4 1381.4 749.0C1383.3 745.8 1385.3 734.0 1387.2 733.0C1389.2 733.3 1391.1 737.7 1393.1 738.0C1395.0 737.5 1397.0 733.0 1398.9 730.0C1401.5 725.7 1404.1 715.8 1406.7 714.8C1409.3 716.1 1411.9 733.9 1414.5 735.3C1417.1 733.2 1419.7 714.1 1422.3 704.6C1424.9 695.3 1427.5 680.3 1430.1 678.6C1432.7 679.9 1435.3 697.0 1437.9 698.3C1439.5 697.8 1441.0 694.3 1442.6 690.3C1444.9 681.0 1447.3 631.9 1449.6 627.8C1453.3 634.7 1456.9 724.5 1460.5 731.4C1463.7 727.5 1466.8 677.2 1469.9 673.3C1472.5 677.0 1475.1 724.9 1477.7 728.6C1481.3 722.8 1485.0 647.5 1488.6 641.8C1492.9 648.5 1497.2 736.6 1501.5 743.4C1504.7 735.6 1508.0 634.5 1511.2 626.7C1515.1 634.5 1519.0 735.4 1522.9 743.1C1526.4 736.3 1530.0 647.7 1533.5 640.9C1537.8 644.4 1542.0 690.1 1546.3 693.6C1549.5 690.2 1552.6 645.3 1555.7 641.9C1559.7 647.0 1563.8 713.9 1567.8 719.1C1572.3 713.4 1576.9 640.2 1581.4 634.5C1585.6 638.4 1589.8 688.0 1593.9 691.9C1597.2 690.0 1600.4 666.1 1603.7 664.3C1605.6 664.4 1607.6 665.5 1609.5 666.5C1611.5 667.8 1613.4 672.4 1615.4 672.8C1618.0 672.0 1620.6 661.2 1623.2 660.3C1625.8 660.9 1628.4 668.9 1631.0 669.5C1633.6 668.4 1636.2 653.7 1638.8 652.6C1642.0 657.3 1645.3 719.2 1648.5 723.9C1650.5 723.7 1652.4 720.9 1654.4 720.7C1658.3 724.5 1662.2 773.2 1666.1 776.9C1668.0 776.3 1670.0 767.9 1671.9 767.3C1673.2 767.9 1674.5 775.5 1675.8 776.1C1677.4 775.3 1678.9 764.1 1680.5 763.3C1681.5 763.8 1682.6 770.8 1683.6 771.3C1685.2 770.2 1686.7 757.7 1688.3 755.2C1691.3 752.3 1694.3 752.9 1697.3 750.0C1700.5 743.6 1703.8 699.7 1707.0 694.9C1708.3 694.3 1709.6 693.9 1710.9 693.8C1712.9 695.9 1714.8 722.2 1716.8 724.3C1719.4 722.8 1722.0 705.3 1724.6 702.5C1727.2 700.9 1729.8 699.8 1732.4 699.6C1734.3 699.6 1736.3 699.8 1738.2 700.2C1739.5 701.0 1740.8 705.4 1742.1 709.2C1745.8 722.3 1749.4 766.9 1753.0 771.0C1754.6 770.3 1756.2 765.1 1757.7 760.3C1761.9 743.5 1766.0 675.3 1770.2 669.2C1771.5 669.5 1772.8 671.9 1774.1 674.2C1777.1 682.4 1780.1 723.6 1783.1 727.1C1785.0 726.3 1787.0 720.6 1788.9 715.2C1792.6 701.7 1796.2 646.9 1799.8 642.1C1804.3 649.3 1808.7 743.8 1813.1 751.1C1817.7 745.7 1822.2 676.0 1826.8 670.7C1829.7 674.3 1832.7 716.0 1835.7 725.2C1839.0 732.3 1842.2 738.3 1845.5 739.2C1848.7 736.1 1852.0 694.8 1855.2 691.6C1857.8 694.2 1860.4 727.5 1863.0 730.0C1867.6 725.3 1872.1 664.2 1876.7 659.5C1881.2 662.9 1885.8 705.9 1890.3 709.2C1891.6 709.2 1892.9 708.0 1894.2 708.0C1896.6 709.7 1898.9 732.5 1901.2 734.3C1904.1 732.9 1907.0 718.1 1909.8 714.6C1911.8 712.8 1913.7 712.9 1915.7 710.8C1916.7 709.0 1917.8 700.1 1918.8 699.3C1923.0 703.8 1927.1 761.9 1931.3 766.3C1934.5 764.1 1937.8 745.5 1941.0 733.3C1944.9 717.9 1948.8 684.9 1952.7 681.4C1955.2 683.0 1957.6 696.9 1960.0 705.6C1963.3 717.8 1966.5 743.3 1969.8 746.0C1972.4 742.7 1975.0 704.6 1977.6 696.6C1979.8 692.0 1982.0 688.0 1984.2 687.4C1985.9 688.4 1987.6 695.7 1989.3 702.3C1991.9 715.3 1994.5 760.3 1997.1 765.5C1999.7 766.6 2002.3 767.2 2004.9 767.3C2007.5 765.9 2010.1 747.3 2012.7 745.8C2014.0 746.3 2015.3 749.5 2016.6 752.7C2019.2 761.5 2021.8 791.1 2024.4 803.7C2026.6 813.0 2028.8 824.5 2031.0 826.0C2032.0 825.8 2033.1 823.9 2034.1 821.9C2037.0 811.4 2039.8 744.4 2042.7 737.6C2043.7 737.2 2044.8 736.8 2045.8 736.7C2046.8 738.0 2047.9 752.0 2048.9 755.9C2050.2 759.8 2051.5 760.4 2052.8 764.0C2054.8 770.9 2056.7 795.7 2058.7 797.9C2062.8 791.7 2067.0 710.3 2071.2 704.0C2072.8 704.4 2074.5 707.0 2076.2 710.1C2079.1 719.2 2081.9 773.1 2084.8 779.7C2086.1 780.8 2087.4 781.6 2088.7 781.7C2091.6 779.2 2094.4 746.3 2097.3 743.8C2099.0 744.5 2100.7 753.2 2102.4 754.8C2104.3 755.8 2106.3 756.6 2108.2 756.7C2111.5 756.4 2114.7 754.7 2118.0 751.6C2119.6 748.3 2121.3 725.4 2123.0 723.5C2124.6 723.8 2126.1 728.0 2127.7 728.4C2130.3 727.6 2132.9 717.8 2135.5 717.1C2138.4 717.9 2141.2 728.5 2144.1 729.3C2145.8 728.4 2147.5 720.0 2149.2 716.8C2150.7 714.2 2152.3 710.9 2153.8 710.5C2155.5 711.6 2157.2 720.6 2158.9 726.8C2161.1 735.5 2163.3 755.5 2165.5 757.5C2168.8 754.9 2172.0 720.5 2175.3 717.9C2177.0 718.2 2178.7 721.6 2180.4 721.8C2182.0 721.7 2183.7 719.7 2185.4 719.6C2188.3 720.8 2191.1 737.4 2194.0 738.6C2196.0 736.9 2197.9 721.5 2199.9 712.8C2202.7 699.8 2205.6 675.7 2208.4 673.0C2209.5 673.6 2210.5 677.4 2211.6 681.3C2213.5 692.2 2215.5 736.8 2217.4 749.5C2221.3 768.4 2225.2 783.5 2229.1 786.0C2231.5 784.4 2233.8 764.3 2236.1 762.8C2237.7 763.9 2239.3 777.5 2240.8 778.5C2241.9 777.8 2242.9 768.9 2243.9 768.2C2245.5 769.5 2247.1 786.4 2248.6 787.7C2251.5 786.2 2254.3 775.4 2257.2 766.1C2258.9 759.9 2260.6 742.9 2262.3 741.3C2264.0 741.4 2265.6 743.2 2267.3 743.4C2270.5 741.6 2273.6 719.4 2276.7 717.7C2278.4 717.9 2280.1 721.1 2281.8 721.4C2283.7 721.1 2285.7 717.5 2287.6 717.2C2290.9 718.5 2294.1 735.0 2297.4 736.3C2300.0 735.1 2302.6 719.7 2305.2 718.5C2307.1 719.2 2309.1 727.1 2311.0 728.8C2312.6 729.8 2314.1 730.8 2315.7 730.9C2316.7 730.4 2317.8 724.3 2318.8 723.8C2322.1 724.1 2325.3 727.7 2328.6 728.0C2331.2 726.7 2333.8 714.8 2336.4 708.9C2338.7 703.7 2341.0 695.3 2343.4 694.3C2345.6 694.7 2347.8 697.3 2350.0 700.3C2351.6 703.2 2353.1 714.9 2354.7 716.0C2356.4 715.2 2358.1 706.8 2359.8 704.1C2362.4 700.8 2365.0 697.3 2367.6 696.8C2369.5 697.8 2371.5 705.5 2373.4 711.2C2376.0 719.4 2378.6 735.1 2381.2 742.1C2384.1 748.4 2386.9 755.4 2389.8 756.4C2391.5 755.0 2393.2 737.9 2394.9 735.4C2396.6 734.1 2398.2 733.3 2399.9 733.1C2401.5 733.9 2403.1 743.5 2404.6 744.2C2407.9 741.7 2411.1 709.3 2414.4 706.8C2416.1 707.2 2417.7 709.7 2419.4 712.9C2421.0 717.2 2422.6 738.8 2424.1 740.6C2427.8 737.4 2431.4 695.5 2435.0 692.3C2437.9 693.1 2440.8 698.4 2443.6 704.7C2444.9 708.4 2446.2 718.8 2447.5 723.3C2449.5 729.3 2451.4 734.0 2453.4 737.0C2456.0 740.2 2458.6 743.5 2461.2 743.9C2463.1 743.5 2465.1 737.2 2467.0 736.7C2469.4 738.5 2471.7 756.4 2474.0 762.5C2475.6 766.0 2477.2 770.2 2478.7 770.8C2481.3 770.7 2483.9 769.9 2486.5 769.8C2488.5 770.1 2490.4 772.3 2492.4 774.7C2494.3 778.2 2496.3 787.3 2498.2 795.5C2499.8 802.6 2501.3 819.6 2502.9 821.3C2505.2 818.7 2507.6 785.1 2509.9 781.9C2513.2 781.1 2516.4 781.3 2519.7 780.5C2521.6 779.5 2523.6 776.2 2525.5 772.0C2527.7 765.2 2529.9 733.7 2532.2 730.9C2533.6 731.6 2535.0 736.2 2536.4 740.5C2538.0 746.4 2539.6 767.0 2541.1 768.8C2543.1 767.8 2545.0 759.9 2547.0 752.8C2549.2 743.2 2551.4 712.5 2553.6 709.6C2555.7 709.8 2557.8 711.2 2559.8 713.0C2562.4 717.0 2565.0 742.3 2567.6 744.4C2569.5 743.6 2571.3 732.7 2573.1 731.9C2575.4 732.9 2577.8 741.3 2580.1 746.6C2582.1 751.1 2584.0 756.7 2586.0 761.3C2587.9 765.7 2589.9 773.0 2591.8 773.9C2593.4 772.7 2594.9 758.2 2596.5 757.1C2598.2 757.3 2599.9 758.6 2601.6 759.2C2603.5 760.0 2605.5 761.2 2607.4 761.4C2611.3 757.7 2615.2 709.7 2619.1 706.1C2620.8 707.9 2622.5 731.2 2624.2 734.1C2625.8 735.3 2627.3 735.1 2628.9 736.2C2630.6 738.3 2632.3 751.1 2633.9 752.1C2636.2 750.9 2638.4 735.2 2640.6 734.0C2643.2 735.9 2645.8 758.7 2648.4 762.1C2651.0 763.9 2653.6 765.2 2656.2 765.5C2658.1 765.2 2660.1 762.3 2662.0 762.1C2663.3 762.6 2664.6 765.9 2665.9 769.6C2667.5 776.0 2669.0 804.9 2670.6 807.4C2674.2 803.7 2677.9 757.5 2681.5 751.9C2682.6 751.3 2683.6 750.7 2684.6 750.6C2686.5 752.9 2688.3 782.0 2690.1 784.2C2694.1 780.5 2698.2 732.4 2702.2 728.7C2703.4 729.0 2704.5 731.4 2705.7 733.9C2707.8 740.6 2709.9 774.6 2712.0 777.5C2714.4 775.3 2716.9 746.5 2719.4 744.3C2721.1 745.0 2722.7 755.1 2724.4 755.9C2725.5 755.7 2726.5 754.1 2727.6 753.9C2729.1 754.7 2730.7 763.6 2732.2 766.0C2734.2 768.2 2736.1 769.0 2738.1 770.5" fill="none" stroke="#f0b71a" stroke-width="2" stroke-linejoin="round" stroke-linecap="round"/>
<path d="M470.2 767.8C472.9 760.7 475.5 748.1 478.1 746.7C481.4 753.6 484.6 838.9 487.8 849.7C488.3 850.4 488.8 851.1 489.3 851.2C491.7 848.1 494.1 808.8 496.6 805.8C499.0 807.4 501.4 819.7 503.9 829.2C505.3 835.6 506.8 843.7 508.3 852.6C509.7 862.2 511.2 884.0 512.7 886.3C514.6 885.4 516.6 874.0 518.5 873.1C519.7 873.3 520.9 875.3 522.0 875.4C523.6 875.2 525.1 871.9 526.7 871.6C529.3 873.1 532.0 892.1 534.6 893.6C536.3 892.1 537.9 873.1 539.6 871.6C542.8 874.9 546.0 918.1 549.2 921.4C553.1 915.4 557.0 845.9 560.9 832.1C562.4 828.7 563.9 825.3 565.3 824.8C567.3 825.0 569.2 827.6 571.2 827.7C573.1 827.3 575.1 820.9 577.0 820.4C578.5 820.6 580.0 821.8 581.4 823.4C582.4 825.0 583.4 832.9 584.3 833.6C587.3 829.8 590.2 780.6 593.1 776.0C594.6 775.5 596.0 775.6 597.5 775.1C598.7 774.5 599.8 771.0 601.0 770.7C602.8 772.0 604.5 782.7 606.3 789.7C608.2 798.0 610.2 808.6 612.1 817.5C616.0 834.9 619.9 847.9 623.8 867.2C626.8 883.0 629.7 912.4 632.6 922.8C634.1 926.8 635.5 928.0 637.0 931.6C639.9 940.1 642.9 965.7 645.8 968.2C647.2 966.5 648.7 952.8 650.2 943.3C653.1 922.6 656.0 891.0 658.9 867.2C661.4 848.1 663.8 821.3 666.3 813.1C667.9 809.5 669.6 806.3 671.2 805.8C673.5 807.6 675.7 830.4 678.0 832.1C680.4 829.8 682.8 803.0 685.3 797.0C687.0 793.9 688.8 791.0 690.5 790.6C692.7 792.6 694.8 811.2 697.0 820.4C701.1 837.4 705.2 864.1 709.3 867.2C711.5 865.3 713.8 846.3 716.0 838.0C717.9 831.3 719.9 826.6 721.8 820.4C724.8 811.0 727.7 792.6 730.6 790.6C733.1 790.6 735.5 791.1 737.9 791.2C739.9 791.1 741.8 790.5 743.8 789.7C745.3 788.5 746.7 783.3 748.2 779.5C750.4 773.3 752.7 759.8 754.9 758.4C757.1 759.5 759.2 769.4 761.3 775.1C763.3 780.3 765.2 790.1 767.2 791.2C769.1 791.1 771.1 790.6 773.0 790.6C776.9 791.6 780.9 804.8 784.8 805.8C788.0 803.8 791.2 777.1 794.4 775.1C797.5 777.1 800.6 798.7 803.8 805.8C808.6 815.1 813.5 824.9 818.4 826.3C820.3 825.5 822.3 817.3 824.2 814.0C826.2 811.0 828.1 806.9 830.1 806.4C832.5 808.0 835.0 829.1 837.4 830.7C838.9 830.4 840.3 826.6 841.8 826.3C843.5 827.0 845.1 836.7 846.8 837.4C848.5 837.0 850.3 833.6 852.0 830.7C855.0 824.9 857.9 811.5 860.8 804.3C863.3 798.9 865.7 794.0 868.1 790.6C871.5 786.5 875.0 781.6 878.4 780.9C880.3 781.6 882.3 789.9 884.2 790.6C885.7 790.2 887.2 785.1 888.6 784.7C890.1 785.0 891.5 788.6 893.0 788.8C895.0 788.5 896.9 786.2 898.9 783.9C901.8 779.2 904.7 760.1 907.6 758.4C910.6 760.1 913.5 782.2 916.4 783.9C917.6 783.8 918.7 783.0 919.9 783.0C921.7 783.7 923.4 792.6 925.2 794.1C926.6 794.9 928.1 794.8 929.6 795.6C931.0 796.7 932.5 802.4 934.0 802.9C935.4 802.3 936.9 795.2 938.3 794.7C939.3 795.0 940.3 799.6 941.3 800.0C943.7 799.8 946.2 798.5 948.6 797.0C950.5 795.4 952.5 791.8 954.4 788.3C956.2 784.6 958.0 775.1 959.7 774.2C961.9 775.1 964.0 786.8 966.1 787.7C968.6 786.1 971.0 767.2 973.5 764.8C975.4 764.0 977.4 764.2 979.3 763.4C980.3 762.6 981.3 757.9 982.2 757.5C983.7 757.5 985.2 757.5 986.6 757.5C988.6 759.4 990.5 776.4 992.5 785.3C994.9 796.3 997.4 812.1 999.8 816.9C1002.4 820.3 1005.1 822.9 1007.7 823.4C1009.9 823.3 1012.2 822.7 1014.4 821.9C1017.1 819.0 1019.7 792.7 1022.3 790.6C1023.6 791.2 1024.9 799.1 1026.1 800.0C1028.4 800.3 1030.6 800.5 1032.8 800.5C1035.2 799.2 1037.6 787.5 1040.0 780.9C1042.0 775.6 1043.9 771.7 1045.9 764.8C1048.6 753.4 1051.3 718.4 1054.0 715.1C1055.7 715.5 1057.4 720.0 1059.0 720.4C1060.7 719.6 1062.3 710.0 1064.0 709.3C1066.9 710.8 1069.8 726.6 1072.8 732.7C1074.5 735.9 1076.3 740.3 1078.0 740.9C1079.7 740.2 1081.3 731.8 1083.0 731.2C1084.6 732.2 1086.1 745.7 1087.7 746.7C1090.1 746.1 1092.6 738.5 1095.0 737.9C1095.9 738.2 1096.8 739.9 1097.6 741.4C1099.4 745.2 1101.1 755.9 1102.9 759.0C1104.6 761.1 1106.2 761.2 1107.9 763.4C1110.1 767.6 1112.4 784.1 1114.6 789.7C1115.9 792.3 1117.1 793.1 1118.4 795.6C1120.1 799.3 1121.7 810.0 1123.4 811.1C1125.0 810.7 1126.7 806.2 1128.4 805.8C1129.8 806.0 1131.3 809.1 1132.7 809.3C1134.5 808.4 1136.3 796.5 1138.0 795.6C1139.0 795.7 1140.0 796.9 1140.9 797.0C1142.4 796.9 1143.9 795.7 1145.3 795.6C1146.8 795.7 1148.3 796.9 1149.7 797.0C1150.7 796.6 1151.7 793.9 1152.6 791.2C1153.9 786.3 1155.2 766.6 1156.4 764.8C1157.4 764.8 1158.4 764.8 1159.4 764.8C1161.0 765.4 1162.7 773.0 1164.3 773.6C1165.6 773.5 1166.9 771.4 1168.1 771.3C1169.0 771.6 1169.9 775.7 1170.8 776.0C1172.2 775.6 1173.7 771.0 1175.2 770.7C1177.6 771.4 1180.0 781.1 1182.5 781.8C1184.0 780.8 1185.6 768.2 1187.2 767.2C1188.3 767.4 1189.5 769.9 1190.7 770.1C1191.4 770.1 1192.0 769.3 1192.7 769.2C1195.0 770.9 1197.2 789.8 1199.4 794.1C1200.4 795.4 1201.4 796.8 1202.4 797.0C1203.6 796.3 1204.9 787.5 1206.2 786.8C1207.8 787.4 1209.5 793.4 1211.2 795.6C1213.4 798.1 1215.6 801.0 1217.9 801.4C1221.0 798.9 1224.1 767.9 1227.2 764.3C1228.2 763.8 1229.2 763.4 1230.2 763.4C1231.1 763.6 1232.1 766.1 1233.1 766.3C1234.6 765.9 1236.0 760.0 1237.5 759.6C1238.9 759.9 1240.4 762.9 1241.9 764.8C1243.3 766.8 1244.8 770.9 1246.3 771.3C1247.7 770.5 1249.2 762.6 1250.6 759.0C1253.1 753.3 1255.5 744.8 1258.0 743.8C1261.1 746.4 1264.2 779.8 1267.3 782.4C1268.6 781.9 1269.9 775.6 1271.1 775.1C1272.1 775.1 1273.1 775.1 1274.1 775.1C1275.0 774.8 1276.0 771.0 1277.0 770.7C1278.0 771.0 1278.9 773.2 1279.9 775.1C1281.4 778.6 1282.8 787.1 1284.3 791.2C1286.7 797.2 1289.2 801.1 1291.6 805.2C1293.8 808.7 1295.9 814.0 1298.0 814.6C1299.8 814.1 1301.6 808.3 1303.3 807.9C1304.8 808.1 1306.2 810.9 1307.7 811.1C1308.7 811.0 1309.7 810.2 1310.6 809.3C1311.4 808.2 1312.2 802.8 1313.0 802.3C1313.6 802.4 1314.3 804.2 1315.0 804.3C1316.5 803.2 1317.9 790.4 1319.4 786.8C1320.4 784.8 1321.4 784.1 1322.3 782.4C1324.8 777.5 1327.2 763.8 1329.6 762.5C1330.3 762.6 1331.0 762.9 1331.7 763.4C1333.0 765.8 1334.2 783.0 1335.5 788.3C1336.5 791.5 1337.4 795.1 1338.4 795.6C1339.9 795.2 1341.3 790.9 1342.8 790.6C1343.8 790.8 1344.8 793.3 1345.7 793.5C1347.2 793.4 1348.7 791.3 1350.1 791.2C1351.1 791.6 1352.1 794.6 1353.0 797.0C1354.5 801.4 1356.0 812.0 1357.4 816.0C1358.9 819.3 1360.4 820.6 1361.8 823.4C1363.8 827.2 1365.7 832.4 1367.7 836.5C1370.3 842.0 1372.9 851.0 1375.6 852.0C1377.8 851.1 1380.1 842.9 1382.3 838.0C1384.1 834.1 1385.8 826.5 1387.6 825.7C1389.2 826.2 1390.9 833.1 1392.5 833.6C1394.0 832.7 1395.5 824.0 1396.9 819.8C1399.6 812.8 1402.2 802.1 1404.8 800.8C1405.6 801.1 1406.4 802.7 1407.2 804.3C1409.4 810.8 1411.7 840.7 1413.9 843.3C1417.0 839.9 1420.1 798.0 1423.3 792.6C1424.2 791.9 1425.2 791.9 1426.2 791.2C1427.7 789.6 1429.1 781.6 1430.6 780.9C1432.8 782.2 1435.1 798.7 1437.3 800.0C1439.0 799.1 1440.6 792.6 1442.3 786.8C1444.2 778.4 1446.2 751.8 1448.1 747.9C1448.9 747.3 1449.7 746.8 1450.5 746.7C1451.6 748.5 1452.8 764.1 1454.0 773.6C1455.4 785.9 1456.9 806.8 1458.4 813.1C1459.3 816.0 1460.3 818.6 1461.3 819.0C1463.7 816.0 1466.2 777.2 1468.6 774.2C1469.6 774.5 1470.6 776.1 1471.5 778.0C1473.0 782.7 1474.5 805.1 1475.9 811.7C1476.9 815.0 1477.9 818.5 1478.9 819.0C1480.0 818.8 1481.2 817.5 1482.4 816.0C1484.8 809.8 1487.2 765.5 1489.7 761.9C1491.9 764.7 1494.2 797.0 1496.4 804.3C1497.9 807.8 1499.3 811.2 1500.8 811.7C1501.8 811.3 1502.7 808.5 1503.7 805.8C1506.2 796.6 1508.6 756.1 1511.0 752.6C1513.5 756.7 1515.9 803.5 1518.3 814.6C1519.3 817.9 1520.3 821.4 1521.3 821.9C1522.3 821.5 1523.2 818.7 1524.2 816.0C1526.9 805.1 1529.7 752.4 1532.4 747.9C1533.3 748.0 1534.1 749.0 1535.0 750.2C1536.3 753.8 1537.6 776.3 1538.8 780.9C1541.3 786.6 1543.7 790.5 1546.1 791.2C1548.9 788.3 1551.6 751.6 1554.3 748.8C1555.0 748.8 1555.7 749.2 1556.4 749.6C1559.3 754.1 1562.2 786.8 1565.2 792.6C1566.6 794.4 1568.1 795.9 1569.5 796.1C1572.5 793.8 1575.4 768.6 1578.3 761.3C1579.6 758.8 1580.9 755.9 1582.1 755.5C1583.0 755.7 1583.9 757.0 1584.8 758.4C1586.3 762.4 1587.9 781.3 1589.4 785.3C1590.1 786.4 1590.8 786.6 1591.5 787.7C1593.0 790.5 1594.4 801.3 1595.9 802.3C1597.3 801.9 1598.8 799.4 1600.3 797.0C1601.2 795.1 1602.2 790.0 1603.2 788.8C1604.7 787.7 1606.1 787.6 1607.6 786.8C1610.3 785.0 1613.0 780.0 1615.8 779.5C1616.8 779.5 1617.7 780.3 1618.7 780.4C1619.1 780.0 1619.6 776.7 1620.0 775.1C1621.5 769.9 1622.9 762.3 1624.4 761.3C1626.0 762.1 1627.7 772.3 1629.4 773.0C1630.3 772.8 1631.3 771.4 1632.3 770.1C1634.5 766.3 1636.8 751.5 1639.0 750.2C1640.0 750.7 1641.0 754.3 1641.9 757.5C1644.4 768.3 1646.8 809.0 1649.3 815.2C1650.0 816.0 1650.8 816.8 1651.6 816.9C1652.8 816.5 1653.9 811.5 1655.1 811.1C1656.3 811.5 1657.4 814.9 1658.6 817.5C1660.9 823.4 1663.1 836.8 1665.3 842.4C1667.6 846.9 1669.8 848.2 1672.1 852.6C1673.4 855.7 1674.8 864.1 1676.2 864.9C1677.7 864.2 1679.3 854.8 1680.9 854.1C1682.2 855.0 1683.6 866.4 1685.0 867.2C1688.5 865.1 1692.0 842.6 1695.5 835.1C1697.1 832.0 1698.8 831.1 1700.5 827.7C1702.1 823.5 1703.8 810.0 1705.4 807.3C1707.7 805.2 1709.9 803.7 1712.2 803.5C1714.4 804.9 1716.6 823.4 1718.9 824.8C1721.0 822.9 1723.2 798.3 1725.3 796.4C1726.5 796.7 1727.7 799.7 1728.8 800.0C1730.6 799.7 1732.3 797.5 1734.1 795.6C1735.4 793.9 1736.6 789.3 1737.9 788.8C1739.6 789.3 1741.2 792.4 1742.9 795.6C1745.8 803.6 1748.7 839.3 1751.7 843.8C1753.1 844.6 1754.6 845.2 1756.0 845.3C1759.5 841.1 1762.9 794.7 1766.3 782.4C1767.7 778.3 1769.2 774.2 1770.7 773.0C1771.6 772.6 1772.6 772.2 1773.6 772.2C1775.5 773.8 1777.5 790.3 1779.4 797.0C1780.7 801.0 1782.0 806.6 1783.3 807.3C1785.2 806.1 1787.2 796.9 1789.1 789.7C1791.7 778.7 1794.4 752.6 1797.0 745.8C1797.8 744.5 1798.6 743.1 1799.3 742.9C1800.2 743.1 1801.1 744.4 1802.0 745.8C1805.7 757.3 1809.4 835.9 1813.1 842.4C1814.1 842.1 1815.0 840.0 1816.0 838.0C1818.9 828.2 1821.9 778.9 1824.8 770.7C1825.8 769.3 1826.7 768.0 1827.7 767.8C1831.1 770.9 1834.6 797.7 1838.0 814.6C1839.9 824.6 1841.9 841.7 1843.8 846.8C1844.8 848.4 1845.8 850.0 1846.7 850.3C1849.7 846.9 1852.6 803.3 1855.5 800.0C1856.5 800.1 1857.5 800.7 1858.4 801.4C1860.4 803.5 1862.3 814.3 1864.3 815.2C1865.8 815.0 1867.2 814.2 1868.7 813.1C1871.1 809.4 1873.6 782.5 1876.0 780.4C1877.0 780.5 1877.9 781.4 1878.9 782.4C1880.4 784.6 1881.8 792.3 1883.3 795.6C1886.2 801.3 1889.2 807.9 1892.1 808.7C1892.9 808.5 1893.6 806.0 1894.4 805.8C1896.1 806.4 1897.7 814.5 1899.4 815.2C1899.9 815.2 1900.4 815.2 1900.9 815.2C1903.3 813.7 1905.7 796.2 1908.2 792.6C1909.6 791.2 1911.1 791.1 1912.6 789.7C1914.3 787.5 1916.1 778.8 1917.8 778.0C1920.3 779.2 1922.7 787.6 1925.1 795.6C1927.3 804.2 1929.4 829.3 1931.6 835.1C1932.9 837.2 1934.1 839.2 1935.4 839.4C1937.0 838.2 1938.7 824.6 1940.4 820.4C1941.6 817.9 1942.9 817.0 1944.2 814.6C1946.5 809.3 1948.8 793.6 1951.2 792.1C1952.0 792.2 1952.7 793.2 1953.5 794.1C1956.0 798.2 1958.4 813.5 1960.8 819.0C1961.8 820.8 1962.8 821.3 1963.8 823.4C1965.4 827.9 1967.1 846.6 1968.7 848.2C1970.3 847.6 1971.9 843.6 1973.4 839.4C1975.4 832.6 1977.3 809.6 1979.3 802.9C1980.7 799.2 1982.2 795.5 1983.7 795.0C1984.8 795.5 1986.0 799.7 1987.2 802.9C1990.8 814.4 1994.4 841.2 1998.0 852.6C2000.2 858.6 2002.5 865.7 2004.7 866.7C2007.2 864.6 2009.6 838.5 2012.0 836.5C2012.8 836.5 2013.6 836.5 2014.4 836.5C2017.5 839.7 2020.6 871.5 2023.7 884.8C2025.2 890.6 2026.7 897.2 2028.1 900.0C2029.4 901.8 2030.7 903.6 2031.9 903.8C2033.1 903.4 2034.3 900.8 2035.4 898.0C2037.9 888.3 2040.3 833.8 2042.8 829.2C2043.7 829.3 2044.7 829.8 2045.7 830.7C2046.4 831.8 2047.1 839.7 2047.7 840.3C2048.5 840.3 2049.3 839.5 2050.1 839.4C2053.0 842.2 2055.9 878.5 2058.9 881.3C2062.3 876.6 2065.7 821.4 2069.1 811.7C2070.6 809.1 2072.0 806.7 2073.5 806.4C2074.5 806.5 2075.4 807.6 2076.4 808.7C2079.3 815.0 2082.3 855.7 2085.2 859.1C2086.2 859.1 2087.1 859.1 2088.1 859.1C2089.6 857.8 2091.0 843.4 2092.5 840.3C2093.5 838.9 2094.4 837.6 2095.4 837.4C2096.9 837.5 2098.3 838.1 2099.8 838.9C2100.8 839.5 2101.8 842.1 2102.7 842.4C2104.2 842.2 2105.7 840.9 2107.1 840.3C2108.6 839.8 2110.1 839.0 2111.5 838.9C2114.0 838.9 2116.4 839.4 2118.8 839.4C2120.3 838.9 2121.8 831.3 2123.2 830.7C2124.2 830.9 2125.2 833.4 2126.1 833.6C2127.6 832.9 2129.1 826.2 2130.5 823.4C2132.5 819.9 2134.4 815.2 2136.4 814.6C2138.8 814.7 2141.3 816.5 2143.7 816.6C2145.6 815.8 2147.6 807.3 2149.5 804.3C2150.7 802.8 2151.9 800.8 2153.1 800.5C2154.3 801.1 2155.6 808.2 2156.9 808.7C2157.8 808.7 2158.8 808.2 2159.8 808.1C2161.7 809.4 2163.7 825.1 2165.6 826.3C2168.1 824.9 2170.5 807.5 2173.0 805.8C2174.9 805.5 2176.9 805.6 2178.8 805.2C2180.8 804.3 2182.7 796.2 2184.7 795.6C2187.8 797.3 2190.9 819.3 2194.0 821.0C2196.0 819.7 2198.0 809.7 2200.0 801.4C2201.0 796.8 2202.0 786.9 2202.9 783.9C2204.9 779.6 2206.8 776.5 2208.8 776.0C2209.8 777.0 2210.7 785.0 2211.7 791.2C2213.2 801.6 2214.6 821.7 2216.1 832.1C2218.0 844.4 2220.0 852.2 2221.9 861.4C2223.4 868.1 2224.9 878.4 2226.3 880.4C2227.1 880.9 2227.9 881.2 2228.7 881.3C2231.3 879.6 2233.9 858.1 2236.6 856.4C2238.0 857.0 2239.5 865.2 2241.0 865.8C2241.9 865.5 2242.9 861.7 2243.9 861.4C2245.3 862.1 2246.8 870.9 2248.3 871.6C2249.7 871.1 2251.2 867.8 2252.7 864.3C2253.6 861.3 2254.6 854.0 2255.6 849.7C2258.0 839.7 2260.5 825.7 2262.9 823.9C2263.9 824.0 2264.9 824.3 2265.8 824.8C2266.5 825.6 2267.2 831.6 2267.9 832.1C2268.7 832.1 2269.4 832.1 2270.2 832.1C2272.7 831.0 2275.1 816.3 2277.5 815.2C2278.5 815.3 2279.5 816.8 2280.5 816.9C2282.9 816.7 2285.3 813.4 2287.8 813.1C2289.7 813.8 2291.7 821.4 2293.6 823.9C2295.1 825.6 2296.5 827.5 2298.0 827.7C2299.5 827.4 2300.9 823.1 2302.4 822.8C2303.4 822.8 2304.3 823.1 2305.3 823.4C2307.8 824.9 2310.2 835.6 2312.6 836.5C2313.6 836.5 2314.6 836.0 2315.6 835.6C2317.0 834.9 2318.5 831.8 2320.0 831.6C2320.9 831.6 2321.9 832.9 2322.9 833.0C2324.0 832.9 2325.2 831.6 2326.4 831.6C2327.4 831.7 2328.3 833.5 2329.3 833.6C2333.7 831.4 2338.1 802.7 2342.5 800.5C2343.5 800.6 2344.4 801.4 2345.4 801.4C2347.2 801.3 2348.9 799.5 2350.7 799.4C2352.1 800.3 2353.6 812.2 2355.1 813.1C2356.0 813.0 2357.0 812.1 2358.0 811.1C2358.8 810.0 2359.5 806.3 2360.3 805.2C2361.5 804.0 2362.7 804.0 2363.8 802.9C2364.8 801.7 2365.8 797.4 2366.8 797.0C2368.0 797.3 2369.3 799.3 2370.6 801.4C2372.2 805.2 2373.9 815.0 2375.5 823.4C2377.0 831.3 2378.5 846.6 2379.9 851.2C2380.9 853.3 2381.9 853.8 2382.9 855.5C2384.3 858.3 2385.8 865.1 2387.2 865.8C2388.2 865.6 2389.2 864.7 2390.2 863.7C2391.9 860.9 2393.7 846.4 2395.4 844.4C2396.1 844.1 2396.8 844.1 2397.5 843.8C2398.5 843.2 2399.4 839.7 2400.4 839.4C2401.9 840.1 2403.3 848.5 2404.8 849.1C2405.8 848.9 2406.7 847.0 2407.7 845.3C2410.2 839.7 2412.6 817.2 2415.0 814.6C2416.3 814.3 2417.6 814.0 2418.8 814.0C2420.5 815.0 2422.2 828.2 2423.8 829.2C2425.3 828.6 2426.7 823.8 2428.2 820.4C2430.6 814.2 2433.1 799.8 2435.5 797.6C2436.5 797.3 2437.5 797.1 2438.4 797.0C2439.1 797.3 2439.8 800.3 2440.5 800.5C2441.8 800.4 2443.0 798.6 2444.3 798.5C2446.2 799.9 2448.2 811.5 2450.1 819.0C2452.1 826.9 2454.0 841.2 2456.0 845.3C2457.0 846.7 2457.9 847.7 2458.9 848.2C2460.7 849.0 2462.4 849.6 2464.2 849.7C2465.4 849.1 2466.5 841.0 2467.7 840.3C2470.1 841.3 2472.6 851.9 2475.0 855.5C2477.5 858.7 2479.9 862.4 2482.3 862.9C2484.3 862.4 2486.2 856.0 2488.2 855.5C2489.4 855.6 2490.5 856.2 2491.7 857.0C2493.0 858.4 2494.2 863.2 2495.5 867.2C2497.7 875.1 2500.0 895.1 2502.2 897.1C2502.9 896.8 2503.6 894.8 2504.3 893.0C2506.2 885.9 2508.2 855.6 2510.1 852.6C2512.1 852.3 2514.0 852.1 2516.0 852.0C2517.6 852.5 2519.3 858.9 2520.9 859.3C2522.2 858.9 2523.5 855.6 2524.8 852.6C2527.5 844.5 2530.2 814.9 2532.9 812.2C2533.6 812.4 2534.3 813.5 2535.0 814.6C2536.9 819.8 2538.9 850.1 2540.8 852.6C2542.3 852.1 2543.8 848.5 2545.2 845.3C2548.2 837.3 2551.1 809.0 2554.0 806.4C2555.0 806.9 2556.0 813.2 2556.9 814.6C2558.4 816.1 2559.9 816.0 2561.3 817.5C2562.3 819.0 2563.3 824.2 2564.2 826.3C2565.5 828.6 2566.8 831.2 2568.1 831.6C2569.7 830.9 2571.4 822.5 2573.0 821.9C2575.0 823.1 2576.9 832.3 2578.9 839.4C2580.8 847.5 2582.8 868.7 2584.7 870.8C2585.7 870.7 2586.7 870.1 2587.7 869.6C2590.8 867.0 2593.9 854.3 2597.0 853.2C2598.3 853.5 2599.6 855.5 2600.8 857.0C2603.5 860.6 2606.1 870.7 2608.7 871.6C2610.0 870.6 2611.3 862.4 2612.5 855.5C2614.3 844.3 2616.0 810.2 2617.8 806.4C2618.7 806.1 2619.5 805.8 2620.4 805.8C2621.7 808.0 2623.0 836.4 2624.2 838.9C2625.7 839.2 2627.2 839.2 2628.6 839.4C2630.4 839.9 2632.1 842.2 2633.9 842.4C2635.5 841.1 2637.2 824.6 2638.9 823.4C2639.6 823.6 2640.4 824.9 2641.2 826.3C2642.9 831.1 2644.5 856.1 2646.2 859.9C2647.1 861.0 2648.1 861.8 2649.1 862.0C2650.3 861.5 2651.4 858.0 2652.6 855.5C2655.3 849.0 2658.1 832.3 2660.8 830.7C2661.8 831.1 2662.7 833.8 2663.7 836.5C2665.7 844.6 2667.6 878.1 2669.6 886.3C2670.3 888.3 2670.9 890.4 2671.6 890.6C2674.4 887.1 2677.1 844.3 2679.8 837.4C2680.6 836.3 2681.4 835.2 2682.2 835.1C2683.3 835.8 2684.5 842.1 2685.7 846.8C2687.6 855.6 2689.6 879.0 2691.5 881.3C2692.5 880.9 2693.5 878.3 2694.4 876.0C2696.9 868.5 2699.3 841.3 2701.8 836.5C2702.4 835.8 2703.1 835.2 2703.8 835.1C2705.1 836.4 2706.3 847.7 2707.6 855.5C2709.1 865.3 2710.5 887.8 2712.0 890.1C2713.0 889.3 2713.9 883.4 2714.9 878.9C2716.9 869.0 2718.8 842.1 2720.8 839.4C2721.7 839.4 2722.7 839.4 2723.7 839.4C2725.5 839.3 2727.2 836.7 2729.0 836.5C2730.3 838.1 2731.7 859.2 2733.1 860.8C2735.0 860.4 2737.0 856.3 2738.9 854.1" fill="none" stroke="#de4675" stroke-width="2" stroke-linejoin="round" stroke-linecap="round"/>
<path d="M470.2 843.8C471.7 847.7 473.2 853.1 474.6 855.5C475.6 856.8 476.6 857.0 477.6 858.5C479.0 861.9 480.5 873.1 481.9 881.9C483.9 894.4 485.8 922.3 487.8 925.2C488.3 925.1 488.8 924.7 489.3 924.3C491.7 921.4 494.1 907.1 496.6 905.9C499.0 907.2 501.4 920.0 503.9 925.8C504.9 927.9 505.8 928.9 506.8 931.6C508.8 939.0 510.7 971.2 512.7 974.0C513.6 973.9 514.6 972.7 515.6 972.6C517.7 973.6 519.9 987.6 522.0 988.7C524.0 987.0 525.9 965.4 527.9 963.8C530.4 966.3 532.9 999.3 535.5 1001.8C536.5 1001.6 537.4 999.1 538.4 998.9C540.6 1000.4 542.7 1020.2 544.8 1021.7C545.8 1021.7 546.8 1021.3 547.8 1020.8C549.7 1017.8 551.7 998.6 553.6 987.2C556.1 972.8 558.5 954.4 560.9 943.3C564.3 929.7 567.8 918.4 571.2 911.1C573.1 907.7 575.1 903.5 577.0 902.9C578.2 903.7 579.4 909.2 580.5 914.1C581.8 920.4 583.1 940.0 584.3 941.8C587.3 937.1 590.2 874.9 593.1 870.2C594.6 870.5 596.0 875.1 597.5 875.4C598.7 875.2 599.8 872.7 601.0 872.5C603.3 874.1 605.5 885.6 607.7 896.5C609.2 905.1 610.7 927.6 612.1 934.5C613.1 937.9 614.1 941.4 615.1 941.8C616.0 941.8 617.0 941.0 618.0 941.0C619.9 942.7 621.9 956.2 623.8 966.7C626.8 984.8 629.7 1029.7 632.6 1039.9C633.6 1041.9 634.6 1042.4 635.5 1044.2C638.8 1051.9 642.0 1079.5 645.2 1082.0C649.8 1074.7 654.4 1005.1 658.9 972.6C661.4 956.1 663.8 933.8 666.3 927.2C667.7 924.8 669.2 922.6 670.6 922.2C672.8 923.6 674.9 940.5 677.1 941.8C679.8 938.9 682.5 904.7 685.3 898.0C687.0 895.1 688.8 892.5 690.5 892.1C692.7 894.2 694.8 912.4 697.0 922.8C701.1 942.9 705.2 980.2 709.3 984.3C711.5 982.1 713.8 962.1 716.0 952.1C718.4 941.6 720.9 931.8 723.3 922.8C725.7 914.2 728.2 900.4 730.6 898.8C732.6 899.7 734.5 910.3 736.5 911.1C737.5 910.8 738.4 907.0 739.4 906.7C741.1 906.9 742.7 909.5 744.4 909.7C748.1 906.9 751.8 871.4 755.5 868.7C759.4 871.7 763.3 905.6 767.2 914.1C768.4 916.0 769.5 918.2 770.7 918.4C772.3 918.1 773.8 913.0 775.4 912.6C778.5 913.3 781.6 923.0 784.8 923.7C788.0 922.4 791.2 905.1 794.4 903.8C796.8 905.0 799.3 921.0 801.7 922.2C803.4 922.2 805.0 921.4 806.7 921.4C810.6 923.1 814.5 945.9 818.4 947.7C820.3 947.0 822.3 940.9 824.2 937.5C826.2 934.0 828.1 927.9 830.1 927.2C832.5 928.4 835.0 944.4 837.4 945.7C838.7 945.3 839.9 940.7 841.2 940.4C843.1 941.5 844.9 955.4 846.8 956.5C848.5 956.3 850.3 955.0 852.0 953.6C855.0 949.4 857.9 930.8 860.8 922.8C864.2 914.6 867.6 904.3 871.1 902.9C873.0 903.1 875.0 904.2 876.9 905.3C879.8 907.3 882.8 914.8 885.7 915.5C886.7 915.2 887.6 911.4 888.6 911.1C889.9 911.6 891.1 917.1 892.4 917.6C894.1 917.2 895.7 914.8 897.4 912.6C900.5 907.5 903.6 889.4 906.8 887.7C910.0 889.4 913.2 910.9 916.4 912.6C917.6 912.4 918.7 909.9 919.9 909.7C921.7 910.1 923.4 915.2 925.2 916.4C928.1 917.9 931.0 919.1 934.0 919.3C935.9 918.9 937.9 913.0 939.8 912.6C940.8 912.8 941.8 915.3 942.7 915.5C944.7 915.2 946.6 913.0 948.6 911.1C952.3 906.6 956.0 890.6 959.7 889.2C961.9 889.8 964.0 898.2 966.1 898.8C968.9 897.4 971.6 878.9 974.3 877.5C975.5 877.9 976.7 882.9 977.8 883.3C979.3 883.1 980.8 880.6 982.2 880.4C983.7 880.9 985.2 884.7 986.6 888.3C988.6 894.5 990.5 911.4 992.5 919.9C995.9 933.2 999.3 949.9 1002.7 952.1C1005.6 951.9 1008.6 949.4 1011.5 949.2C1012.5 949.3 1013.4 951.3 1014.4 951.5C1016.9 949.7 1019.3 926.9 1021.7 925.2C1023.2 925.7 1024.7 932.5 1026.1 933.1C1028.4 932.6 1030.6 929.8 1032.8 926.6C1035.2 921.8 1037.6 907.5 1040.0 898.0C1042.0 890.2 1043.9 884.0 1045.9 874.6C1047.8 864.1 1049.8 841.9 1051.7 835.1C1052.7 832.6 1053.7 830.1 1054.6 829.8C1056.3 830.1 1057.9 834.7 1059.6 835.1C1061.1 834.3 1062.5 824.1 1064.0 823.4C1065.3 824.1 1066.5 830.7 1067.8 835.1C1069.5 841.1 1071.1 854.2 1072.8 855.5C1074.5 855.5 1076.3 855.5 1078.0 855.5C1079.5 855.3 1081.0 852.8 1082.4 852.6C1084.2 853.7 1085.9 867.6 1087.7 868.7C1090.1 867.9 1092.6 857.8 1095.0 857.0C1095.9 857.3 1096.8 859.5 1097.6 861.4C1099.9 867.1 1102.1 881.9 1104.4 887.7C1105.5 890.2 1106.7 891.1 1107.9 893.6C1110.4 900.0 1112.9 915.3 1115.5 922.2C1118.1 928.5 1120.7 935.9 1123.4 936.9C1125.3 936.1 1127.3 926.0 1129.2 925.2C1130.4 925.3 1131.6 927.1 1132.7 927.2C1134.2 925.8 1135.7 907.3 1137.1 905.9C1137.9 905.9 1138.7 905.9 1139.5 905.9C1140.4 905.4 1141.4 899.9 1142.4 899.4C1143.9 899.7 1145.3 903.5 1146.8 903.8C1148.3 903.4 1149.7 900.6 1151.2 898.0C1152.9 894.2 1154.7 881.6 1156.4 880.4C1157.4 880.7 1158.4 883.6 1159.4 884.8C1161.0 886.6 1162.7 888.9 1164.3 889.2C1165.5 888.7 1166.7 882.4 1167.9 881.9C1168.9 882.3 1170.0 887.9 1171.1 888.3C1172.2 887.9 1173.4 882.8 1174.6 882.5C1177.2 883.5 1179.8 897.7 1182.5 898.8C1184.0 897.7 1185.6 883.5 1187.2 882.5C1188.0 882.8 1188.9 887.9 1189.8 888.3C1191.1 888.1 1192.3 885.9 1193.6 885.7C1195.5 887.3 1197.5 908.9 1199.4 910.5C1201.7 910.2 1203.9 905.1 1206.2 904.7C1207.8 905.3 1209.5 912.6 1211.2 914.1C1213.4 915.3 1215.6 916.2 1217.9 916.4C1221.0 913.6 1224.1 876.8 1227.2 874.0C1228.2 874.1 1229.2 874.8 1230.2 875.4C1231.4 876.6 1232.7 881.4 1234.0 881.9C1235.8 881.1 1237.7 870.4 1239.5 869.6C1241.8 870.4 1244.0 880.5 1246.3 881.3C1247.2 881.1 1248.2 880.0 1249.2 878.9C1252.1 874.9 1255.0 858.5 1258.0 857.0C1261.2 859.6 1264.4 893.9 1267.6 896.5C1268.8 895.7 1270.0 886.4 1271.1 884.8C1272.1 884.0 1273.1 884.0 1274.1 883.3C1275.0 882.6 1276.0 880.1 1277.0 879.8C1278.0 880.2 1278.9 882.7 1279.9 884.8C1283.3 894.2 1286.7 928.5 1290.1 931.6C1291.8 931.5 1293.5 929.4 1295.1 929.3C1296.1 929.9 1297.1 937.5 1298.0 938.0C1299.8 937.7 1301.6 933.4 1303.3 933.1C1304.8 933.4 1306.2 937.2 1307.7 937.5C1309.2 937.2 1310.6 934.2 1312.1 933.9C1313.1 934.1 1314.0 935.9 1315.0 936.0C1316.5 933.9 1317.9 910.1 1319.4 905.3C1320.4 903.1 1321.4 902.7 1322.3 900.9C1324.8 895.6 1327.2 879.9 1329.6 878.4C1330.3 878.4 1331.0 879.0 1331.7 879.5C1333.6 882.6 1335.6 900.0 1337.5 904.7C1338.8 907.0 1340.1 907.8 1341.3 909.7C1342.8 912.0 1344.3 917.0 1345.7 917.6C1347.2 917.2 1348.7 912.9 1350.1 912.6C1351.1 912.7 1352.1 913.3 1353.0 914.1C1354.5 916.0 1356.0 926.7 1357.4 928.7C1358.4 929.4 1359.4 929.4 1360.4 930.1C1361.8 932.2 1363.3 943.0 1364.8 946.2C1366.2 948.7 1367.7 949.5 1369.1 951.5C1370.9 954.1 1372.7 960.2 1374.4 960.9C1376.6 959.9 1378.7 949.9 1380.8 946.2C1383.1 942.9 1385.3 938.9 1387.6 938.3C1389.4 939.3 1391.3 951.7 1393.1 952.7C1394.9 951.1 1396.6 934.3 1398.4 928.7C1399.9 924.7 1401.3 919.9 1402.8 919.3C1403.8 919.5 1404.7 920.4 1405.7 921.4C1408.6 927.2 1411.6 966.4 1414.5 969.6C1417.4 965.1 1420.3 905.5 1423.3 900.9C1424.2 901.6 1425.2 909.5 1426.2 911.1C1427.7 912.7 1429.1 912.8 1430.6 914.1C1431.6 915.1 1432.5 918.2 1433.5 918.4C1434.8 918.3 1436.0 917.7 1437.3 917.0C1440.7 912.7 1444.1 880.9 1447.5 878.4C1448.5 878.8 1449.5 881.5 1450.5 884.8C1451.6 891.2 1452.8 922.9 1454.0 928.7C1455.0 931.4 1455.9 933.6 1456.9 933.9C1459.8 931.6 1462.8 905.1 1465.7 898.0C1466.7 896.1 1467.6 893.9 1468.6 893.6C1470.1 895.5 1471.5 914.7 1473.0 922.8C1474.0 927.8 1475.0 935.1 1475.9 936.0C1476.9 935.9 1477.9 935.6 1478.9 935.1C1480.3 933.6 1481.8 927.6 1483.2 921.4C1484.7 913.6 1486.2 888.5 1487.6 884.8C1488.4 884.0 1489.2 883.4 1490.0 883.3C1491.1 885.2 1492.3 903.5 1493.5 911.1C1494.7 918.0 1495.8 927.5 1497.0 928.7C1499.7 926.0 1502.5 892.8 1505.2 887.7C1506.6 886.3 1508.1 885.0 1509.6 884.8C1510.3 884.9 1510.9 885.5 1511.6 886.3C1512.9 890.7 1514.2 930.8 1515.4 933.9C1516.4 933.9 1517.4 933.5 1518.3 933.1C1523.0 926.4 1527.7 864.0 1532.4 859.1C1533.3 859.6 1534.1 863.7 1535.0 867.2C1536.5 874.3 1538.0 896.3 1539.4 899.4C1541.2 900.8 1542.9 901.6 1544.7 901.8C1547.9 898.9 1551.1 861.9 1554.3 859.1C1555.3 859.5 1556.3 862.9 1557.3 865.8C1559.4 873.4 1561.6 897.1 1563.7 900.9C1565.8 902.5 1568.0 903.6 1570.1 903.8C1571.6 902.1 1573.1 882.1 1574.5 877.5C1575.8 874.6 1577.1 873.7 1578.3 871.6C1580.1 868.7 1581.8 862.6 1583.6 862.0C1585.3 863.5 1586.9 880.9 1588.6 884.8C1589.5 886.4 1590.5 886.9 1591.5 888.3C1594.6 893.8 1597.7 911.0 1600.9 912.6C1604.1 911.0 1607.3 898.5 1610.5 889.2C1612.0 884.6 1613.4 874.6 1614.9 873.1C1615.9 872.8 1616.8 872.8 1617.8 872.5C1618.5 872.2 1619.3 871.1 1620.0 870.2C1621.5 867.8 1622.9 860.6 1624.4 859.9C1626.0 861.0 1627.7 874.9 1629.4 876.0C1630.3 876.0 1631.3 875.7 1632.3 875.4C1634.0 874.2 1635.8 865.1 1637.6 863.7C1638.7 863.3 1639.9 862.9 1641.1 862.9C1641.8 863.1 1642.6 865.2 1643.4 867.2C1645.4 874.9 1647.3 913.1 1649.3 916.4C1650.0 916.4 1650.8 916.4 1651.6 916.4C1652.8 915.8 1653.9 908.2 1655.1 907.6C1656.3 908.0 1657.4 910.4 1658.6 912.6C1660.4 916.6 1662.1 925.0 1663.9 931.6C1665.8 939.1 1667.8 948.9 1669.7 955.0C1671.2 959.1 1672.7 964.6 1674.1 965.3C1674.9 965.2 1675.7 964.8 1676.5 964.4C1677.9 962.8 1679.4 952.9 1680.9 952.1C1682.2 953.0 1683.6 964.4 1685.0 965.3C1685.9 965.0 1686.9 962.7 1687.9 960.9C1690.4 955.3 1692.9 940.5 1695.5 936.0C1696.2 935.1 1696.8 934.8 1697.5 933.9C1700.5 929.6 1703.4 918.5 1706.3 914.1C1708.3 911.6 1710.2 908.6 1712.2 908.2C1713.1 908.6 1714.1 911.6 1715.1 914.1C1715.9 916.3 1716.6 921.5 1717.4 922.8C1718.1 923.6 1718.8 924.2 1719.5 924.3C1721.4 922.4 1723.4 898.4 1725.3 896.5C1726.3 896.7 1727.3 898.7 1728.3 898.8C1730.0 898.5 1731.8 896.5 1733.5 894.2C1735.0 891.6 1736.4 881.3 1737.9 880.4C1739.1 880.8 1740.2 883.7 1741.4 886.3C1742.4 888.7 1743.4 892.6 1744.3 896.5C1747.0 908.0 1749.6 936.1 1752.2 938.9C1753.0 938.8 1753.8 937.0 1754.6 936.9C1755.4 937.0 1756.1 938.8 1756.9 938.9C1757.9 938.2 1758.9 932.9 1759.8 928.7C1762.0 917.8 1764.1 890.8 1766.3 881.9C1768.5 874.9 1770.8 868.2 1773.0 867.2C1774.2 868.0 1775.4 876.1 1776.5 878.9C1777.7 881.4 1778.9 882.4 1780.0 884.8C1781.1 887.4 1782.2 894.4 1783.3 895.0C1784.4 894.7 1785.6 892.7 1786.8 890.6C1789.7 883.4 1792.6 853.5 1795.5 846.8C1796.2 845.7 1796.9 844.6 1797.6 844.4C1798.9 844.7 1800.1 846.3 1801.4 848.2C1803.3 853.7 1805.3 876.0 1807.2 890.6C1809.2 905.5 1811.1 933.8 1813.1 936.9C1814.1 936.7 1815.0 935.8 1816.0 934.5C1817.0 932.6 1818.0 926.6 1818.9 921.4C1821.2 907.8 1823.4 875.4 1825.7 867.2C1826.4 865.6 1827.0 864.0 1827.7 863.7C1830.8 865.2 1834.0 875.7 1837.1 886.3C1839.6 897.2 1842.2 929.5 1844.7 939.8C1845.4 941.9 1846.1 944.4 1846.7 944.8C1847.7 944.5 1848.7 942.5 1849.7 940.4C1851.6 933.8 1853.6 903.1 1855.5 896.5C1856.5 894.4 1857.5 892.4 1858.4 892.1C1860.9 893.4 1863.3 908.4 1865.8 911.1C1866.7 911.8 1867.7 912.5 1868.7 912.6C1869.5 912.3 1870.2 910.5 1871.0 908.8C1872.7 904.2 1874.3 888.1 1876.0 885.7C1876.7 885.2 1877.4 884.9 1878.0 884.8C1881.0 886.1 1883.9 895.1 1886.8 903.8C1887.6 906.5 1888.4 913.9 1889.2 914.6C1890.6 914.4 1892.1 911.9 1893.6 911.7C1895.5 912.9 1897.5 927.9 1899.4 930.1C1900.1 930.6 1900.8 931.0 1901.5 931.0C1903.7 928.3 1905.9 900.9 1908.2 890.6C1910.1 882.8 1912.1 876.1 1914.0 871.6C1915.3 869.2 1916.6 866.2 1917.8 865.8C1920.0 867.0 1922.1 876.8 1924.3 884.8C1927.0 896.6 1929.7 923.8 1932.5 933.9C1933.8 938.0 1935.2 942.7 1936.6 943.3C1938.1 941.5 1939.7 922.9 1941.2 915.5C1943.9 904.3 1946.5 890.1 1949.1 888.3C1950.1 888.3 1951.1 888.3 1952.1 888.3C1954.0 890.2 1956.0 913.8 1957.9 917.0C1958.9 917.7 1959.9 917.7 1960.8 918.4C1962.1 920.4 1963.4 927.4 1964.6 934.5C1965.5 940.4 1966.4 954.7 1967.3 959.4C1968.1 962.6 1968.8 965.7 1969.6 966.1C1971.1 965.0 1972.5 956.3 1974.0 949.2C1976.4 935.2 1978.9 899.0 1981.3 889.2C1982.3 886.5 1983.3 883.7 1984.2 883.3C1987.2 886.0 1990.1 909.1 1993.0 922.8C1995.0 932.2 1996.9 941.7 1998.9 952.1C2000.3 960.1 2001.8 975.0 2003.3 977.8C2003.9 978.4 2004.6 978.9 2005.3 979.0C2007.6 975.5 2009.8 934.6 2012.0 925.8C2013.0 923.1 2014.0 920.3 2015.0 919.9C2015.7 920.2 2016.5 922.3 2017.3 924.3C2019.9 934.2 2022.6 974.2 2025.2 987.2C2026.7 993.0 2028.1 998.5 2029.6 1000.4C2030.6 1001.1 2031.5 1001.7 2032.5 1001.8C2033.5 1001.3 2034.5 997.9 2035.4 994.5C2037.9 982.0 2040.3 922.8 2042.8 915.5C2043.5 914.8 2044.3 914.2 2045.1 914.1C2046.0 914.3 2046.9 918.2 2047.7 918.4C2048.5 918.2 2049.3 914.9 2050.1 914.6C2050.9 914.8 2051.6 915.8 2052.4 917.0C2054.8 923.4 2057.1 965.6 2059.4 969.1C2063.6 964.4 2067.8 906.9 2072.0 899.4C2073.3 898.4 2074.6 897.5 2075.8 897.4C2078.9 900.5 2082.1 938.4 2085.2 944.8C2086.0 945.7 2086.7 946.7 2087.5 946.8C2089.2 946.2 2090.8 938.2 2092.5 936.9C2093.5 936.4 2094.4 936.1 2095.4 936.0C2097.7 936.5 2099.9 942.8 2102.2 943.3C2105.3 942.0 2108.4 925.6 2111.5 924.3C2112.5 924.6 2113.5 927.8 2114.4 928.7C2116.6 930.2 2118.7 931.4 2120.9 931.6C2121.7 931.3 2122.4 927.5 2123.2 927.2C2124.2 927.3 2125.2 928.0 2126.1 928.1C2128.6 926.2 2131.0 906.4 2133.5 899.4C2134.9 895.8 2136.4 891.8 2137.8 890.6C2139.8 889.8 2141.7 890.0 2143.7 889.2C2146.1 886.9 2148.6 870.2 2151.0 867.2C2152.0 866.5 2153.0 865.9 2153.9 865.8C2154.9 866.2 2155.9 871.2 2156.9 871.6C2158.3 871.6 2159.8 871.1 2161.3 871.0C2162.9 872.2 2164.6 887.2 2166.2 888.3C2168.2 887.0 2170.1 870.7 2172.1 868.1C2174.5 866.3 2177.0 866.4 2179.4 864.9C2181.1 863.6 2182.9 859.4 2184.7 859.1C2187.8 861.3 2190.9 889.9 2194.0 892.1C2196.0 890.8 2198.0 881.2 2200.0 873.1C2201.0 868.6 2202.0 859.2 2202.9 855.5C2204.9 849.8 2206.8 844.6 2208.8 843.8C2209.8 844.6 2210.7 850.4 2211.7 855.5C2213.2 865.0 2214.6 886.4 2216.1 899.4C2218.0 915.8 2220.0 933.2 2221.9 943.3C2222.9 947.6 2223.9 951.7 2224.9 953.6C2225.8 955.0 2226.8 956.3 2227.8 956.5C2228.8 955.8 2229.7 950.0 2230.7 946.2C2232.7 938.3 2234.6 921.1 2236.6 919.3C2238.0 919.8 2239.5 926.7 2241.0 927.2C2241.9 926.9 2242.9 923.1 2243.9 922.8C2245.5 923.8 2247.2 936.5 2248.9 937.5C2250.3 937.1 2251.8 935.1 2253.2 932.2C2254.0 929.7 2254.8 919.5 2255.6 915.5C2258.0 905.2 2260.5 895.0 2262.9 893.6C2263.6 893.7 2264.3 894.4 2265.0 895.0C2265.9 896.2 2266.9 900.5 2267.9 900.9C2268.7 900.8 2269.4 900.5 2270.2 900.0C2271.4 898.7 2272.6 892.0 2273.7 889.2C2275.0 886.4 2276.3 883.3 2277.5 882.5C2278.5 882.1 2279.5 881.9 2280.5 881.9C2281.4 882.1 2282.4 885.1 2283.4 885.4C2284.4 885.3 2285.3 884.0 2286.3 883.9C2288.0 884.0 2289.6 884.4 2291.3 884.8C2293.5 885.8 2295.8 891.6 2298.0 892.1C2299.7 891.6 2301.3 884.7 2303.0 884.2C2304.0 884.5 2304.9 886.8 2305.9 888.3C2308.2 892.0 2310.4 900.1 2312.6 900.9C2313.6 900.9 2314.6 900.9 2315.6 900.9C2317.0 900.6 2318.5 896.8 2320.0 896.5C2320.7 896.5 2321.5 896.5 2322.3 896.5C2323.3 896.3 2324.2 893.8 2325.2 893.6C2326.6 893.7 2328.0 894.9 2329.3 895.0C2332.0 893.4 2334.8 877.4 2337.5 870.2C2339.2 866.1 2340.8 859.8 2342.5 859.1C2343.5 859.2 2344.4 861.2 2345.4 861.4C2347.2 861.0 2348.9 855.9 2350.7 855.5C2352.1 856.6 2353.6 869.2 2355.1 871.6C2356.0 872.6 2357.0 873.5 2358.0 873.7C2358.8 873.3 2359.5 868.1 2360.3 867.2C2361.5 866.4 2362.7 866.6 2363.8 865.8C2364.8 864.7 2365.8 858.4 2366.8 857.9C2368.0 858.4 2369.3 862.2 2370.6 865.8C2372.2 871.9 2373.9 885.7 2375.5 896.5C2376.7 904.4 2377.9 918.9 2379.1 921.4C2380.0 922.2 2381.0 922.2 2382.0 922.8C2384.0 924.8 2386.1 933.8 2388.1 934.5C2390.6 932.8 2393.0 911.4 2395.4 908.8C2396.1 908.5 2396.8 908.5 2397.5 908.2C2398.5 907.4 2399.4 901.9 2400.4 901.5C2401.9 902.2 2403.3 911.9 2404.8 912.6C2405.8 912.5 2406.7 911.9 2407.7 911.1C2410.0 907.9 2412.2 886.0 2414.5 884.2C2415.6 884.2 2416.8 884.2 2418.0 884.2C2419.9 884.9 2421.9 893.8 2423.8 894.5C2426.7 892.8 2429.7 872.4 2432.6 869.6C2433.6 869.2 2434.5 869.1 2435.5 868.7C2438.0 867.2 2440.4 859.7 2442.8 859.1C2444.8 860.2 2446.7 869.3 2448.7 876.0C2451.3 886.0 2453.9 908.9 2456.6 913.5C2457.4 914.2 2458.1 914.8 2458.9 914.9C2460.4 914.7 2461.8 912.9 2463.3 911.1C2465.1 908.4 2466.8 898.3 2468.6 897.4C2469.9 897.9 2471.3 903.1 2472.7 905.3C2475.9 910.0 2479.1 916.2 2482.3 917.0C2484.8 916.4 2487.2 909.3 2489.6 908.8C2490.6 909.0 2491.6 911.0 2492.6 912.6C2495.8 919.2 2499.0 942.6 2502.2 944.8C2504.4 942.2 2506.5 910.7 2508.7 906.7C2509.6 906.0 2510.6 905.8 2511.6 905.3C2512.9 904.6 2514.1 903.1 2515.4 902.9C2517.2 903.6 2519.1 912.8 2520.9 913.5C2522.2 912.6 2523.5 906.1 2524.8 900.9C2526.7 891.5 2528.7 868.7 2530.6 861.4C2531.4 859.2 2532.2 856.8 2532.9 856.4C2534.1 857.1 2535.3 863.0 2536.5 867.2C2538.4 875.0 2540.4 894.0 2542.3 895.9C2544.7 894.2 2547.2 878.2 2549.6 870.2C2551.1 865.5 2552.5 857.9 2554.0 857.0C2554.8 857.9 2555.6 868.3 2556.3 870.2C2557.5 871.8 2558.7 872.3 2559.9 873.1C2560.8 873.7 2561.8 874.5 2562.8 874.6C2564.2 874.4 2565.7 873.2 2567.2 871.6C2568.1 870.2 2569.1 863.4 2570.1 862.9C2571.1 862.9 2572.0 862.9 2573.0 862.9C2575.0 864.8 2576.9 882.1 2578.9 892.1C2580.8 902.3 2582.8 921.3 2584.7 923.4C2586.2 922.2 2587.7 909.3 2589.1 905.3C2590.9 901.3 2592.6 897.1 2594.4 896.5C2595.4 896.8 2596.3 899.1 2597.3 900.9C2600.2 907.6 2603.2 930.1 2606.1 932.2C2607.3 931.6 2608.4 927.1 2609.6 922.8C2612.0 910.3 2614.5 854.6 2616.9 849.7C2617.9 849.8 2618.9 850.4 2619.8 851.2C2621.3 855.1 2622.8 890.4 2624.2 895.0C2625.0 896.1 2625.8 896.9 2626.6 897.1C2628.2 895.9 2629.9 884.8 2631.5 878.9C2634.0 870.6 2636.4 856.6 2638.9 855.0C2639.6 855.5 2640.4 859.2 2641.2 862.9C2642.4 870.4 2643.5 897.8 2644.7 905.3C2645.9 910.7 2647.0 915.7 2648.2 916.4C2649.8 915.4 2651.3 907.7 2652.9 900.9C2654.6 892.2 2656.2 868.5 2657.9 862.9C2658.7 861.2 2659.4 859.6 2660.2 859.3C2661.2 860.0 2662.2 864.4 2663.1 868.7C2665.1 880.8 2667.0 930.8 2669.0 938.9C2669.9 940.7 2670.7 942.2 2671.6 942.4C2673.9 937.8 2676.1 881.2 2678.3 873.1C2679.3 871.3 2680.3 869.8 2681.3 869.6C2682.3 870.2 2683.2 874.9 2684.2 878.9C2686.4 890.3 2688.7 929.5 2690.9 933.1C2691.6 932.9 2692.3 931.5 2693.0 930.1C2695.4 922.4 2697.9 883.3 2700.3 876.0C2701.1 874.6 2701.9 873.3 2702.6 873.1C2703.8 874.3 2705.0 883.5 2706.1 890.6C2708.1 904.5 2710.0 943.9 2712.0 947.7C2714.7 942.5 2717.5 880.9 2720.2 870.2C2721.1 868.1 2721.9 866.1 2722.8 865.8C2724.9 865.9 2726.9 866.6 2729.0 867.8C2730.3 871.1 2731.7 903.6 2733.1 906.2C2735.0 905.4 2737.0 898.7 2738.9 895.0" fill="none" stroke="#84ba5e" stroke-width="2" stroke-linejoin="round" stroke-linecap="round"/>
<path d="M470.2 937.4C472.7 954.2 475.1 974.5 477.6 987.8C480.0 999.6 482.4 1011.3 484.9 1017.0C486.3 1019.7 487.8 1021.5 489.3 1022.9C490.4 1023.9 491.6 1025.1 492.8 1025.2C494.0 1024.9 495.3 1020.9 496.6 1020.5C499.0 1021.9 501.4 1037.6 503.9 1040.4C504.9 1041.1 505.8 1041.1 506.8 1041.9C508.8 1046.6 510.7 1081.5 512.7 1091.6C515.8 1104.4 518.9 1116.2 522.0 1118.0C524.0 1114.6 525.9 1071.5 527.9 1068.2C528.7 1068.7 529.4 1072.3 530.2 1075.5C531.7 1083.5 533.1 1104.9 534.6 1116.5C536.8 1132.8 539.1 1155.3 541.3 1158.0C544.5 1154.5 547.6 1122.9 550.7 1104.8C553.6 1087.6 556.5 1067.4 559.5 1052.1C563.4 1033.2 567.3 1009.6 571.2 1002.4C572.3 1001.0 573.5 999.7 574.7 999.5C576.0 1000.6 577.2 1010.3 578.5 1017.0C580.7 1030.1 583.0 1062.1 585.2 1065.3C587.9 1059.2 590.5 979.3 593.1 973.1C594.6 973.8 596.0 981.5 597.5 983.4C598.5 984.3 599.5 984.4 600.4 985.4C602.4 988.9 604.3 1001.0 606.3 1011.2C608.2 1022.3 610.2 1041.6 612.1 1052.1C613.6 1059.2 615.1 1066.2 616.5 1069.7C618.0 1072.4 619.4 1072.7 620.9 1075.5C623.4 1082.4 625.8 1107.1 628.2 1118.0C629.7 1123.8 631.2 1130.6 632.6 1132.6C633.6 1133.3 634.6 1133.4 635.5 1134.1C639.4 1138.7 643.3 1166.8 647.2 1169.2C649.2 1166.6 651.1 1146.6 653.1 1131.1C655.0 1113.7 657.0 1076.7 658.9 1063.8C660.9 1054.1 662.8 1046.7 664.8 1043.4C666.0 1042.0 667.1 1040.6 668.3 1040.4C669.6 1040.6 670.8 1042.0 672.1 1043.4C674.6 1047.4 677.0 1067.9 679.4 1069.7C681.4 1066.6 683.3 1030.0 685.3 1022.9C687.0 1018.7 688.8 1015.2 690.5 1014.7C691.7 1015.1 692.9 1017.8 694.1 1020.5C696.0 1027.0 698.0 1046.3 699.9 1058.0C703.0 1076.0 706.1 1105.0 709.3 1108.3C712.0 1106.1 714.7 1086.9 717.5 1075.5C721.8 1056.8 726.2 1020.4 730.6 1016.4C731.6 1016.7 732.6 1018.3 733.6 1020.0C735.0 1023.4 736.5 1038.5 737.9 1039.8C738.9 1039.6 739.9 1036.6 740.9 1036.0C742.0 1035.6 743.2 1035.6 744.4 1035.2C746.6 1032.6 748.9 1018.6 751.1 1008.3C752.6 1001.0 754.0 985.0 755.5 983.4C756.3 983.5 757.1 984.1 757.8 984.8C760.0 989.1 762.1 1011.9 764.3 1022.9C766.2 1032.2 768.2 1046.1 770.1 1047.7C771.6 1047.1 773.0 1038.2 774.5 1037.5C775.5 1037.7 776.5 1040.2 777.4 1040.4C778.4 1040.2 779.4 1037.7 780.4 1037.5C781.8 1038.0 783.3 1044.3 784.8 1044.8C786.2 1044.4 787.7 1039.7 789.1 1039.0C791.1 1038.5 793.0 1038.2 795.0 1038.1C796.9 1038.9 798.9 1049.8 800.8 1050.7C802.8 1049.6 804.7 1036.2 806.7 1035.2C807.7 1035.4 808.6 1037.3 809.6 1039.0C812.5 1045.4 815.5 1070.4 818.4 1072.6C822.0 1071.2 825.6 1052.1 829.2 1050.7C830.8 1050.8 832.3 1051.3 833.9 1052.1C835.1 1053.7 836.2 1065.8 837.4 1066.8C838.9 1066.3 840.3 1059.9 841.8 1059.4C843.3 1060.7 844.7 1077.2 846.2 1078.5C847.2 1078.4 848.1 1077.1 849.1 1077.0C850.6 1077.5 852.0 1083.3 853.5 1083.7C856.7 1080.5 859.9 1045.9 863.2 1034.6C865.8 1026.8 868.4 1017.7 871.1 1016.4C873.5 1017.3 875.9 1025.9 878.4 1028.7C880.3 1030.6 882.3 1032.8 884.2 1033.1C885.7 1032.9 887.2 1030.4 888.6 1030.2C890.1 1030.9 891.5 1039.8 893.0 1040.4C894.0 1040.1 895.0 1035.5 895.9 1035.2C896.9 1035.3 897.9 1036.8 898.9 1036.9C900.3 1036.0 901.8 1026.6 903.2 1022.9C904.7 1019.6 906.2 1015.2 907.6 1014.7C909.1 1015.2 910.6 1019.9 912.0 1022.9C914.7 1028.4 917.3 1039.8 919.9 1041.0C922.6 1040.8 925.4 1039.2 928.1 1037.5C932.0 1034.3 935.9 1023.3 939.8 1020.0C940.8 1019.3 941.8 1019.1 942.7 1018.5C946.6 1014.6 950.5 1002.6 954.4 993.6C955.9 990.1 957.4 983.2 958.8 982.5C960.1 982.9 961.4 987.4 962.6 987.8C966.2 987.0 969.8 977.4 973.5 976.7C975.4 977.4 977.4 985.3 979.3 987.8C980.8 989.3 982.2 989.5 983.7 991.3C985.6 995.5 987.6 1015.5 989.5 1022.9C992.5 1032.1 995.4 1034.8 998.3 1043.4C999.8 1048.2 1001.3 1060.3 1002.7 1061.5C1004.2 1061.4 1005.6 1059.6 1007.1 1059.4C1009.5 1059.9 1012.0 1065.7 1014.4 1066.2C1016.9 1064.7 1019.3 1044.9 1021.7 1043.4C1023.2 1044.1 1024.7 1054.3 1026.1 1055.1C1028.1 1054.8 1030.0 1053.0 1032.0 1050.7C1034.6 1044.8 1037.3 1015.2 1040.0 1003.9C1041.5 998.5 1042.9 995.7 1044.4 990.7C1046.8 981.7 1049.3 962.2 1051.7 958.5C1052.7 957.8 1053.7 957.1 1054.6 957.1C1056.3 957.7 1057.9 966.6 1059.6 967.3C1061.1 966.7 1062.5 958.6 1064.0 957.9C1065.5 958.4 1066.9 961.7 1068.4 964.4C1070.1 968.1 1071.9 978.6 1073.6 979.6C1075.1 979.5 1076.6 979.3 1078.0 979.0C1079.0 978.6 1080.0 975.7 1081.0 975.5C1082.4 976.9 1083.9 995.1 1085.3 996.5C1086.3 996.5 1087.3 996.3 1088.3 996.0C1090.5 994.2 1092.8 980.1 1095.0 979.0C1095.9 979.3 1096.8 981.5 1097.6 983.4C1099.9 989.7 1102.1 1006.9 1104.4 1015.6C1105.8 1020.7 1107.3 1024.0 1108.8 1028.7C1111.0 1036.3 1113.2 1048.8 1115.5 1053.6C1116.7 1055.6 1117.8 1056.4 1119.0 1058.0C1120.5 1060.0 1121.9 1064.0 1123.4 1064.4C1125.0 1063.6 1126.7 1054.8 1128.4 1052.1C1129.1 1051.1 1129.9 1050.0 1130.7 1049.8C1131.4 1050.0 1132.1 1052.5 1132.7 1052.7C1134.3 1050.8 1135.9 1031.4 1137.4 1024.3C1139.1 1017.8 1140.7 1009.9 1142.4 1008.8C1143.4 1009.0 1144.3 1010.5 1145.3 1010.6C1146.5 1010.3 1147.7 1007.5 1148.8 1006.8C1149.6 1006.4 1150.4 1006.4 1151.2 1005.9C1152.2 1004.6 1153.1 995.8 1154.1 993.6C1154.8 992.5 1155.5 991.4 1156.1 991.3C1156.9 992.0 1157.7 1001.1 1158.5 1002.4C1159.5 1003.2 1160.4 1003.8 1161.4 1003.9C1163.6 1002.9 1165.7 990.2 1167.9 989.2C1168.8 989.7 1169.8 996.1 1170.8 996.5C1172.2 996.3 1173.7 992.5 1175.2 992.2C1175.9 992.7 1176.7 998.5 1177.5 1000.9C1179.2 1005.7 1180.8 1011.9 1182.5 1012.6C1184.2 1011.7 1186.0 999.8 1187.7 998.9C1188.4 999.1 1189.1 1002.2 1189.8 1002.4C1191.1 1002.1 1192.3 998.3 1193.6 998.0C1194.1 998.2 1194.6 999.6 1195.1 1000.9C1196.5 1006.3 1198.0 1029.1 1199.4 1031.1C1200.9 1031.0 1202.4 1030.3 1203.8 1030.2C1204.8 1030.4 1205.8 1031.8 1206.8 1033.1C1208.2 1035.5 1209.7 1043.2 1211.2 1043.9C1212.6 1043.5 1214.1 1037.9 1215.5 1037.5C1216.3 1037.5 1217.1 1037.5 1217.9 1037.5C1221.0 1034.4 1224.1 994.4 1227.2 991.3C1228.7 991.9 1230.2 1000.3 1231.6 1000.9C1232.6 1000.9 1233.6 1000.9 1234.6 1000.9C1236.2 1000.1 1237.9 988.6 1239.5 987.8C1240.8 987.8 1242.1 987.8 1243.3 987.8C1244.3 988.3 1245.3 994.6 1246.3 995.1C1247.2 995.1 1248.2 995.1 1249.2 995.1C1249.9 994.6 1250.6 989.3 1251.2 987.8C1252.0 986.4 1252.8 986.0 1253.6 984.8C1255.0 982.3 1256.5 975.3 1258.0 974.6C1259.9 976.6 1261.9 994.3 1263.8 1003.9C1265.0 1009.6 1266.2 1019.7 1267.3 1020.8C1268.6 1019.8 1269.9 1007.9 1271.1 1005.9C1273.1 1004.3 1275.0 1003.2 1277.0 1003.0C1278.0 1003.4 1278.9 1006.9 1279.9 1009.7C1283.3 1022.3 1286.7 1068.4 1290.1 1072.6C1291.6 1072.3 1293.1 1067.7 1294.5 1067.3C1295.7 1067.7 1296.9 1071.7 1298.0 1072.0C1299.5 1071.7 1301.0 1067.7 1302.4 1067.3C1304.2 1067.8 1305.9 1073.6 1307.7 1074.1C1308.7 1073.8 1309.7 1070.0 1310.6 1069.7C1312.1 1069.7 1313.6 1069.7 1315.0 1069.7C1316.5 1067.1 1317.9 1037.2 1319.4 1030.2C1320.4 1026.8 1321.4 1025.6 1322.3 1022.9C1324.3 1017.0 1326.2 1005.4 1328.2 1001.8C1328.7 1001.2 1329.2 1000.4 1329.6 1000.4C1330.6 1000.6 1331.6 1002.2 1332.6 1003.9C1333.5 1005.9 1334.5 1010.5 1335.5 1014.1C1336.5 1017.8 1337.4 1022.3 1338.4 1025.8C1340.9 1034.1 1343.3 1046.3 1345.7 1047.7C1347.0 1047.3 1348.3 1041.7 1349.5 1040.4C1350.5 1039.7 1351.5 1039.1 1352.5 1039.0C1354.1 1040.2 1355.8 1056.7 1357.4 1058.0C1358.4 1058.0 1359.4 1058.0 1360.4 1058.0C1361.8 1059.4 1363.3 1073.7 1364.8 1078.5C1365.7 1081.2 1366.7 1084.2 1367.7 1084.9C1369.1 1085.4 1370.6 1085.3 1372.1 1085.8C1372.8 1086.1 1373.6 1087.1 1374.4 1087.2C1375.9 1086.0 1377.3 1070.3 1378.8 1069.1C1380.0 1069.1 1381.1 1069.7 1382.3 1069.7C1383.6 1069.5 1384.8 1066.4 1386.1 1066.2C1386.8 1066.3 1387.5 1066.8 1388.2 1067.3C1389.8 1069.8 1391.5 1084.6 1393.1 1085.8C1394.6 1084.3 1396.1 1067.0 1397.5 1063.8C1399.3 1061.5 1401.0 1059.7 1402.8 1059.4C1403.8 1059.8 1404.7 1062.8 1405.7 1065.3C1408.4 1074.5 1411.2 1109.8 1413.9 1113.0C1416.5 1108.1 1419.2 1049.3 1421.8 1039.8C1422.5 1038.5 1423.2 1037.1 1423.9 1036.9C1426.1 1038.4 1428.3 1055.4 1430.6 1059.4C1431.3 1060.4 1431.9 1061.4 1432.6 1061.5C1433.9 1060.9 1435.2 1056.3 1436.4 1052.1C1438.1 1045.4 1439.7 1024.5 1441.4 1020.0C1442.0 1019.0 1442.6 1018.0 1443.2 1017.9C1444.5 1018.0 1445.9 1018.5 1447.3 1019.4C1448.5 1022.3 1449.8 1039.3 1451.1 1052.1C1452.0 1062.8 1453.0 1086.5 1454.0 1090.2C1455.0 1091.5 1455.9 1092.4 1456.9 1092.5C1458.9 1088.8 1460.8 1043.3 1462.8 1037.5C1463.7 1036.3 1464.7 1035.3 1465.7 1035.2C1466.7 1035.8 1467.6 1040.5 1468.6 1044.8C1470.1 1052.9 1471.5 1079.4 1473.0 1083.7C1473.8 1084.8 1474.6 1085.6 1475.3 1085.8C1479.4 1082.0 1483.5 1032.5 1487.6 1028.7C1488.3 1029.0 1489.0 1030.5 1489.7 1032.2C1491.1 1039.0 1492.6 1081.4 1494.1 1084.9C1495.0 1084.9 1496.0 1084.6 1497.0 1084.3C1499.2 1079.4 1501.5 1024.2 1503.7 1020.0C1504.7 1020.0 1505.7 1020.0 1506.6 1020.0C1508.1 1022.3 1509.6 1042.9 1511.0 1055.1C1512.5 1067.4 1514.0 1091.1 1515.4 1093.7C1517.9 1089.0 1520.3 1037.2 1522.7 1022.9C1524.2 1016.1 1525.7 1011.0 1527.1 1007.7C1528.4 1005.3 1529.7 1002.8 1530.9 1002.4C1532.1 1003.1 1533.3 1007.9 1534.4 1012.6C1535.9 1020.2 1537.4 1048.1 1538.8 1050.7C1539.8 1050.6 1540.8 1049.3 1541.8 1049.2C1542.4 1049.6 1543.1 1054.1 1543.8 1054.5C1546.0 1053.2 1548.3 1043.3 1550.5 1036.0C1551.8 1031.6 1553.1 1021.6 1554.3 1020.5C1555.3 1020.8 1556.3 1022.6 1557.3 1024.3C1559.2 1029.6 1561.2 1052.6 1563.1 1056.5C1563.8 1057.2 1564.5 1057.3 1565.2 1058.0C1566.8 1060.2 1568.5 1069.7 1570.1 1070.6C1571.9 1068.9 1573.6 1054.7 1575.4 1046.3C1578.3 1031.9 1581.3 1004.0 1584.2 1000.9C1587.6 1004.0 1591.0 1030.5 1594.4 1046.3C1596.6 1056.4 1598.7 1075.8 1600.9 1077.9C1603.6 1075.2 1606.3 1050.8 1609.0 1037.5C1611.3 1026.7 1613.5 1011.2 1615.8 1005.3C1617.2 1002.6 1618.6 1000.7 1620.0 999.5C1621.0 998.8 1622.0 998.1 1622.9 998.0C1623.9 998.8 1624.9 1004.8 1625.9 1009.7C1627.0 1016.7 1628.2 1034.4 1629.4 1039.0C1630.3 1041.5 1631.3 1043.6 1632.3 1043.9C1634.2 1043.9 1636.2 1043.9 1638.1 1043.9C1639.9 1043.2 1641.7 1033.0 1643.4 1032.2C1644.9 1034.2 1646.3 1055.1 1647.8 1060.9C1648.8 1063.9 1649.7 1067.2 1650.7 1067.6C1652.2 1067.1 1653.6 1060.0 1655.1 1059.4C1656.3 1060.0 1657.4 1064.1 1658.6 1067.3C1659.9 1071.3 1661.2 1076.2 1662.4 1082.9C1664.4 1095.4 1666.3 1130.5 1668.3 1139.9C1669.5 1144.1 1670.8 1148.1 1672.1 1148.7C1673.2 1148.2 1674.4 1144.6 1675.6 1141.4C1677.3 1135.3 1679.1 1114.1 1680.9 1112.1C1682.5 1112.8 1684.2 1122.2 1685.8 1122.9C1688.3 1121.9 1690.7 1108.2 1693.1 1107.1C1693.9 1107.3 1694.7 1109.1 1695.5 1109.2C1697.1 1108.2 1698.8 1096.2 1700.5 1094.6C1701.4 1094.1 1702.4 1094.1 1703.4 1093.7C1705.3 1092.2 1707.3 1087.5 1709.2 1082.9C1710.2 1080.2 1711.2 1073.3 1712.2 1072.6C1713.1 1072.8 1714.1 1074.1 1715.1 1075.5C1715.9 1077.0 1716.6 1082.4 1717.4 1082.9C1718.6 1082.7 1719.8 1081.4 1720.9 1079.9C1722.6 1076.9 1724.3 1063.3 1725.9 1060.9C1726.9 1060.2 1727.9 1059.5 1728.8 1059.4C1730.6 1059.9 1732.3 1065.7 1734.1 1066.2C1736.2 1065.6 1738.4 1058.5 1740.5 1058.0C1741.3 1058.2 1742.1 1059.5 1742.9 1060.9C1745.1 1067.8 1747.4 1104.9 1749.6 1112.1C1750.3 1113.5 1751.0 1114.8 1751.7 1115.0C1752.6 1114.6 1753.6 1108.2 1754.6 1107.7C1755.4 1107.8 1756.1 1109.1 1756.9 1109.2C1757.9 1108.2 1758.9 1100.1 1759.8 1094.6C1762.0 1081.3 1764.1 1052.5 1766.3 1046.3C1768.5 1042.7 1770.8 1040.0 1773.0 1039.6C1774.2 1040.3 1775.4 1047.4 1776.5 1050.7C1778.8 1056.6 1781.0 1065.1 1783.3 1066.2C1784.2 1066.1 1785.2 1065.8 1786.2 1065.3C1787.3 1063.3 1788.5 1049.3 1789.7 1043.4C1791.3 1035.7 1793.0 1025.6 1794.7 1024.3C1795.4 1024.3 1796.2 1024.3 1797.0 1024.3C1798.5 1024.9 1799.9 1028.8 1801.4 1033.1C1803.3 1041.7 1805.3 1073.0 1807.2 1087.2C1809.2 1100.0 1811.1 1116.7 1813.1 1118.8C1814.1 1118.7 1815.0 1117.7 1816.0 1116.5C1817.5 1113.4 1818.9 1102.2 1820.4 1093.1C1822.8 1076.3 1825.3 1037.3 1827.7 1030.2C1829.2 1028.2 1830.6 1026.6 1832.1 1026.4C1833.6 1027.0 1835.0 1031.4 1836.5 1036.0C1838.2 1043.5 1839.8 1065.0 1841.5 1078.5C1843.2 1092.3 1845.0 1113.7 1846.7 1118.0C1847.4 1118.7 1848.1 1119.3 1848.8 1119.4C1850.1 1118.3 1851.3 1108.8 1852.6 1101.9C1854.5 1090.0 1856.5 1059.5 1858.4 1056.5C1859.2 1056.7 1860.0 1058.1 1860.8 1059.4C1863.2 1065.8 1865.7 1097.7 1868.1 1100.4C1869.1 1100.4 1870.0 1100.0 1871.0 1099.5C1873.2 1096.6 1875.3 1070.3 1877.5 1068.2C1878.9 1068.8 1880.4 1075.5 1881.8 1077.0C1882.8 1077.7 1883.8 1077.7 1884.8 1078.5C1886.2 1080.7 1887.7 1092.2 1889.2 1097.5C1890.6 1102.4 1892.1 1104.9 1893.6 1110.1C1895.5 1117.9 1897.5 1138.2 1899.4 1141.4C1900.1 1141.8 1900.8 1142.2 1901.5 1142.2C1904.2 1136.1 1906.9 1064.8 1909.6 1049.8C1911.1 1044.3 1912.6 1041.3 1914.0 1038.1C1915.3 1035.6 1916.6 1032.1 1917.8 1031.7C1920.0 1033.9 1922.1 1051.8 1924.3 1065.3C1926.2 1078.9 1928.2 1099.5 1930.1 1115.9C1931.6 1128.1 1933.0 1146.9 1934.5 1151.6C1935.3 1153.1 1936.1 1154.3 1936.9 1154.5C1938.5 1152.1 1940.2 1130.5 1941.8 1118.0C1944.0 1101.5 1946.1 1072.2 1948.3 1066.8C1949.2 1065.7 1950.2 1064.9 1951.2 1064.7C1952.7 1066.4 1954.1 1082.8 1955.6 1090.2C1956.8 1096.2 1958.1 1099.4 1959.4 1106.3C1961.3 1118.9 1963.3 1144.6 1965.2 1161.8C1966.5 1172.7 1967.8 1190.5 1969.0 1192.6C1970.5 1190.6 1972.0 1175.2 1973.4 1163.3C1976.1 1138.8 1978.7 1081.9 1981.3 1063.3C1982.1 1059.1 1982.9 1054.2 1983.7 1053.6C1986.1 1055.6 1988.5 1070.5 1991.0 1083.7C1993.1 1097.7 1995.3 1124.8 1997.4 1144.3C1999.4 1161.7 2001.3 1191.5 2003.3 1194.9C2004.0 1194.8 2004.8 1193.7 2005.6 1192.6C2008.4 1181.7 2011.3 1092.1 2014.1 1083.7C2015.1 1083.3 2016.0 1082.9 2017.0 1082.9C2019.1 1087.2 2021.1 1131.1 2023.2 1148.7C2025.6 1167.5 2028.0 1190.6 2030.5 1195.5C2031.4 1196.2 2032.2 1196.9 2033.1 1197.0C2034.4 1195.1 2035.6 1180.5 2036.9 1169.2C2038.9 1149.2 2040.8 1097.3 2042.8 1088.7C2043.5 1087.2 2044.3 1086.0 2045.1 1085.8C2046.0 1085.8 2046.9 1086.6 2047.7 1086.7C2048.5 1086.3 2049.3 1081.7 2050.1 1081.4C2050.9 1081.8 2051.6 1084.7 2052.4 1087.2C2054.9 1098.2 2057.3 1144.6 2059.7 1148.7C2060.6 1148.4 2061.5 1146.3 2062.4 1144.3C2065.6 1132.9 2068.8 1079.1 2072.0 1068.2C2073.0 1066.2 2074.0 1064.1 2074.9 1063.8C2076.1 1064.1 2077.3 1066.1 2078.5 1068.2C2080.7 1075.4 2082.9 1107.7 2085.2 1122.4C2086.0 1127.0 2086.7 1133.8 2087.5 1134.6C2088.9 1134.4 2090.3 1131.4 2091.6 1131.1C2092.4 1131.3 2093.2 1133.2 2094.0 1134.1C2096.7 1136.7 2099.4 1140.1 2102.2 1140.5C2103.8 1139.0 2105.5 1123.0 2107.1 1118.8C2108.6 1116.1 2110.1 1113.4 2111.5 1113.0C2112.5 1113.4 2113.5 1118.5 2114.4 1118.8C2115.1 1118.8 2115.8 1118.0 2116.5 1118.0C2118.2 1118.5 2120.0 1126.2 2121.8 1126.7C2122.4 1126.4 2123.1 1122.1 2123.8 1121.8C2124.6 1121.9 2125.4 1123.7 2126.1 1123.8C2128.3 1121.6 2130.4 1098.7 2132.6 1090.2C2134.8 1082.3 2137.1 1073.3 2139.3 1071.2C2140.3 1070.7 2141.3 1070.7 2142.2 1070.3C2144.5 1068.0 2146.7 1057.4 2149.0 1049.2C2150.6 1042.6 2152.3 1027.4 2153.9 1025.8C2154.9 1026.2 2155.9 1030.7 2156.9 1031.1C2157.8 1031.0 2158.8 1030.3 2159.8 1030.2C2162.4 1032.1 2165.1 1057.5 2167.7 1059.4C2169.4 1058.0 2171.2 1042.7 2173.0 1037.5C2174.6 1033.4 2176.3 1028.5 2177.9 1027.9C2178.7 1028.1 2179.5 1031.9 2180.3 1032.2C2181.9 1031.9 2183.6 1028.1 2185.2 1027.9C2188.5 1031.0 2191.7 1072.4 2194.9 1075.5C2195.6 1075.4 2196.3 1074.8 2196.9 1074.1C2198.0 1072.0 2199.0 1064.0 2200.0 1058.0C2201.5 1048.7 2202.9 1031.8 2204.4 1025.8C2205.7 1021.9 2206.9 1018.2 2208.2 1017.6C2209.2 1018.2 2210.1 1022.1 2211.1 1025.8C2212.8 1034.1 2214.4 1055.6 2216.1 1069.7C2217.6 1081.8 2219.0 1094.2 2220.5 1104.8C2221.9 1114.9 2223.4 1128.8 2224.9 1132.6C2225.8 1134.1 2226.8 1135.3 2227.8 1135.5C2228.8 1134.8 2229.7 1129.8 2230.7 1125.3C2232.0 1118.2 2233.3 1101.8 2234.5 1093.1C2235.2 1088.8 2235.9 1082.7 2236.6 1082.0C2238.0 1082.6 2239.5 1091.0 2241.0 1091.6C2241.9 1091.6 2242.9 1091.6 2243.9 1091.6C2245.3 1092.9 2246.8 1105.7 2248.3 1110.6C2249.2 1113.6 2250.2 1117.5 2251.2 1118.0C2252.0 1117.9 2252.8 1117.6 2253.5 1117.1C2254.4 1115.2 2255.3 1099.2 2256.2 1096.6C2257.4 1094.6 2258.7 1094.9 2260.0 1093.1C2261.0 1091.0 2261.9 1081.2 2262.9 1079.9C2263.9 1079.4 2264.9 1079.1 2265.8 1079.1C2266.5 1079.4 2267.2 1084.0 2267.9 1084.3C2268.7 1084.2 2269.4 1083.6 2270.2 1082.9C2271.2 1081.3 2272.2 1074.4 2273.1 1071.2C2275.1 1065.3 2277.0 1057.5 2279.0 1056.5C2280.0 1056.9 2280.9 1062.0 2281.9 1062.4C2282.6 1062.4 2283.3 1062.4 2284.0 1062.4C2284.9 1062.8 2285.9 1068.4 2286.9 1069.1C2288.0 1069.4 2289.0 1069.4 2290.1 1069.7C2291.3 1070.2 2292.5 1073.0 2293.6 1073.2C2295.3 1073.2 2296.9 1073.2 2298.6 1073.2C2299.4 1072.8 2300.2 1068.1 2300.9 1067.3C2301.6 1067.0 2302.3 1066.8 2303.0 1066.8C2304.0 1067.3 2304.9 1074.1 2305.9 1075.0C2306.7 1075.3 2307.5 1075.2 2308.3 1075.5C2309.7 1076.7 2311.2 1084.3 2312.6 1084.9C2315.1 1084.5 2317.5 1081.1 2320.0 1079.1C2321.4 1077.8 2322.9 1076.7 2324.3 1075.0C2325.3 1073.6 2326.3 1071.0 2327.3 1069.7C2328.2 1068.5 2329.2 1068.2 2330.2 1066.8C2331.5 1063.9 2332.7 1051.5 2334.0 1047.7C2335.2 1045.0 2336.3 1044.3 2337.5 1041.9C2338.7 1039.2 2339.8 1032.3 2341.0 1031.7C2342.5 1032.2 2343.9 1039.3 2345.4 1039.8C2346.9 1039.1 2348.3 1029.5 2349.8 1028.7C2350.6 1029.0 2351.4 1031.1 2352.1 1033.1C2353.1 1036.5 2354.1 1047.8 2355.1 1050.7C2355.7 1052.1 2356.4 1053.4 2357.1 1053.6C2358.2 1053.1 2359.3 1047.2 2360.3 1046.3C2361.0 1046.0 2361.7 1046.0 2362.4 1045.7C2363.8 1044.6 2365.3 1037.5 2366.8 1036.9C2367.7 1037.3 2368.7 1039.6 2369.7 1041.9C2371.6 1048.0 2373.6 1063.2 2375.5 1075.5C2377.2 1086.6 2378.9 1109.7 2380.5 1112.1C2381.3 1111.8 2382.1 1107.5 2382.9 1107.1C2383.5 1107.3 2384.2 1108.8 2384.9 1110.1C2386.0 1112.5 2387.0 1121.0 2388.1 1121.8C2388.8 1121.6 2389.5 1120.5 2390.2 1119.4C2391.6 1115.7 2393.1 1097.2 2394.6 1094.6C2395.5 1093.8 2396.5 1093.9 2397.5 1093.1C2398.3 1092.1 2399.0 1086.3 2399.8 1085.8C2400.5 1086.0 2401.2 1087.4 2401.9 1088.7C2402.8 1090.9 2403.8 1097.7 2404.8 1098.4C2405.6 1098.2 2406.4 1097.4 2407.1 1096.6C2408.8 1094.3 2410.5 1084.6 2412.1 1083.7C2413.6 1084.3 2415.0 1090.4 2416.5 1091.6C2417.3 1092.1 2418.1 1092.0 2418.8 1092.5C2419.7 1093.4 2420.6 1099.1 2421.5 1099.5C2422.3 1099.5 2423.0 1099.2 2423.8 1098.9C2426.3 1097.0 2428.7 1084.8 2431.1 1081.4C2432.6 1079.8 2434.1 1079.3 2435.5 1077.9C2438.0 1075.1 2440.4 1067.0 2442.8 1066.2C2443.6 1066.4 2444.4 1067.8 2445.2 1069.1C2446.6 1072.1 2448.1 1078.0 2449.6 1083.7C2450.7 1088.8 2451.9 1096.4 2453.1 1101.9C2454.3 1107.5 2455.6 1114.4 2456.9 1117.1C2457.6 1118.2 2458.2 1119.3 2458.9 1119.4C2460.4 1119.2 2461.8 1118.0 2463.3 1116.5C2465.1 1113.9 2466.8 1101.5 2468.6 1100.4C2469.7 1100.8 2470.9 1105.2 2472.1 1106.3C2473.3 1107.0 2474.4 1107.0 2475.6 1107.7C2477.8 1109.8 2480.1 1120.8 2482.3 1121.8C2484.8 1121.0 2487.2 1110.8 2489.6 1110.1C2491.1 1110.6 2492.6 1114.4 2494.0 1118.0C2495.7 1122.9 2497.3 1136.6 2499.0 1141.4C2500.0 1143.6 2501.0 1146.0 2501.9 1146.3C2502.7 1145.9 2503.5 1142.6 2504.3 1139.9C2505.7 1133.7 2507.2 1114.6 2508.7 1112.1C2509.6 1111.6 2510.6 1111.6 2511.6 1111.2C2513.0 1110.5 2514.5 1108.0 2516.0 1107.7C2516.9 1108.5 2517.9 1116.9 2518.9 1118.8C2519.6 1119.8 2520.3 1120.8 2520.9 1120.9C2521.7 1120.2 2522.5 1114.6 2523.3 1110.6C2525.7 1096.6 2528.2 1065.5 2530.6 1055.1C2531.4 1052.5 2532.2 1049.6 2532.9 1049.2C2533.8 1049.5 2534.7 1051.4 2535.6 1053.6C2536.8 1058.3 2538.1 1079.0 2539.4 1084.3C2540.2 1086.7 2540.9 1089.0 2541.7 1089.3C2542.7 1088.8 2543.7 1084.2 2544.6 1081.4C2546.8 1074.8 2548.9 1060.9 2551.1 1059.4C2552.1 1059.4 2553.0 1059.4 2554.0 1059.4C2554.7 1060.6 2555.4 1073.3 2556.1 1077.0C2556.8 1080.4 2557.6 1083.8 2558.4 1084.3C2560.2 1084.1 2561.9 1083.0 2563.7 1081.4C2564.3 1080.4 2565.0 1077.9 2565.7 1075.5C2567.2 1069.8 2568.6 1054.3 2570.1 1052.1C2570.8 1051.8 2571.5 1051.6 2572.1 1051.6C2573.1 1052.2 2574.1 1056.8 2575.1 1060.9C2576.8 1070.5 2578.6 1094.5 2580.3 1109.2C2581.6 1119.4 2582.9 1135.7 2584.1 1137.6C2586.8 1134.6 2589.4 1101.5 2592.0 1093.1C2592.8 1091.2 2593.6 1089.0 2594.4 1088.7C2595.6 1089.4 2596.7 1094.5 2597.9 1098.9C2599.8 1108.2 2601.8 1133.4 2603.7 1142.8C2604.4 1145.5 2605.1 1148.8 2605.8 1149.3C2607.1 1148.3 2608.3 1141.0 2609.6 1134.1C2611.5 1120.1 2613.5 1075.7 2615.4 1060.9C2616.2 1056.2 2617.0 1050.8 2617.8 1050.1C2618.7 1050.4 2619.5 1052.6 2620.4 1055.1C2621.9 1062.0 2623.3 1097.4 2624.8 1104.8C2625.6 1107.3 2626.4 1109.7 2627.2 1110.1C2628.6 1108.7 2630.1 1097.6 2631.5 1090.2C2633.5 1079.6 2635.4 1060.1 2637.4 1053.6C2638.1 1051.9 2638.8 1050.0 2639.4 1049.8C2640.4 1051.9 2641.4 1069.2 2642.4 1081.4C2643.3 1094.6 2644.3 1122.7 2645.3 1128.2C2646.3 1130.9 2647.2 1132.8 2648.2 1133.2C2649.5 1132.2 2650.8 1124.4 2652.0 1118.0C2654.3 1104.6 2656.5 1068.3 2658.7 1059.4C2659.4 1057.7 2660.1 1055.9 2660.8 1055.6C2661.8 1056.9 2662.7 1066.1 2663.7 1074.1C2665.5 1091.9 2667.2 1148.6 2669.0 1158.9C2670.0 1161.9 2670.9 1164.4 2671.9 1164.8C2674.1 1158.6 2676.2 1086.6 2678.3 1072.6C2679.3 1068.5 2680.3 1064.4 2681.3 1063.8C2682.3 1065.4 2683.2 1079.2 2684.2 1087.2C2686.4 1106.0 2688.7 1141.9 2690.9 1145.8C2691.8 1145.5 2692.7 1143.5 2693.6 1141.4C2695.8 1132.8 2698.0 1091.0 2700.3 1081.4C2701.1 1079.1 2701.9 1076.8 2702.6 1076.4C2703.6 1077.3 2704.6 1084.3 2705.6 1090.2C2707.7 1106.3 2709.8 1162.5 2712.0 1167.7C2713.9 1162.5 2715.9 1111.5 2717.8 1090.2C2719.0 1078.4 2720.2 1061.5 2721.4 1059.4C2722.1 1059.4 2722.9 1059.4 2723.7 1059.4C2725.4 1060.0 2727.0 1063.0 2728.7 1067.3C2730.1 1074.2 2731.6 1116.0 2733.1 1119.4C2734.3 1119.4 2735.6 1119.4 2736.9 1119.4C2737.5 1118.5 2738.2 1110.6 2738.9 1106.3" fill="none" stroke="#e58a24" stroke-width="2" stroke-linejoin="round" stroke-linecap="round"/>
<path d="M470.2 1052.1C471.7 1062.9 473.2 1078.5 474.6 1084.3C478.0 1094.0 481.5 1101.2 484.9 1102.5C486.3 1102.4 487.8 1101.9 489.3 1101.9C490.2 1102.3 491.2 1107.9 492.2 1108.3C494.1 1107.8 496.1 1100.9 498.0 1100.4C500.0 1101.6 501.9 1116.8 503.9 1118.0C504.9 1117.9 505.8 1117.1 506.8 1117.1C508.8 1119.2 510.7 1140.2 512.7 1148.7C514.1 1154.4 515.6 1159.7 517.1 1163.3C518.5 1166.4 520.0 1170.1 521.4 1170.6C523.2 1169.2 525.0 1153.1 526.7 1148.7C527.7 1146.7 528.7 1144.6 529.6 1144.3C531.3 1146.7 532.9 1171.1 534.6 1180.9C536.8 1192.7 539.1 1208.2 541.3 1210.1C544.5 1206.4 547.6 1167.6 550.7 1154.5C552.5 1148.2 554.2 1140.3 556.0 1139.3C557.6 1140.5 559.3 1155.7 560.9 1156.9C564.3 1152.8 567.8 1107.1 571.2 1096.0C572.3 1093.2 573.5 1090.0 574.7 1089.6C576.0 1090.0 577.2 1093.2 578.5 1096.0C580.7 1102.5 583.0 1126.1 585.2 1128.2C587.9 1124.8 590.5 1080.4 593.1 1077.0C594.6 1077.7 596.0 1084.3 597.5 1087.2C599.5 1090.9 601.4 1092.2 603.4 1096.6C606.3 1105.8 609.2 1138.7 612.1 1148.7C613.1 1151.2 614.1 1154.1 615.1 1154.5C617.0 1153.8 619.0 1143.6 620.9 1142.8C623.4 1144.4 625.8 1159.3 628.2 1166.2C630.7 1172.8 633.1 1178.5 635.5 1183.8C638.8 1190.5 642.0 1200.7 645.2 1201.9C646.7 1201.5 648.1 1198.5 649.6 1195.5C652.5 1186.9 655.4 1154.9 658.4 1144.3C660.5 1138.1 662.7 1131.5 664.8 1130.5C666.0 1130.7 667.1 1131.6 668.3 1132.6C670.6 1135.2 672.8 1145.3 675.0 1148.7C676.3 1150.2 677.6 1152.0 678.8 1152.2C681.5 1150.2 684.1 1126.9 686.7 1122.4C688.7 1120.2 690.6 1118.3 692.6 1118.0C693.6 1118.4 694.5 1121.1 695.5 1123.8C696.5 1127.2 697.5 1135.7 698.4 1139.9C700.4 1147.3 702.3 1152.2 704.3 1157.5C706.0 1161.7 707.6 1168.4 709.3 1169.2C712.0 1168.0 714.7 1158.3 717.5 1151.6C719.4 1146.5 721.4 1139.4 723.3 1134.1C725.7 1127.7 728.2 1117.7 730.6 1116.5C733.1 1117.7 735.5 1132.5 737.9 1134.1C740.1 1134.4 742.2 1134.6 744.4 1134.6C748.1 1131.9 751.8 1095.9 755.5 1093.1C756.3 1093.3 757.1 1094.3 757.8 1095.4C760.0 1100.0 762.1 1116.5 764.3 1125.3C766.4 1133.5 768.6 1145.8 770.7 1147.2C772.0 1146.7 773.2 1141.7 774.5 1139.9C776.5 1137.6 778.4 1135.0 780.4 1134.6C781.8 1135.0 783.3 1139.6 784.8 1139.9C787.2 1139.8 789.6 1137.7 792.1 1137.6C795.0 1138.4 797.9 1149.3 800.8 1150.1C802.8 1148.7 804.7 1130.2 806.7 1128.8C807.7 1128.9 808.6 1130.1 809.6 1131.1C812.5 1135.3 815.5 1152.4 818.4 1153.9C820.8 1153.7 823.3 1151.8 825.7 1150.1C827.7 1148.7 829.6 1144.7 831.6 1144.3C833.5 1144.6 835.5 1148.4 837.4 1148.7C838.9 1148.3 840.3 1143.2 841.8 1142.8C843.3 1144.3 844.7 1161.4 846.2 1164.8C848.6 1168.4 851.1 1171.1 853.5 1171.5C856.7 1168.8 859.9 1142.4 863.2 1131.1C865.5 1123.5 867.8 1112.6 870.2 1111.2C872.9 1112.7 875.6 1128.7 878.4 1132.6C880.3 1134.6 882.3 1136.7 884.2 1137.0C885.4 1136.5 886.6 1130.2 887.7 1129.7C889.3 1130.5 890.9 1141.4 892.4 1142.2C894.1 1142.1 895.7 1141.0 897.4 1139.9C900.0 1137.3 902.7 1124.9 905.3 1123.8C907.5 1124.2 909.8 1127.0 912.0 1129.7C913.5 1131.7 914.9 1136.3 916.4 1138.4C918.4 1140.9 920.3 1143.9 922.3 1144.3C924.7 1143.7 927.1 1139.2 929.6 1135.5C932.0 1131.2 934.4 1122.5 936.9 1118.0C939.8 1113.1 942.7 1111.1 945.7 1106.3C948.6 1100.7 951.5 1090.3 954.4 1084.3C956.1 1081.2 957.8 1076.7 959.4 1076.1C960.7 1076.9 962.0 1086.5 963.2 1087.2C964.2 1087.1 965.2 1085.9 966.1 1085.8C969.1 1086.7 972.0 1096.1 974.9 1098.9C976.9 1100.5 978.8 1102.2 980.8 1102.5C981.9 1102.2 983.1 1099.2 984.3 1098.9C986.0 1100.2 987.8 1111.3 989.5 1117.1C993.5 1129.5 997.4 1146.7 1001.3 1152.2C1003.2 1154.0 1005.2 1155.7 1007.1 1156.0C1008.1 1155.8 1009.1 1153.3 1010.0 1153.1C1011.5 1153.6 1013.0 1160.4 1014.4 1161.0C1016.9 1160.3 1019.3 1151.7 1021.7 1151.0C1022.7 1151.4 1023.7 1155.3 1024.7 1156.0C1026.6 1156.8 1028.6 1157.4 1030.5 1157.5C1033.7 1155.0 1036.8 1128.0 1040.0 1120.0C1041.5 1117.0 1042.9 1115.6 1044.4 1113.0C1046.8 1108.3 1049.3 1097.7 1051.7 1096.6C1052.7 1096.9 1053.7 1100.2 1054.6 1100.4C1055.4 1100.4 1056.2 1099.9 1057.0 1099.8C1058.1 1100.3 1059.3 1106.7 1060.5 1107.1C1061.7 1106.8 1062.8 1102.2 1064.0 1101.9C1065.5 1102.3 1066.9 1105.5 1068.4 1107.7C1069.8 1110.1 1071.3 1115.4 1072.8 1115.9C1074.0 1115.7 1075.3 1113.5 1076.6 1112.1C1077.8 1110.6 1079.1 1107.5 1080.4 1107.1C1082.0 1108.1 1083.7 1120.8 1085.3 1121.8C1086.3 1121.5 1087.3 1118.6 1088.3 1118.0C1089.2 1117.5 1090.2 1117.6 1091.2 1117.1C1092.2 1116.3 1093.1 1111.6 1094.1 1111.2C1095.3 1111.7 1096.5 1116.2 1097.6 1118.8C1098.9 1121.8 1100.2 1125.6 1101.4 1128.2C1103.2 1131.5 1105.0 1132.9 1106.7 1136.4C1108.4 1140.3 1110.0 1148.6 1111.7 1153.1C1113.3 1157.1 1115.0 1161.4 1116.7 1163.3C1117.9 1164.4 1119.2 1165.5 1120.5 1165.7C1121.9 1165.5 1123.4 1164.2 1124.8 1162.7C1126.0 1161.2 1127.2 1156.0 1128.4 1154.5C1129.1 1153.8 1129.9 1153.2 1130.7 1153.1C1131.4 1153.3 1132.1 1155.8 1132.7 1156.0C1134.3 1154.8 1135.9 1140.5 1137.4 1138.4C1138.1 1138.0 1138.8 1138.0 1139.5 1137.6C1140.4 1136.3 1141.4 1127.5 1142.4 1126.7C1143.6 1126.8 1144.7 1127.6 1145.9 1127.6C1146.9 1127.2 1147.9 1122.4 1148.8 1120.9C1150.6 1118.6 1152.3 1116.2 1154.1 1115.9C1155.6 1116.9 1157.0 1130.1 1158.5 1131.1C1159.5 1131.0 1160.4 1130.4 1161.4 1129.7C1163.6 1127.3 1165.7 1114.6 1167.9 1113.6C1168.8 1113.8 1169.8 1116.3 1170.8 1116.5C1171.6 1116.3 1172.3 1113.2 1173.1 1113.0C1174.1 1113.3 1175.1 1115.5 1176.0 1117.1C1178.2 1121.1 1180.3 1131.6 1182.5 1132.6C1184.2 1132.3 1186.0 1128.0 1187.7 1127.6C1188.4 1127.9 1189.1 1130.9 1189.8 1131.1C1191.1 1130.8 1192.3 1127.0 1193.6 1126.7C1195.5 1128.0 1197.5 1143.6 1199.4 1145.8C1200.9 1146.5 1202.4 1146.6 1203.8 1147.2C1205.3 1148.0 1206.8 1149.2 1208.2 1151.0C1209.2 1152.6 1210.2 1158.4 1211.2 1158.9C1212.3 1158.6 1213.5 1154.3 1214.7 1153.9C1215.7 1154.5 1216.8 1161.3 1217.9 1161.8C1219.1 1161.3 1220.2 1156.5 1221.4 1153.1C1223.3 1146.7 1225.3 1130.4 1227.2 1128.8C1228.2 1128.9 1229.2 1130.6 1230.2 1131.1C1231.4 1131.8 1232.7 1132.5 1234.0 1132.6C1235.8 1131.7 1237.7 1119.8 1239.5 1118.8C1240.8 1119.1 1242.1 1121.2 1243.3 1122.9C1244.3 1124.4 1245.3 1128.4 1246.3 1128.8C1247.2 1128.6 1248.2 1127.4 1249.2 1125.9C1249.9 1124.4 1250.6 1117.7 1251.2 1117.1C1252.5 1117.4 1253.8 1121.5 1255.0 1121.8C1256.0 1121.8 1257.0 1121.8 1258.0 1121.8C1259.6 1122.6 1261.3 1129.0 1262.9 1134.1C1264.4 1139.1 1265.9 1152.6 1267.3 1153.9C1268.3 1153.2 1269.3 1143.0 1270.3 1142.2C1271.5 1142.3 1272.8 1142.8 1274.1 1142.8C1275.7 1142.6 1277.4 1140.1 1279.0 1139.9C1279.8 1140.3 1280.6 1143.0 1281.4 1145.2C1284.5 1155.7 1287.6 1190.8 1290.7 1194.0C1292.3 1193.5 1293.9 1187.2 1295.4 1186.1C1296.6 1185.7 1297.8 1185.7 1298.9 1185.3C1300.9 1184.0 1302.8 1177.1 1304.8 1176.5C1305.6 1177.1 1306.3 1184.7 1307.1 1185.3C1308.8 1184.8 1310.4 1178.4 1312.1 1177.9C1313.1 1178.3 1314.0 1183.4 1315.0 1183.8C1317.5 1181.1 1319.9 1154.5 1322.3 1142.8C1323.3 1138.5 1324.3 1133.3 1325.3 1131.1C1325.9 1130.0 1326.6 1128.9 1327.3 1128.8C1328.1 1128.9 1328.9 1130.1 1329.6 1131.1C1331.1 1133.5 1332.6 1141.5 1334.0 1142.2C1334.7 1142.2 1335.4 1141.4 1336.1 1141.4C1337.8 1142.6 1339.6 1154.5 1341.3 1159.8C1342.8 1163.9 1344.3 1169.9 1345.7 1170.6C1347.2 1170.0 1348.7 1161.6 1350.1 1161.0C1351.6 1161.7 1353.0 1167.7 1354.5 1172.1C1355.5 1175.2 1356.5 1182.5 1357.4 1183.2C1358.2 1183.1 1359.0 1181.0 1359.8 1180.9C1361.4 1181.6 1363.1 1191.8 1364.8 1192.6C1366.7 1192.3 1368.7 1188.5 1370.6 1188.2C1372.3 1188.6 1373.9 1193.6 1375.6 1194.0C1376.8 1193.5 1378.1 1188.7 1379.4 1186.7C1382.3 1182.5 1385.2 1177.2 1388.2 1176.5C1389.6 1176.8 1391.1 1181.1 1392.5 1181.5C1394.2 1180.7 1395.9 1171.3 1397.5 1170.6C1399.3 1170.9 1401.0 1172.9 1402.8 1175.0C1405.7 1180.2 1408.6 1201.7 1411.6 1207.2C1412.5 1208.5 1413.5 1209.9 1414.5 1210.1C1417.4 1207.4 1420.3 1171.3 1423.3 1168.6C1424.7 1168.7 1426.2 1169.1 1427.7 1169.7C1428.6 1170.5 1429.6 1174.7 1430.6 1175.0C1432.5 1174.5 1434.5 1171.5 1436.4 1167.7C1437.7 1164.1 1439.0 1147.8 1440.2 1146.3C1441.2 1146.5 1442.2 1147.6 1443.2 1148.7C1444.8 1151.5 1446.5 1158.9 1448.1 1166.2C1450.1 1176.3 1452.0 1205.0 1454.0 1207.8C1455.0 1207.6 1455.9 1206.8 1456.9 1205.7C1459.1 1201.3 1461.2 1171.6 1463.3 1169.2C1464.1 1169.3 1464.9 1169.9 1465.7 1170.6C1467.3 1174.0 1469.0 1197.2 1470.7 1200.8C1471.6 1201.8 1472.6 1202.7 1473.6 1202.8C1475.8 1201.5 1478.1 1186.1 1480.3 1183.2C1481.8 1182.0 1483.2 1182.0 1484.7 1180.9C1485.7 1179.9 1486.7 1176.8 1487.6 1176.5C1489.8 1179.5 1491.9 1218.3 1494.1 1221.2C1495.0 1220.9 1496.0 1218.5 1497.0 1216.0C1499.0 1207.2 1501.1 1161.1 1503.1 1153.9C1503.8 1152.8 1504.5 1151.8 1505.2 1151.6C1506.9 1153.8 1508.7 1173.6 1510.5 1183.8C1511.6 1190.4 1512.8 1201.5 1514.0 1202.8C1514.7 1202.7 1515.5 1202.1 1516.3 1201.3C1518.4 1196.5 1520.6 1163.1 1522.7 1154.5C1523.7 1151.6 1524.7 1148.5 1525.7 1148.1C1526.8 1148.2 1528.0 1149.1 1529.2 1150.1C1530.9 1152.5 1532.7 1160.3 1534.4 1166.2C1535.9 1171.5 1537.4 1182.6 1538.8 1183.8C1539.8 1183.6 1540.8 1181.1 1541.8 1180.9C1542.4 1181.1 1543.1 1184.1 1543.8 1184.4C1546.0 1184.0 1548.3 1181.3 1550.5 1178.5C1551.8 1176.6 1553.1 1170.3 1554.3 1169.7C1557.3 1171.7 1560.2 1196.5 1563.1 1198.4C1564.0 1198.1 1564.9 1193.5 1565.7 1193.2C1567.0 1193.4 1568.3 1196.7 1569.5 1197.0C1571.5 1196.4 1573.5 1192.1 1575.4 1188.2C1578.3 1180.7 1581.3 1154.0 1584.2 1151.6C1588.1 1153.4 1592.0 1165.8 1595.9 1177.9C1597.1 1182.2 1598.2 1194.3 1599.4 1195.5C1600.2 1195.5 1601.0 1195.2 1601.7 1194.9C1603.7 1193.0 1605.6 1180.8 1607.6 1176.5C1608.6 1174.7 1609.5 1174.2 1610.5 1172.1C1612.0 1167.8 1613.4 1151.1 1614.9 1147.2C1616.6 1144.2 1618.3 1141.8 1620.0 1141.4C1622.0 1142.6 1623.9 1154.2 1625.9 1160.4C1628.3 1167.9 1630.7 1177.5 1633.2 1182.3C1634.1 1183.9 1635.1 1185.9 1636.1 1186.1C1637.3 1186.0 1638.4 1185.0 1639.6 1183.8C1640.9 1182.0 1642.1 1173.4 1643.4 1172.7C1644.9 1174.2 1646.3 1191.7 1647.8 1195.5C1649.3 1198.1 1650.7 1200.4 1652.2 1200.8C1653.2 1200.1 1654.1 1191.7 1655.1 1191.1C1656.1 1191.3 1657.1 1192.5 1658.0 1194.0C1658.7 1195.7 1659.4 1203.6 1660.1 1204.3C1660.9 1204.3 1661.6 1204.3 1662.4 1204.3C1664.4 1206.7 1666.3 1232.1 1668.3 1240.8C1669.5 1245.7 1670.8 1250.3 1672.1 1252.5C1672.8 1253.5 1673.4 1254.5 1674.1 1254.6C1675.1 1254.1 1676.1 1249.9 1677.1 1246.7C1678.3 1242.0 1679.6 1229.5 1680.9 1228.3C1682.2 1229.1 1683.6 1240.0 1685.0 1240.8C1685.9 1240.8 1686.9 1240.8 1687.9 1240.8C1689.6 1239.8 1691.4 1225.8 1693.1 1224.8C1693.9 1224.8 1694.7 1224.8 1695.5 1224.8C1697.1 1224.0 1698.8 1214.4 1700.5 1213.6C1701.9 1214.1 1703.4 1219.9 1704.8 1220.4C1705.8 1220.2 1706.8 1218.8 1707.8 1217.4C1709.2 1214.8 1710.7 1204.6 1712.2 1203.7C1714.1 1204.0 1716.1 1208.3 1718.0 1208.7C1719.0 1208.7 1720.0 1208.7 1720.9 1208.7C1723.4 1207.5 1725.8 1192.3 1728.3 1191.1C1730.0 1191.3 1731.8 1193.3 1733.5 1193.4C1734.7 1193.2 1735.9 1190.9 1737.0 1190.2C1738.2 1189.7 1739.4 1189.1 1740.5 1189.1C1741.3 1189.3 1742.1 1191.1 1742.9 1192.6C1744.5 1196.6 1746.2 1203.3 1747.9 1211.6C1748.6 1216.0 1749.4 1227.2 1750.2 1229.1C1750.9 1229.9 1751.6 1230.5 1752.2 1230.6C1753.0 1230.3 1753.8 1226.9 1754.6 1226.2C1755.4 1225.8 1756.1 1225.8 1756.9 1225.3C1760.0 1221.4 1763.2 1190.7 1766.3 1188.2C1767.1 1188.2 1767.8 1188.2 1768.6 1188.2C1769.3 1187.8 1770.0 1183.5 1770.7 1183.2C1771.6 1183.5 1772.6 1186.0 1773.6 1188.2C1774.6 1190.8 1775.5 1196.8 1776.5 1199.9C1778.0 1203.9 1779.4 1208.5 1780.9 1209.5C1781.9 1209.8 1782.9 1210.1 1783.8 1210.1C1784.6 1209.8 1785.4 1207.7 1786.2 1205.7C1787.3 1201.8 1788.5 1188.2 1789.7 1185.3C1790.7 1183.8 1791.6 1182.5 1792.6 1182.3C1793.6 1182.5 1794.6 1183.9 1795.5 1185.3C1796.8 1187.7 1798.1 1196.4 1799.3 1198.4C1800.0 1199.1 1800.7 1199.2 1801.4 1199.9C1803.8 1204.1 1806.3 1224.7 1808.7 1232.1C1810.2 1235.8 1811.6 1240.3 1813.1 1240.8C1814.3 1240.5 1815.4 1237.4 1816.6 1235.0C1818.4 1230.8 1820.1 1224.5 1821.9 1217.4C1824.3 1206.5 1826.7 1184.1 1829.2 1175.0C1831.1 1169.2 1833.1 1165.4 1835.0 1161.8C1835.7 1160.7 1836.4 1159.1 1837.1 1158.9C1838.8 1161.1 1840.6 1180.2 1842.4 1191.1C1843.8 1200.2 1845.3 1214.3 1846.7 1218.9C1848.2 1222.1 1849.7 1224.9 1851.1 1225.3C1851.9 1224.8 1852.7 1220.6 1853.5 1217.4C1854.6 1212.1 1855.8 1200.4 1857.0 1197.0C1858.2 1194.3 1859.5 1192.0 1860.8 1191.7C1862.0 1192.0 1863.1 1194.5 1864.3 1197.0C1865.8 1201.1 1867.2 1215.3 1868.7 1219.5C1869.4 1220.9 1870.0 1222.5 1870.7 1222.7C1873.7 1221.0 1876.6 1198.7 1879.5 1197.0C1880.3 1197.2 1881.1 1199.7 1881.8 1199.9C1882.8 1199.8 1883.8 1199.1 1884.8 1199.0C1885.5 1199.4 1886.1 1201.8 1886.8 1204.3C1887.6 1207.9 1888.4 1218.2 1889.2 1223.3C1890.6 1231.8 1892.1 1237.0 1893.6 1243.8C1894.7 1249.2 1895.9 1258.4 1897.1 1259.9C1897.8 1260.2 1898.6 1260.4 1899.4 1260.4C1900.1 1260.2 1900.8 1258.5 1901.5 1256.9C1904.2 1246.9 1906.9 1197.0 1909.6 1188.2C1911.6 1184.7 1913.5 1183.4 1915.5 1181.5C1916.3 1180.7 1917.1 1179.5 1917.8 1179.4C1920.5 1181.3 1923.1 1195.6 1925.7 1207.2C1927.7 1217.0 1929.6 1231.5 1931.6 1245.2C1932.6 1252.3 1933.5 1264.0 1934.5 1268.1C1935.3 1270.4 1936.1 1272.7 1936.9 1273.0C1938.0 1271.4 1939.2 1256.7 1940.4 1248.2C1942.3 1233.6 1944.3 1210.1 1946.2 1202.8C1947.2 1200.3 1948.2 1197.9 1949.1 1197.5C1950.1 1197.7 1951.1 1198.8 1952.1 1199.9C1954.5 1204.3 1956.9 1217.5 1959.4 1230.6C1960.8 1239.6 1962.3 1254.2 1963.8 1265.7C1965.5 1279.5 1967.3 1303.7 1969.0 1306.4C1972.6 1300.7 1976.3 1245.3 1979.9 1221.8C1981.1 1214.2 1982.4 1202.7 1983.7 1201.3C1985.3 1201.8 1987.0 1205.1 1988.6 1208.7C1990.1 1212.8 1991.6 1222.4 1993.0 1230.6C1995.0 1242.4 1996.9 1256.6 1998.9 1271.6C2000.3 1283.3 2001.8 1307.3 2003.3 1309.9C2007.2 1303.9 2011.1 1232.8 2015.0 1220.4C2015.7 1219.0 2016.3 1217.6 2017.0 1217.4C2018.3 1218.7 2019.6 1229.4 2020.8 1236.5C2022.3 1245.1 2023.7 1256.5 2025.2 1265.7C2027.8 1281.7 2030.5 1307.5 2033.1 1310.5C2036.3 1305.3 2039.5 1243.0 2042.8 1232.9C2044.2 1230.4 2045.7 1230.0 2047.2 1227.7C2048.1 1225.9 2049.1 1220.9 2050.1 1220.4C2051.5 1220.7 2053.0 1222.4 2054.5 1224.8C2055.9 1229.5 2057.4 1261.6 2058.9 1264.2C2060.0 1264.2 2061.2 1263.5 2062.4 1262.8C2065.6 1257.8 2068.8 1223.2 2072.0 1214.5C2073.0 1212.6 2074.0 1210.4 2074.9 1210.1C2076.4 1210.3 2077.9 1211.2 2079.3 1212.5C2081.3 1216.1 2083.2 1235.2 2085.2 1244.6C2086.2 1249.1 2087.1 1254.4 2088.1 1256.9C2089.1 1259.0 2090.1 1259.5 2091.0 1261.3C2092.5 1264.4 2094.0 1273.1 2095.4 1273.9C2096.9 1273.6 2098.3 1271.3 2099.8 1269.2C2102.7 1264.1 2105.7 1246.3 2108.6 1244.6C2109.6 1244.7 2110.5 1244.9 2111.5 1245.2C2112.5 1245.7 2113.5 1248.5 2114.4 1248.7C2115.1 1248.5 2115.8 1246.0 2116.5 1245.8C2117.8 1246.4 2119.0 1253.5 2120.3 1254.0C2121.5 1253.8 2122.6 1250.7 2123.8 1250.5C2124.6 1250.6 2125.4 1252.4 2126.1 1252.5C2127.6 1251.3 2129.1 1236.1 2130.5 1233.5C2131.2 1232.8 2131.9 1232.6 2132.6 1232.1C2135.3 1229.5 2138.0 1223.3 2140.8 1221.8C2141.6 1221.6 2142.3 1221.5 2143.1 1221.2C2146.2 1217.5 2149.4 1187.4 2152.5 1180.3C2153.9 1177.9 2155.4 1177.4 2156.9 1175.0C2157.6 1173.5 2158.4 1169.0 2159.2 1168.6C2160.7 1169.4 2162.1 1179.2 2163.6 1180.9C2164.3 1181.3 2165.0 1181.3 2165.6 1181.7C2166.6 1182.6 2167.6 1186.9 2168.6 1187.3C2170.0 1186.6 2171.5 1179.7 2173.0 1176.5C2174.6 1173.0 2176.3 1167.7 2177.9 1167.1C2178.7 1167.6 2179.5 1174.5 2180.3 1175.0C2181.5 1175.0 2182.8 1175.0 2184.1 1175.0C2186.7 1177.1 2189.3 1200.1 2192.0 1205.7C2192.9 1207.3 2193.9 1209.0 2194.9 1209.2C2195.9 1208.9 2196.8 1206.5 2197.8 1204.3C2198.5 1202.3 2199.3 1198.5 2200.0 1195.5C2201.5 1189.4 2202.9 1180.7 2204.4 1176.5C2205.7 1173.5 2206.9 1171.0 2208.2 1169.7C2208.9 1169.2 2209.6 1168.7 2210.2 1168.6C2211.2 1168.8 2212.2 1170.4 2213.2 1172.1C2214.6 1176.1 2216.1 1189.6 2217.6 1198.4C2219.0 1207.2 2220.5 1218.5 2221.9 1224.8C2223.9 1231.8 2225.8 1239.8 2227.8 1240.8C2228.8 1240.2 2229.7 1235.0 2230.7 1230.6C2232.0 1223.9 2233.3 1209.3 2234.5 1201.3C2235.2 1197.4 2235.9 1191.8 2236.6 1191.1C2237.5 1191.2 2238.5 1191.9 2239.5 1192.6C2241.0 1194.1 2242.4 1197.6 2243.9 1201.3C2244.9 1204.3 2245.8 1209.7 2246.8 1213.0C2248.3 1217.6 2249.7 1222.9 2251.2 1224.8C2252.0 1225.4 2252.8 1226.1 2253.5 1226.2C2254.4 1225.6 2255.3 1218.0 2256.2 1217.4C2257.6 1218.1 2259.1 1226.4 2260.6 1227.1C2262.3 1226.4 2264.1 1220.2 2265.8 1217.4C2267.3 1215.2 2268.8 1214.3 2270.2 1211.6C2271.2 1209.4 2272.2 1203.1 2273.1 1201.9C2273.6 1201.6 2274.1 1201.6 2274.6 1201.3C2276.1 1199.8 2277.5 1190.4 2279.0 1189.6C2280.0 1190.2 2280.9 1197.0 2281.9 1197.5C2282.9 1197.3 2283.9 1194.3 2284.8 1194.0C2286.3 1194.4 2287.8 1199.5 2289.2 1199.9C2289.9 1199.7 2290.6 1198.0 2291.3 1197.8C2292.1 1198.1 2292.8 1201.1 2293.6 1201.3C2294.6 1201.3 2295.6 1201.1 2296.5 1200.8C2298.0 1200.0 2299.5 1195.3 2300.9 1194.9C2301.6 1194.9 2302.3 1194.9 2303.0 1194.9C2303.8 1195.4 2304.5 1202.3 2305.3 1202.8C2306.5 1202.8 2307.7 1202.0 2308.8 1201.9C2310.1 1202.2 2311.4 1206.0 2312.6 1206.3C2314.3 1205.9 2316.0 1200.3 2317.6 1199.9C2318.4 1200.0 2319.2 1202.1 2320.0 1202.2C2321.4 1201.9 2322.9 1199.7 2324.3 1197.8C2325.8 1195.6 2327.3 1191.4 2328.7 1188.2C2331.2 1182.8 2333.6 1177.3 2336.0 1172.1C2337.7 1168.6 2339.4 1162.5 2341.0 1161.8C2342.5 1162.7 2343.9 1174.1 2345.4 1175.0C2346.2 1174.8 2347.0 1173.4 2347.7 1172.1C2348.4 1170.6 2349.1 1165.8 2349.8 1165.4C2350.6 1165.7 2351.4 1168.4 2352.1 1170.6C2353.1 1173.9 2354.1 1183.5 2355.1 1184.4C2355.7 1184.3 2356.4 1184.1 2357.1 1183.8C2357.9 1183.1 2358.7 1178.9 2359.4 1178.5C2360.4 1178.8 2361.4 1182.9 2362.4 1183.2C2363.1 1183.2 2363.7 1183.2 2364.4 1183.2C2366.0 1182.7 2367.5 1175.6 2369.1 1175.0C2370.3 1175.9 2371.4 1183.7 2372.6 1188.2C2374.6 1195.8 2376.5 1206.0 2378.5 1211.6C2379.4 1214.0 2380.4 1217.0 2381.4 1217.4C2382.1 1217.4 2382.8 1217.4 2383.4 1217.4C2385.0 1218.3 2386.6 1229.7 2388.1 1230.6C2388.8 1230.4 2389.5 1229.0 2390.2 1227.7C2390.9 1225.7 2391.7 1219.9 2392.5 1217.4C2393.2 1215.6 2393.9 1213.6 2394.6 1213.0C2395.5 1212.7 2396.5 1212.8 2397.5 1212.5C2398.3 1211.9 2399.0 1207.5 2399.8 1207.2C2401.0 1207.7 2402.2 1212.1 2403.3 1214.5C2404.6 1217.1 2405.9 1221.9 2407.1 1222.4C2407.8 1222.3 2408.5 1221.3 2409.2 1220.4C2410.2 1218.8 2411.1 1213.5 2412.1 1213.0C2413.6 1213.6 2415.0 1220.7 2416.5 1221.2C2417.3 1221.0 2418.1 1217.7 2418.8 1217.4C2419.7 1217.7 2420.6 1220.7 2421.5 1220.9C2422.3 1220.9 2423.0 1220.6 2423.8 1220.4C2425.3 1219.8 2426.7 1218.7 2428.2 1217.4C2429.2 1216.5 2430.2 1213.9 2431.1 1213.6C2431.8 1213.9 2432.5 1217.2 2433.2 1217.4C2434.0 1217.3 2434.7 1216.6 2435.5 1216.0C2436.5 1214.9 2437.5 1211.3 2438.4 1211.0C2439.1 1211.0 2439.8 1211.0 2440.5 1211.0C2441.3 1210.6 2442.1 1206.1 2442.8 1205.7C2444.3 1206.4 2445.8 1215.3 2447.2 1216.0C2448.0 1215.9 2448.8 1215.4 2449.6 1215.4C2450.7 1216.2 2451.9 1224.7 2453.1 1228.3C2454.3 1231.7 2455.6 1235.2 2456.9 1237.0C2457.6 1237.8 2458.2 1238.7 2458.9 1238.8C2459.9 1238.7 2460.9 1237.2 2461.8 1237.0C2462.5 1237.3 2463.2 1240.6 2463.9 1240.8C2465.5 1239.6 2467.0 1223.1 2468.6 1221.8C2469.3 1222.1 2469.9 1225.1 2470.6 1225.3C2471.3 1225.3 2472.0 1225.0 2472.7 1224.8C2473.6 1224.2 2474.6 1222.0 2475.6 1221.8C2476.4 1221.9 2477.2 1222.1 2477.9 1222.4C2478.7 1223.2 2479.5 1229.0 2480.3 1230.6C2481.0 1231.7 2481.6 1232.8 2482.3 1232.9C2483.3 1232.4 2484.3 1226.6 2485.3 1225.3C2486.7 1224.0 2488.2 1222.9 2489.6 1222.7C2490.6 1222.8 2491.6 1223.8 2492.6 1224.8C2495.0 1227.8 2497.4 1237.8 2499.9 1240.8C2500.6 1241.5 2501.2 1242.2 2501.9 1242.3C2502.7 1242.1 2503.5 1240.7 2504.3 1239.4C2505.7 1236.2 2507.2 1224.4 2508.7 1223.3C2509.3 1223.5 2510.0 1226.0 2510.7 1226.2C2511.3 1225.7 2511.9 1220.1 2512.5 1218.9C2513.6 1217.3 2514.8 1216.2 2516.0 1216.0C2516.8 1216.6 2517.5 1224.7 2518.3 1225.3C2519.2 1225.3 2520.1 1224.8 2520.9 1224.2C2522.2 1222.8 2523.5 1218.5 2524.8 1214.5C2526.7 1207.4 2528.7 1192.0 2530.6 1185.3C2531.3 1183.2 2532.0 1180.6 2532.7 1180.3C2533.6 1180.5 2534.6 1182.2 2535.6 1183.8C2536.8 1186.4 2538.1 1195.3 2539.4 1196.1C2540.2 1196.1 2540.9 1196.1 2541.7 1196.1C2543.4 1195.5 2545.0 1188.5 2546.7 1187.6C2547.4 1187.4 2548.1 1187.5 2548.7 1187.3C2549.5 1186.5 2550.3 1179.1 2551.1 1178.5C2552.1 1178.7 2553.0 1180.1 2554.0 1181.5C2555.5 1184.2 2556.9 1193.5 2558.4 1196.1C2559.6 1197.6 2560.7 1199.1 2561.9 1199.3C2562.7 1199.3 2563.5 1199.3 2564.2 1199.3C2564.7 1199.1 2565.2 1198.0 2565.7 1197.0C2567.2 1192.9 2568.6 1176.5 2570.1 1175.0C2570.8 1175.1 2571.5 1175.3 2572.1 1175.6C2573.7 1177.8 2575.3 1195.7 2576.8 1199.0C2577.7 1200.2 2578.6 1200.2 2579.5 1201.3C2581.0 1205.3 2582.6 1230.8 2584.1 1232.9C2586.3 1231.3 2588.4 1213.8 2590.6 1208.7C2591.7 1206.4 2592.9 1203.7 2594.1 1203.4C2595.6 1204.0 2597.0 1208.6 2598.5 1213.0C2600.0 1219.0 2601.6 1239.8 2603.2 1241.7C2604.3 1241.6 2605.5 1240.9 2606.7 1240.0C2607.6 1238.9 2608.6 1236.4 2609.6 1233.5C2612.0 1224.2 2614.5 1187.7 2616.9 1184.4C2617.9 1184.5 2618.9 1185.5 2619.8 1186.7C2621.3 1189.8 2622.8 1205.0 2624.2 1210.1C2625.0 1212.4 2625.8 1215.0 2626.6 1215.4C2628.2 1214.5 2629.9 1206.6 2631.5 1201.3C2633.3 1195.4 2635.0 1184.5 2636.8 1180.9C2637.5 1179.8 2638.2 1178.7 2638.9 1178.5C2639.8 1179.2 2640.8 1183.9 2641.8 1188.2C2643.2 1196.1 2644.7 1223.7 2646.2 1226.2C2647.1 1226.2 2648.1 1225.8 2649.1 1225.3C2650.1 1224.5 2651.0 1221.6 2652.0 1218.9C2654.3 1211.3 2656.5 1190.2 2658.7 1184.4C2659.2 1183.5 2659.7 1182.5 2660.2 1182.3C2661.2 1182.7 2662.2 1185.4 2663.1 1188.2C2665.1 1196.7 2667.0 1236.5 2669.0 1243.8C2669.9 1245.6 2670.7 1247.3 2671.6 1247.6C2673.9 1243.6 2676.1 1192.1 2678.3 1188.2C2679.3 1188.3 2680.3 1188.9 2681.3 1189.6C2682.3 1191.1 2683.2 1196.9 2684.2 1201.3C2685.5 1207.6 2686.7 1220.0 2688.0 1223.3C2689.2 1225.2 2690.3 1226.8 2691.5 1227.1C2692.2 1227.0 2692.9 1226.2 2693.6 1225.3C2694.8 1222.7 2696.1 1211.7 2697.4 1207.2C2699.1 1201.8 2700.9 1195.5 2702.6 1194.6C2703.8 1196.0 2705.0 1208.8 2706.1 1216.0C2708.1 1228.0 2710.0 1250.1 2712.0 1252.5C2713.9 1249.5 2715.9 1222.5 2717.8 1207.2C2719.0 1198.0 2720.2 1181.3 2721.4 1179.4C2722.1 1179.4 2722.9 1179.4 2723.7 1179.4C2725.4 1180.0 2727.0 1183.8 2728.7 1188.2C2730.1 1193.7 2731.6 1214.6 2733.1 1220.4C2733.8 1222.6 2734.6 1225.0 2735.4 1225.3C2736.6 1224.9 2737.7 1220.7 2738.9 1218.3" fill="none" stroke="#2b8b9b" stroke-width="2" stroke-linejoin="round" stroke-linecap="round"/>
<path d="M470.2 1165.9C471.7 1176.6 473.2 1192.5 474.6 1198.0C476.1 1201.9 477.6 1203.4 479.0 1205.9C480.5 1208.4 481.9 1212.8 483.4 1213.3C485.4 1213.1 487.3 1211.1 489.3 1210.9C490.7 1211.6 492.2 1219.9 493.6 1220.6C494.6 1219.9 495.6 1212.4 496.6 1210.3C497.5 1208.7 498.5 1207.0 499.5 1206.8C501.0 1207.9 502.4 1221.2 503.9 1223.5C505.2 1224.7 506.4 1224.6 507.7 1225.8C509.3 1229.6 511.0 1250.8 512.7 1260.1C514.1 1267.5 515.6 1276.8 517.1 1279.1C518.0 1279.8 519.0 1279.9 520.0 1280.5C520.8 1281.2 521.5 1283.3 522.3 1283.5C524.0 1281.5 525.6 1256.2 527.3 1254.2C528.3 1254.4 529.2 1255.6 530.2 1257.1C531.7 1261.5 533.1 1280.2 534.6 1292.2C535.6 1300.3 536.6 1312.2 537.5 1317.1C538.8 1322.0 540.1 1326.7 541.3 1327.4C542.5 1326.0 543.7 1315.0 544.8 1306.9C547.0 1290.3 549.1 1250.2 551.3 1242.5C552.1 1241.1 552.8 1239.8 553.6 1239.6C554.4 1240.0 555.2 1243.3 556.0 1246.0C557.4 1251.9 558.9 1269.5 560.4 1271.2C561.8 1270.4 563.3 1265.0 564.7 1260.1C567.7 1247.1 570.6 1197.3 573.5 1192.8C574.7 1192.8 575.9 1192.8 577.0 1192.8C578.0 1193.6 579.0 1201.4 580.0 1205.9C581.4 1212.8 582.9 1223.7 584.3 1227.3C585.1 1228.7 585.9 1230.0 586.7 1230.2C588.8 1227.4 591.0 1190.6 593.1 1187.8C594.6 1188.7 596.0 1198.5 597.5 1201.5C599.5 1204.9 601.4 1205.5 603.4 1208.9C604.3 1210.9 605.3 1214.0 606.3 1217.6C608.2 1226.0 610.2 1243.0 612.1 1252.7C612.9 1256.4 613.7 1261.8 614.5 1262.4C616.9 1261.5 619.4 1249.3 621.8 1248.4C623.9 1249.2 626.1 1255.6 628.2 1261.5C629.2 1264.7 630.2 1273.8 631.2 1274.7C632.6 1274.5 634.1 1272.5 635.5 1272.3C637.0 1272.8 638.5 1276.5 639.9 1279.1C641.7 1282.5 643.4 1290.5 645.2 1291.4C646.9 1291.0 648.5 1288.9 650.2 1286.4C652.4 1280.8 654.7 1251.4 656.9 1246.9C658.6 1245.3 660.2 1245.3 661.9 1244.0C663.6 1242.1 665.4 1235.2 667.1 1234.6C667.8 1235.1 668.5 1240.9 669.2 1241.9C669.9 1242.5 670.6 1242.5 671.2 1243.1C673.0 1245.3 674.7 1256.7 676.5 1257.7C677.5 1257.6 678.5 1257.1 679.4 1256.6C682.4 1253.6 685.3 1239.9 688.2 1233.7C689.9 1230.6 691.5 1226.1 693.2 1225.5C694.3 1226.2 695.3 1231.2 696.4 1235.2C697.6 1240.1 698.7 1251.1 699.9 1254.2C700.7 1255.6 701.5 1255.9 702.2 1257.1C704.6 1262.2 706.9 1282.3 709.3 1284.1C710.7 1283.2 712.2 1274.5 713.7 1271.8C714.4 1270.5 715.2 1270.0 716.0 1268.8C718.9 1263.3 721.8 1245.9 724.8 1243.1C725.5 1242.8 726.1 1242.8 726.8 1242.5C728.1 1241.8 729.4 1238.4 730.6 1238.1C731.6 1238.5 732.6 1241.5 733.6 1244.0C735.0 1248.4 736.5 1259.8 737.9 1263.0C739.4 1265.2 740.9 1267.1 742.3 1267.4C743.3 1267.1 744.3 1265.4 745.3 1263.9C747.7 1259.1 750.1 1247.6 752.6 1240.2C754.0 1235.9 755.5 1228.7 757.0 1227.9C757.9 1228.6 758.9 1234.1 759.9 1238.1C762.6 1250.7 765.3 1284.5 768.1 1287.9C769.0 1287.9 769.8 1287.9 770.7 1287.9C772.0 1287.3 773.2 1280.6 774.5 1279.1C775.3 1278.4 776.1 1278.2 776.9 1277.6C778.0 1276.7 779.2 1274.3 780.4 1274.1C781.8 1274.6 783.3 1281.5 784.8 1282.0C785.7 1281.6 786.7 1276.5 787.7 1276.2C790.6 1277.1 793.5 1289.8 796.5 1290.8C797.1 1290.8 797.8 1290.8 798.5 1290.8C799.5 1291.0 800.5 1294.3 801.4 1294.6C803.0 1292.9 804.5 1271.1 806.1 1269.4C807.6 1269.6 809.0 1271.0 810.5 1272.3C813.6 1276.4 816.7 1291.2 819.9 1296.6C821.1 1298.5 822.4 1300.7 823.7 1301.0C825.8 1300.4 828.0 1292.8 830.1 1292.2C832.5 1292.3 835.0 1292.8 837.4 1292.8C838.9 1292.4 840.3 1287.4 841.8 1287.0C843.3 1288.8 844.7 1311.1 846.2 1314.2C847.0 1314.9 847.8 1315.0 848.5 1315.6C850.0 1317.6 851.5 1327.4 852.9 1328.2C856.3 1325.4 859.7 1298.9 863.2 1286.4C864.8 1280.6 866.5 1271.4 868.1 1270.3C868.8 1270.3 869.5 1270.3 870.2 1270.3C871.9 1271.3 873.7 1280.4 875.4 1284.9C876.9 1288.6 878.4 1294.5 879.8 1295.2C881.3 1295.1 882.8 1294.6 884.2 1293.7C884.7 1293.2 885.2 1290.3 885.7 1289.9C886.7 1289.5 887.6 1289.4 888.6 1289.3C889.3 1290.1 890.0 1300.0 890.7 1301.6C891.4 1302.6 892.2 1303.2 893.0 1303.4C894.2 1303.1 895.3 1299.8 896.5 1299.6C897.1 1299.9 897.7 1305.0 898.3 1305.4C899.9 1304.7 901.6 1297.2 903.2 1294.6C904.9 1292.3 906.6 1289.7 908.2 1289.3C910.0 1289.5 911.7 1291.0 913.5 1292.2C915.6 1294.0 917.8 1299.1 919.9 1299.6C921.7 1299.4 923.4 1298.6 925.2 1297.5C926.6 1296.1 928.1 1291.6 929.6 1287.9C931.5 1282.3 933.5 1271.7 935.4 1267.4C936.1 1266.1 936.8 1264.6 937.5 1264.4C938.4 1264.5 939.4 1265.3 940.4 1265.3C941.7 1265.0 942.9 1261.3 944.2 1260.1C945.7 1258.8 947.1 1258.6 948.6 1257.1C950.5 1253.9 952.5 1240.5 954.4 1233.7C955.6 1229.9 956.8 1224.2 958.0 1223.5C959.2 1223.6 960.5 1224.4 961.8 1225.5C962.7 1227.0 963.7 1234.5 964.7 1236.7C965.9 1238.8 967.2 1239.2 968.5 1241.0C969.7 1243.0 970.8 1247.2 972.0 1248.9C973.5 1250.7 974.9 1252.5 976.4 1252.7C977.4 1252.6 978.3 1251.1 979.3 1249.8C980.1 1248.5 980.9 1244.4 981.7 1244.0C982.3 1244.2 983.0 1245.7 983.7 1246.9C985.6 1250.6 987.6 1256.8 989.5 1261.5C992.3 1268.1 995.0 1271.7 997.7 1280.5C999.1 1285.9 1000.5 1302.4 1001.8 1303.9C1003.1 1303.9 1004.4 1303.7 1005.6 1303.4C1006.9 1302.7 1008.2 1298.4 1009.4 1298.1C1011.1 1298.7 1012.8 1307.1 1014.4 1307.8C1016.7 1307.6 1018.9 1305.6 1021.1 1305.4C1021.8 1305.8 1022.5 1309.8 1023.2 1311.3C1024.4 1313.4 1025.5 1315.9 1026.7 1316.2C1028.2 1316.0 1029.6 1315.0 1031.1 1313.3C1032.4 1310.3 1033.6 1289.8 1034.9 1286.4C1035.4 1285.7 1035.9 1285.6 1036.4 1284.9C1037.6 1282.9 1038.8 1276.6 1040.0 1274.7C1041.0 1273.6 1042.0 1272.5 1042.9 1272.3C1043.7 1272.5 1044.5 1274.5 1045.3 1274.7C1046.2 1274.1 1047.2 1267.0 1048.2 1265.3C1049.8 1263.3 1051.5 1261.8 1053.2 1261.5C1054.1 1261.7 1055.1 1263.4 1056.1 1264.4C1058.0 1266.8 1060.0 1272.1 1061.9 1272.6C1062.6 1272.6 1063.3 1271.8 1064.0 1271.8C1066.2 1272.3 1068.5 1276.3 1070.7 1279.1C1071.7 1280.4 1072.7 1283.2 1073.6 1283.5C1075.9 1282.8 1078.1 1273.9 1080.4 1273.2C1082.0 1274.4 1083.7 1289.6 1085.3 1290.8C1087.0 1290.3 1088.7 1284.5 1090.3 1283.5C1091.1 1283.2 1091.9 1282.9 1092.7 1282.9C1093.6 1283.1 1094.6 1285.0 1095.6 1286.4C1099.3 1292.1 1103.0 1298.4 1106.7 1308.3C1108.4 1313.6 1110.0 1323.9 1111.7 1330.3C1113.1 1335.5 1114.6 1343.4 1116.1 1344.3C1117.5 1343.8 1119.0 1336.7 1120.5 1336.1C1121.1 1336.2 1121.8 1337.5 1122.5 1337.6C1125.2 1336.7 1128.0 1327.1 1130.7 1324.4C1131.5 1323.8 1132.3 1323.7 1133.0 1323.0C1134.7 1320.7 1136.4 1311.5 1138.0 1308.3C1138.8 1307.1 1139.6 1306.9 1140.4 1305.4C1141.0 1303.6 1141.7 1295.9 1142.4 1295.2C1143.4 1295.3 1144.3 1296.5 1145.3 1296.6C1146.5 1296.2 1147.7 1291.2 1148.8 1290.8C1149.6 1290.9 1150.4 1292.1 1151.2 1292.2C1152.2 1292.0 1153.1 1288.1 1154.1 1287.9C1154.8 1288.1 1155.5 1290.3 1156.1 1292.2C1156.9 1295.0 1157.7 1304.0 1158.5 1304.8C1160.0 1304.3 1161.4 1299.5 1162.9 1296.6C1164.5 1293.2 1166.2 1286.5 1167.9 1285.8C1168.6 1285.9 1169.4 1287.7 1170.2 1287.9C1171.2 1287.5 1172.1 1282.4 1173.1 1282.0C1173.8 1282.0 1174.5 1282.0 1175.2 1282.0C1176.4 1282.8 1177.7 1289.8 1179.0 1293.7C1179.9 1296.7 1180.9 1301.9 1181.9 1302.5C1183.1 1302.3 1184.2 1299.8 1185.4 1299.6C1186.7 1300.2 1187.9 1308.6 1189.2 1309.2C1190.7 1309.1 1192.1 1307.0 1193.6 1306.9C1195.5 1307.3 1197.5 1313.2 1199.4 1313.6C1200.9 1313.6 1202.4 1313.3 1203.8 1313.3C1206.3 1314.0 1208.7 1322.3 1211.2 1323.0C1212.6 1322.4 1214.1 1314.8 1215.5 1314.2C1216.3 1314.6 1217.1 1319.6 1217.9 1320.0C1218.6 1320.0 1219.2 1320.0 1219.9 1320.0C1220.9 1319.2 1221.9 1310.9 1222.9 1307.5C1224.3 1302.8 1225.8 1297.3 1227.2 1295.8C1228.2 1295.2 1229.2 1294.7 1230.2 1294.6C1230.9 1294.8 1231.7 1297.3 1232.5 1297.5C1234.9 1296.5 1237.4 1283.0 1239.8 1282.0C1240.5 1282.0 1241.2 1282.0 1241.9 1282.0C1243.3 1282.5 1244.8 1288.8 1246.3 1289.3C1247.9 1289.2 1249.6 1287.1 1251.2 1287.0C1253.5 1287.5 1255.7 1291.5 1258.0 1295.2C1261.1 1301.5 1264.2 1323.0 1267.3 1325.0C1269.1 1323.8 1270.8 1308.1 1272.6 1306.9C1273.1 1307.0 1273.6 1309.1 1274.1 1309.2C1275.8 1308.5 1277.6 1298.8 1279.3 1298.1C1280.0 1298.7 1280.7 1303.7 1281.4 1306.9C1283.3 1316.4 1285.3 1328.8 1287.2 1339.1C1288.7 1346.6 1290.1 1359.5 1291.6 1361.0C1292.3 1361.0 1293.0 1361.0 1293.7 1361.0C1296.9 1359.1 1300.1 1334.5 1303.3 1332.6C1304.0 1332.7 1304.7 1332.9 1305.4 1333.2C1306.1 1334.0 1306.9 1339.2 1307.7 1339.6C1309.2 1339.6 1310.6 1339.6 1312.1 1339.6C1313.1 1340.0 1314.0 1344.6 1315.0 1344.9C1316.5 1342.6 1317.9 1318.9 1319.4 1309.8C1321.8 1296.5 1324.3 1280.3 1326.7 1278.2C1327.7 1278.7 1328.7 1283.9 1329.6 1286.4C1334.0 1296.8 1338.4 1308.6 1342.8 1313.3C1343.8 1314.1 1344.8 1314.9 1345.7 1315.1C1347.2 1314.5 1348.7 1307.4 1350.1 1306.9C1350.9 1307.0 1351.7 1307.6 1352.5 1308.3C1354.1 1311.3 1355.8 1331.0 1357.4 1332.6C1358.2 1332.6 1359.0 1332.6 1359.8 1332.6C1361.4 1333.0 1363.1 1338.1 1364.8 1338.5C1366.2 1338.1 1367.7 1333.6 1369.1 1333.2C1370.6 1333.2 1372.1 1333.7 1373.5 1333.8C1374.5 1333.7 1375.5 1333.1 1376.5 1332.6C1378.6 1331.0 1380.7 1326.9 1382.9 1323.8C1385.1 1320.5 1387.4 1315.5 1389.6 1313.3C1390.8 1312.4 1392.0 1312.3 1393.1 1311.3C1394.6 1309.3 1396.1 1299.5 1397.5 1298.7C1399.3 1299.0 1401.0 1301.1 1402.8 1303.9C1404.2 1307.8 1405.7 1326.4 1407.2 1330.3C1407.9 1331.4 1408.5 1331.6 1409.2 1332.6C1411.0 1335.6 1412.7 1345.5 1414.5 1346.4C1416.0 1345.9 1417.4 1343.1 1418.9 1339.9C1420.5 1334.8 1422.2 1312.7 1423.9 1309.8C1424.6 1309.3 1425.4 1309.0 1426.2 1308.9C1427.0 1309.0 1427.8 1309.6 1428.5 1310.4C1429.4 1311.8 1430.3 1319.4 1431.2 1320.0C1432.4 1319.2 1433.7 1309.7 1435.0 1306.9C1435.7 1305.6 1436.3 1305.3 1437.0 1303.9C1438.1 1301.2 1439.2 1290.8 1440.2 1289.9C1441.2 1290.1 1442.2 1291.1 1443.2 1292.2C1444.8 1295.1 1446.5 1302.3 1448.1 1309.8C1450.1 1320.3 1452.0 1352.1 1454.0 1355.1C1455.0 1355.0 1455.9 1354.4 1456.9 1353.7C1458.9 1350.1 1460.8 1324.0 1462.8 1320.0C1463.4 1319.3 1464.1 1318.7 1464.8 1318.6C1465.4 1318.9 1466.0 1321.0 1466.6 1323.0C1467.9 1328.8 1469.3 1351.1 1470.7 1353.1C1471.6 1353.1 1472.6 1353.1 1473.6 1353.1C1475.8 1351.9 1478.1 1335.9 1480.3 1334.7C1481.3 1334.9 1482.3 1337.4 1483.2 1337.6C1484.7 1337.3 1486.2 1334.0 1487.6 1333.8C1489.8 1336.2 1491.9 1367.4 1494.1 1369.8C1494.8 1369.6 1495.6 1368.3 1496.4 1366.8C1498.7 1358.8 1500.9 1308.3 1503.1 1299.6C1503.6 1298.5 1504.1 1297.4 1504.6 1297.2C1505.8 1298.1 1506.9 1304.6 1508.1 1309.8C1509.9 1318.7 1511.6 1343.9 1513.4 1346.4C1514.4 1346.3 1515.3 1346.0 1516.3 1345.5C1518.4 1340.6 1520.6 1293.4 1522.7 1285.8C1523.7 1283.9 1524.7 1282.3 1525.7 1282.0C1526.6 1282.2 1527.6 1283.5 1528.6 1284.9C1530.5 1289.1 1532.5 1303.8 1534.4 1311.3C1535.9 1316.5 1537.4 1324.1 1538.8 1325.0C1539.8 1324.8 1540.8 1322.3 1541.8 1322.1C1542.4 1322.4 1543.1 1326.2 1543.8 1326.5C1545.1 1326.3 1546.3 1325.3 1547.6 1324.4C1548.6 1323.6 1549.6 1321.1 1550.5 1320.9C1551.2 1321.0 1551.9 1322.3 1552.6 1322.4C1553.4 1322.2 1554.1 1320.2 1554.9 1320.0C1557.7 1321.2 1560.4 1336.4 1563.1 1337.6C1564.0 1337.0 1564.9 1331.1 1565.7 1328.8C1566.5 1327.0 1567.3 1324.7 1568.1 1324.4C1568.9 1324.7 1569.6 1327.7 1570.4 1327.9C1575.0 1325.0 1579.6 1287.0 1584.2 1284.1C1584.9 1284.2 1585.5 1285.4 1586.2 1286.4C1587.5 1288.8 1588.8 1296.6 1590.0 1298.1C1591.2 1298.9 1592.4 1298.8 1593.5 1299.6C1595.3 1302.1 1597.1 1319.3 1598.8 1323.0C1599.5 1323.9 1600.2 1324.9 1600.9 1325.0C1602.3 1323.7 1603.8 1306.7 1605.2 1305.4C1606.0 1305.4 1606.8 1305.4 1607.6 1305.4C1608.6 1305.2 1609.5 1303.8 1610.5 1302.5C1612.9 1297.4 1615.4 1272.4 1617.8 1270.3C1618.5 1270.3 1619.3 1270.3 1620.0 1270.3C1622.4 1272.0 1624.9 1287.9 1627.3 1295.2C1629.8 1302.0 1632.2 1310.6 1634.6 1313.3C1635.8 1314.1 1637.0 1314.9 1638.1 1315.1C1639.9 1314.2 1641.7 1303.3 1643.4 1302.5C1645.4 1304.1 1647.3 1324.7 1649.3 1326.8C1650.4 1327.1 1651.6 1327.3 1652.8 1327.4C1653.5 1326.9 1654.3 1320.5 1655.1 1320.0C1655.9 1320.2 1656.7 1321.6 1657.4 1323.0C1658.3 1325.1 1659.2 1332.5 1660.1 1334.7C1660.9 1336.1 1661.6 1336.3 1662.4 1337.6C1663.4 1339.7 1664.4 1343.8 1665.3 1347.8C1666.3 1352.2 1667.3 1359.5 1668.3 1363.9C1669.5 1369.2 1670.8 1374.7 1672.1 1377.1C1672.8 1378.0 1673.4 1379.0 1674.1 1379.1C1675.6 1378.0 1677.1 1364.4 1678.5 1361.9C1679.3 1361.0 1680.1 1360.2 1680.9 1360.1C1682.5 1360.8 1684.2 1369.1 1685.8 1369.8C1687.0 1369.2 1688.2 1364.3 1689.3 1361.0C1690.6 1357.1 1691.9 1348.6 1693.1 1347.2C1694.3 1346.8 1695.5 1346.9 1696.7 1346.4C1697.9 1345.2 1699.2 1336.8 1700.5 1336.1C1701.9 1337.3 1703.4 1353.1 1704.8 1354.3C1707.3 1353.2 1709.7 1338.7 1712.2 1337.6C1713.8 1338.0 1715.5 1343.9 1717.1 1344.3C1719.4 1343.8 1721.6 1339.4 1723.9 1336.1C1725.3 1333.8 1726.8 1328.5 1728.3 1327.9C1729.4 1328.2 1730.6 1331.5 1731.8 1331.7C1733.2 1331.4 1734.7 1326.3 1736.1 1325.9C1737.4 1326.0 1738.7 1327.8 1740.0 1327.9C1740.9 1327.9 1741.9 1327.9 1742.9 1327.9C1745.0 1329.8 1747.2 1352.1 1749.3 1356.6C1750.3 1358.0 1751.3 1359.3 1752.2 1359.5C1753.0 1359.4 1753.8 1358.2 1754.6 1358.1C1755.6 1358.3 1756.5 1361.3 1757.5 1361.6C1759.0 1360.2 1760.4 1347.3 1761.9 1340.5C1763.4 1333.9 1764.8 1323.4 1766.3 1321.5C1767.3 1321.0 1768.2 1320.7 1769.2 1320.6C1770.2 1320.9 1771.2 1323.0 1772.1 1325.0C1773.4 1328.4 1774.7 1338.4 1775.9 1342.0C1777.1 1344.6 1778.3 1345.7 1779.4 1347.8C1780.7 1350.3 1782.0 1355.5 1783.3 1356.0C1784.4 1355.5 1785.6 1351.3 1786.8 1347.8C1788.2 1342.7 1789.7 1328.7 1791.2 1325.9C1791.8 1325.2 1792.5 1324.5 1793.2 1324.4C1794.0 1324.7 1794.8 1327.0 1795.5 1328.8C1797.7 1334.9 1799.8 1347.9 1802.0 1356.6C1802.8 1359.7 1803.5 1361.9 1804.3 1365.4C1805.0 1368.8 1805.7 1377.1 1806.4 1378.0C1808.1 1377.8 1809.9 1375.0 1811.6 1374.7C1812.3 1374.7 1813.0 1374.7 1813.7 1374.7C1816.4 1373.1 1819.1 1360.2 1821.9 1350.2C1824.3 1340.1 1826.7 1324.7 1829.2 1311.3C1831.1 1300.4 1833.1 1283.7 1835.0 1277.6C1835.7 1276.1 1836.4 1274.3 1837.1 1274.1C1837.9 1274.4 1838.6 1276.8 1839.4 1279.1C1840.9 1284.7 1842.4 1299.4 1843.8 1309.8C1845.3 1320.2 1846.7 1334.5 1848.2 1341.4C1849.2 1345.2 1850.2 1349.6 1851.1 1350.2C1852.1 1350.2 1853.1 1350.2 1854.1 1350.2C1856.2 1347.9 1858.3 1318.5 1860.5 1315.6C1861.5 1315.3 1862.4 1315.1 1863.4 1315.1C1865.7 1317.3 1867.9 1347.0 1870.1 1349.3C1871.1 1349.2 1872.1 1348.5 1873.1 1347.8C1875.5 1345.2 1877.9 1334.5 1880.4 1330.3C1881.8 1328.1 1883.3 1325.4 1884.8 1325.0C1885.5 1325.7 1886.1 1330.8 1886.8 1334.7C1888.1 1343.0 1889.4 1357.8 1890.6 1368.3C1891.8 1377.7 1893.0 1389.1 1894.1 1394.6C1895.1 1398.3 1896.1 1402.3 1897.1 1402.8C1898.3 1402.0 1899.6 1395.3 1900.9 1390.3C1904.8 1371.9 1908.7 1317.8 1912.6 1311.3C1913.3 1311.0 1914.1 1310.7 1914.9 1310.7C1915.9 1310.7 1916.9 1310.9 1917.8 1311.3C1918.7 1312.1 1919.6 1318.1 1920.5 1320.0C1922.0 1322.8 1923.6 1322.9 1925.1 1325.9C1926.8 1330.6 1928.5 1345.9 1930.1 1355.1C1931.6 1363.1 1933.0 1374.7 1934.5 1377.7C1935.3 1378.6 1936.1 1379.3 1936.9 1379.4C1938.5 1377.3 1940.2 1358.7 1941.8 1347.8C1943.6 1336.1 1945.3 1316.7 1947.1 1311.3C1947.8 1309.9 1948.5 1308.5 1949.1 1308.3C1950.1 1308.7 1951.1 1311.7 1952.1 1314.2C1954.5 1321.9 1956.9 1336.7 1959.4 1350.8C1961.3 1362.9 1963.3 1379.2 1965.2 1393.2C1966.7 1403.6 1968.2 1421.9 1969.6 1423.9C1971.1 1421.9 1972.5 1404.8 1974.0 1394.6C1976.9 1374.0 1979.9 1338.7 1982.8 1329.7C1983.8 1327.9 1984.7 1326.1 1985.7 1325.9C1986.9 1326.1 1988.1 1327.5 1989.2 1328.8C1989.8 1329.6 1990.4 1330.4 1991.0 1331.7C1992.6 1337.9 1994.3 1359.7 1996.0 1374.2C1997.4 1387.1 1998.9 1406.6 2000.3 1413.7C2001.3 1417.1 2002.3 1420.5 2003.3 1421.0C2004.0 1420.9 2004.8 1420.7 2005.6 1420.4C2008.2 1415.0 2010.9 1370.4 2013.5 1352.2C2014.7 1344.9 2015.8 1334.5 2017.0 1333.2C2018.3 1335.2 2019.6 1354.1 2020.8 1362.5C2022.3 1371.4 2023.7 1377.4 2025.2 1385.9C2026.7 1394.8 2028.1 1410.6 2029.6 1415.1C2030.3 1416.5 2031.0 1417.9 2031.6 1418.0C2032.9 1417.6 2034.2 1414.2 2035.4 1410.7C2037.9 1401.3 2040.3 1365.3 2042.8 1353.7C2044.7 1346.4 2046.7 1340.3 2048.6 1337.6C2049.3 1336.9 2050.0 1336.2 2050.7 1336.1C2051.9 1336.9 2053.2 1343.0 2054.5 1347.8C2055.9 1354.1 2057.4 1370.4 2058.9 1372.7C2059.8 1373.2 2060.8 1373.5 2061.8 1373.6C2062.8 1373.0 2063.7 1368.6 2064.7 1365.4C2067.1 1356.4 2069.6 1335.0 2072.0 1330.3C2073.0 1329.2 2074.0 1328.8 2074.9 1327.9C2076.2 1326.7 2077.5 1324.1 2078.7 1323.8C2079.7 1324.1 2080.7 1325.8 2081.7 1327.9C2082.8 1332.3 2084.0 1352.6 2085.2 1359.5C2086.0 1363.3 2086.7 1366.4 2087.5 1368.3C2088.2 1369.6 2088.9 1370.0 2089.6 1371.2C2092.2 1376.8 2094.8 1395.0 2097.5 1396.7C2098.7 1396.2 2100.0 1391.6 2101.3 1388.8C2103.2 1384.4 2105.2 1375.7 2107.1 1374.7C2108.6 1374.9 2110.1 1375.5 2111.5 1376.5C2112.3 1377.3 2113.1 1381.1 2113.9 1381.5C2114.7 1381.2 2115.6 1377.9 2116.5 1377.7C2118.0 1378.5 2119.4 1389.4 2120.9 1390.3C2121.7 1390.0 2122.4 1386.7 2123.2 1386.5C2124.2 1386.6 2125.2 1388.1 2126.1 1388.2C2127.6 1387.2 2129.1 1374.6 2130.5 1373.6C2131.8 1373.6 2133.1 1373.6 2134.3 1373.6C2137.0 1372.9 2139.6 1368.8 2142.2 1363.9C2143.7 1360.3 2145.2 1351.4 2146.6 1344.9C2149.1 1333.8 2151.5 1316.6 2153.9 1310.4C2155.4 1307.7 2156.9 1304.9 2158.3 1304.5C2159.3 1304.5 2160.3 1304.5 2161.3 1304.5C2163.5 1305.7 2165.7 1320.4 2168.0 1321.5C2170.6 1320.0 2173.2 1303.9 2175.9 1299.6C2176.6 1298.7 2177.2 1297.6 2177.9 1297.5C2179.4 1298.4 2180.9 1309.2 2182.3 1311.3C2183.1 1312.0 2183.9 1312.0 2184.7 1312.7C2186.1 1315.6 2187.6 1333.1 2189.0 1337.6C2190.5 1340.9 2192.0 1343.9 2193.4 1344.3C2194.6 1344.3 2195.8 1343.9 2196.9 1343.4C2198.0 1342.7 2199.0 1339.7 2200.0 1337.6C2202.0 1333.3 2203.9 1328.0 2205.9 1323.0C2207.3 1319.2 2208.8 1313.7 2210.2 1311.3C2210.9 1310.4 2211.6 1309.3 2212.3 1309.2C2213.1 1309.6 2213.8 1313.1 2214.6 1315.6C2216.1 1321.0 2217.6 1329.1 2219.0 1336.1C2220.3 1342.3 2221.6 1350.3 2222.8 1355.1C2224.2 1359.7 2225.6 1365.5 2226.9 1366.3C2227.9 1366.2 2228.9 1365.9 2229.8 1365.4C2231.1 1362.7 2232.4 1342.6 2233.6 1333.2C2234.6 1326.4 2235.6 1318.5 2236.6 1315.1C2237.5 1312.5 2238.5 1310.1 2239.5 1309.8C2241.0 1310.6 2242.4 1316.9 2243.9 1321.5C2245.3 1326.6 2246.8 1334.7 2248.3 1340.5C2249.9 1346.9 2251.6 1356.9 2253.2 1358.1C2254.2 1357.9 2255.2 1355.3 2256.2 1355.1C2257.6 1355.8 2259.1 1364.2 2260.6 1364.8C2262.3 1364.1 2264.1 1357.2 2265.8 1353.7C2267.8 1349.8 2269.7 1345.5 2271.7 1342.6C2272.7 1341.2 2273.6 1340.6 2274.6 1339.1C2276.1 1336.3 2277.5 1327.6 2279.0 1326.8C2280.0 1327.0 2280.9 1329.7 2281.9 1330.9C2283.9 1333.0 2285.8 1335.8 2287.8 1336.1C2288.9 1336.0 2290.1 1334.8 2291.3 1334.7C2292.8 1334.8 2294.4 1336.0 2296.0 1336.1C2297.6 1335.6 2299.3 1328.8 2300.9 1328.2C2302.4 1329.0 2303.9 1338.4 2305.3 1340.5C2306.8 1342.0 2308.3 1343.2 2309.7 1343.4C2311.4 1343.1 2313.0 1338.5 2314.7 1338.2C2316.4 1338.6 2318.2 1344.5 2320.0 1344.9C2321.4 1344.2 2322.9 1338.3 2324.3 1334.7C2325.8 1331.0 2327.3 1326.4 2328.7 1323.0C2330.2 1319.7 2331.7 1316.6 2333.1 1314.2C2334.4 1312.3 2335.7 1310.5 2336.9 1309.2C2338.3 1307.9 2339.7 1306.2 2341.0 1306.0C2342.5 1306.9 2343.9 1318.6 2345.4 1319.5C2346.9 1318.8 2348.3 1310.4 2349.8 1309.8C2350.8 1310.2 2351.7 1313.3 2352.7 1315.6C2353.5 1317.8 2354.3 1323.3 2355.1 1323.8C2355.7 1323.8 2356.4 1323.4 2357.1 1323.0C2358.2 1321.9 2359.3 1316.7 2360.3 1316.2C2361.7 1316.6 2363.1 1321.1 2364.4 1321.5C2365.2 1321.3 2366.0 1318.8 2366.8 1318.6C2367.7 1318.6 2368.7 1318.6 2369.7 1318.6C2370.9 1319.3 2372.0 1325.1 2373.2 1328.8C2375.0 1334.6 2376.7 1342.4 2378.5 1347.8C2379.1 1349.8 2379.8 1352.7 2380.5 1353.1C2381.6 1352.8 2382.7 1348.7 2383.7 1348.4C2385.2 1349.1 2386.7 1358.2 2388.1 1358.9C2389.3 1358.4 2390.5 1352.8 2391.6 1350.8C2392.6 1349.3 2393.6 1347.5 2394.6 1347.2C2396.3 1347.2 2398.1 1347.2 2399.8 1347.2C2400.8 1347.5 2401.8 1349.2 2402.8 1350.8C2404.2 1353.5 2405.7 1362.5 2407.1 1363.3C2408.5 1363.1 2409.9 1360.3 2411.2 1360.1C2413.0 1360.8 2414.7 1369.1 2416.5 1369.8C2417.5 1369.7 2418.5 1368.4 2419.4 1368.3C2420.9 1368.6 2422.4 1372.4 2423.8 1372.7C2424.8 1372.5 2425.8 1369.4 2426.7 1369.2C2428.2 1369.2 2429.7 1369.2 2431.1 1369.2C2432.8 1369.8 2434.4 1377.9 2436.1 1378.6C2436.9 1378.2 2437.7 1373.5 2438.4 1372.7C2439.1 1372.2 2439.8 1372.2 2440.5 1371.8C2441.5 1370.9 2442.4 1366.6 2443.4 1366.3C2444.0 1366.4 2444.6 1367.0 2445.2 1367.7C2445.9 1369.1 2446.5 1375.7 2447.2 1376.5C2448.0 1376.8 2448.8 1376.8 2449.6 1377.1C2450.7 1378.0 2451.9 1381.7 2453.1 1384.4C2454.3 1387.6 2455.6 1393.2 2456.9 1395.2C2457.6 1396.0 2458.2 1396.9 2458.9 1397.0C2459.9 1396.8 2460.9 1394.3 2461.8 1394.1C2462.5 1394.1 2463.2 1394.6 2463.9 1394.6C2465.5 1393.6 2467.0 1379.6 2468.6 1378.6C2469.7 1378.8 2470.9 1382.1 2472.1 1382.4C2473.3 1382.1 2474.4 1379.4 2475.6 1379.1C2476.4 1379.2 2477.2 1379.8 2477.9 1380.6C2478.7 1381.8 2479.5 1386.3 2480.3 1388.8C2481.0 1390.9 2481.6 1394.3 2482.3 1394.6C2483.3 1394.5 2484.3 1392.5 2485.3 1392.3C2487.5 1392.5 2489.7 1393.4 2492.0 1394.6C2493.2 1395.7 2494.3 1398.9 2495.5 1401.1C2497.0 1403.8 2498.4 1408.0 2499.9 1409.3C2501.2 1410.0 2502.4 1410.6 2503.7 1410.7C2504.9 1409.8 2506.0 1398.5 2507.2 1396.1C2507.7 1395.4 2508.2 1394.7 2508.7 1394.6C2509.3 1394.8 2510.0 1397.4 2510.7 1397.6C2512.5 1396.7 2514.2 1385.3 2516.0 1384.4C2517.4 1384.9 2518.9 1391.2 2520.4 1391.7C2520.9 1391.5 2521.3 1389.1 2521.8 1388.2C2523.0 1386.2 2524.2 1385.7 2525.3 1383.5C2527.1 1378.9 2528.8 1360.0 2530.6 1356.6C2531.3 1355.9 2532.0 1355.2 2532.7 1355.1C2533.6 1355.1 2534.6 1355.1 2535.6 1355.1C2536.2 1355.7 2536.7 1361.1 2537.3 1363.0C2538.0 1365.0 2538.7 1367.4 2539.4 1367.7C2540.6 1367.2 2541.7 1361.7 2542.9 1359.5C2544.2 1357.4 2545.4 1354.6 2546.7 1354.3C2547.5 1354.5 2548.3 1357.0 2549.0 1357.2C2549.7 1356.8 2550.4 1352.1 2551.1 1351.3C2552.1 1350.7 2553.0 1350.3 2554.0 1350.2C2554.7 1351.2 2555.4 1363.9 2556.1 1365.4C2557.1 1366.3 2558.2 1366.2 2559.3 1366.8C2560.6 1367.8 2562.0 1370.9 2563.4 1371.2C2564.6 1370.5 2565.9 1364.3 2567.2 1359.5C2568.1 1355.5 2569.1 1346.6 2570.1 1344.3C2570.9 1343.1 2571.7 1342.1 2572.4 1342.0C2573.3 1342.6 2574.2 1347.8 2575.1 1350.8C2575.9 1353.4 2576.6 1358.4 2577.4 1358.9C2578.1 1358.9 2578.8 1358.9 2579.5 1358.9C2580.2 1359.6 2581.0 1364.3 2581.8 1368.3C2582.6 1373.0 2583.4 1386.0 2584.1 1388.2C2585.0 1389.4 2585.9 1390.1 2586.8 1390.3C2588.0 1388.8 2589.3 1373.9 2590.6 1368.3C2591.7 1363.8 2592.9 1357.9 2594.1 1357.2C2594.9 1357.4 2595.7 1358.4 2596.4 1359.5C2597.9 1362.5 2599.4 1371.6 2600.8 1377.1C2602.5 1383.1 2604.1 1392.9 2605.8 1394.1C2606.6 1393.9 2607.4 1391.9 2608.1 1391.7C2608.9 1391.7 2609.7 1391.7 2610.5 1391.7C2611.4 1390.7 2612.2 1382.4 2613.1 1377.1C2614.7 1367.1 2616.2 1347.9 2617.8 1343.4C2618.7 1342.0 2619.5 1340.7 2620.4 1340.5C2621.4 1341.1 2622.4 1346.2 2623.3 1349.3C2624.6 1353.4 2625.9 1361.6 2627.2 1362.5C2627.9 1362.5 2628.7 1362.5 2629.5 1362.5C2631.0 1361.8 2632.4 1357.1 2633.9 1352.2C2634.9 1348.0 2635.8 1334.6 2636.8 1331.7C2637.5 1330.6 2638.2 1329.6 2638.9 1329.4C2639.5 1329.8 2640.2 1333.2 2640.9 1336.1C2642.4 1344.2 2643.8 1371.8 2645.3 1377.1C2646.3 1379.0 2647.2 1380.6 2648.2 1380.9C2649.8 1380.5 2651.3 1378.4 2652.9 1375.6C2654.1 1372.3 2655.2 1360.1 2656.4 1353.7C2657.7 1347.1 2658.9 1337.8 2660.2 1336.1C2660.9 1335.8 2661.6 1335.6 2662.3 1335.5C2663.2 1336.8 2664.2 1347.3 2665.2 1353.7C2666.6 1363.6 2668.1 1380.8 2669.6 1385.9C2670.4 1387.7 2671.1 1389.4 2671.9 1389.7C2673.1 1388.6 2674.3 1380.7 2675.4 1374.2C2676.7 1365.9 2678.0 1343.6 2679.2 1339.6C2679.9 1338.6 2680.6 1337.7 2681.3 1337.6C2682.3 1338.1 2683.2 1342.3 2684.2 1344.9C2685.5 1348.5 2686.7 1354.7 2688.0 1356.6C2689.2 1357.8 2690.3 1358.8 2691.5 1358.9C2692.2 1358.9 2692.9 1358.5 2693.6 1358.1C2694.3 1357.2 2695.1 1353.1 2695.9 1351.3C2698.1 1346.7 2700.4 1341.2 2702.6 1340.5C2703.3 1340.8 2704.0 1342.9 2704.7 1344.9C2706.1 1350.7 2707.6 1369.2 2709.1 1377.1C2710.0 1381.7 2711.0 1387.5 2712.0 1388.2C2713.5 1386.3 2714.9 1368.4 2716.4 1359.5C2718.1 1349.3 2719.9 1333.9 2721.7 1330.9C2722.0 1330.6 2722.4 1330.3 2722.8 1330.3C2724.1 1330.9 2725.4 1337.0 2726.6 1339.1C2727.3 1340.0 2728.0 1340.2 2728.7 1341.4C2730.1 1345.8 2731.6 1369.1 2733.1 1375.6C2733.8 1378.3 2734.6 1381.1 2735.4 1381.5C2736.2 1381.5 2737.0 1381.5 2737.7 1381.5" fill="none" stroke="#cc2a92" stroke-width="2" stroke-linejoin="round" stroke-linecap="round"/>
</g>
<text x="696.6" y="319.5" class="pt">| 00:01:42</text>
<text x="999.0" y="319.5" class="pt">| 00:01:43</text>
<text x="1301.5" y="319.5" class="pt">| 00:01:44</text>
<text x="1603.9" y="319.5" class="pt">| 00:01:45</text>
<text x="1906.4" y="319.5" class="pt">| 00:01:46</text>
<text x="2208.8" y="319.5" class="pt">| 00:01:47</text>
<text x="490.3" y="417.0" class="pl" style="letter-spacing:-0.41px">FT7 -40.152:47.786 (uV)</text>
<text x="490.3" y="526.5" class="pl" style="letter-spacing:-0.55px">FC5 -31.645:59.209 (uV)</text>
<text x="490.3" y="636.0" class="pl" style="letter-spacing:-0.41px">FC3 -53.38:39.92 (uV)</text>
<text x="490.3" y="745.5" class="pl" style="letter-spacing:-0.55px">FC1 -77.149:54.419 (uV)</text>
<text x="490.3" y="855.0" class="pl" style="letter-spacing:-0.55px">FC2 -77.262:46.012 (uV)</text>
<text x="490.3" y="964.5" class="pl" style="letter-spacing:-0.55px">FC4 -42.308:54.014 (uV)</text>
<text x="490.3" y="1074.0" class="pl" style="letter-spacing:-0.55px">FC6 -85.411:24.129 (uV)</text>
<text x="490.3" y="1183.5" class="pl" style="letter-spacing:-0.47px">FT8 -47.751:40.924 (uV)</text>
<line x1="2794" x2="2854" y1="307" y2="307" stroke="#3fa67c" stroke-width="2"/>
<text x="2864" y="316.4" class="lg">FT7</text>
<line x1="2794" x2="2854" y1="345" y2="345" stroke="#3b67ad" stroke-width="2"/>
<text x="2864" y="354.4" class="lg">FC5</text>
<line x1="2794" x2="2854" y1="383" y2="383" stroke="#f0b71a" stroke-width="2"/>
<text x="2864" y="392.4" class="lg">FC3</text>
<line x1="2794" x2="2854" y1="421" y2="421" stroke="#de4675" stroke-width="2"/>
<text x="2864" y="430.4" class="lg">FC1</text>
<line x1="2794" x2="2854" y1="459" y2="459" stroke="#84ba5e" stroke-width="2"/>
<text x="2864" y="468.4" class="lg">FC2</text>
<line x1="2794" x2="2854" y1="497" y2="497" stroke="#e58a24" stroke-width="2"/>
<text x="2864" y="506.4" class="lg">FC4</text>
<line x1="2794" x2="2854" y1="535" y2="535" stroke="#2b8b9b" stroke-width="2"/>
<text x="2864" y="544.4" class="lg">FC6</text>
<line x1="2794" x2="2854" y1="573" y2="573" stroke="#cc2a92" stroke-width="2"/>
<text x="2864" y="582.4" class="lg">FT8</text>
</svg>
</body></html>
